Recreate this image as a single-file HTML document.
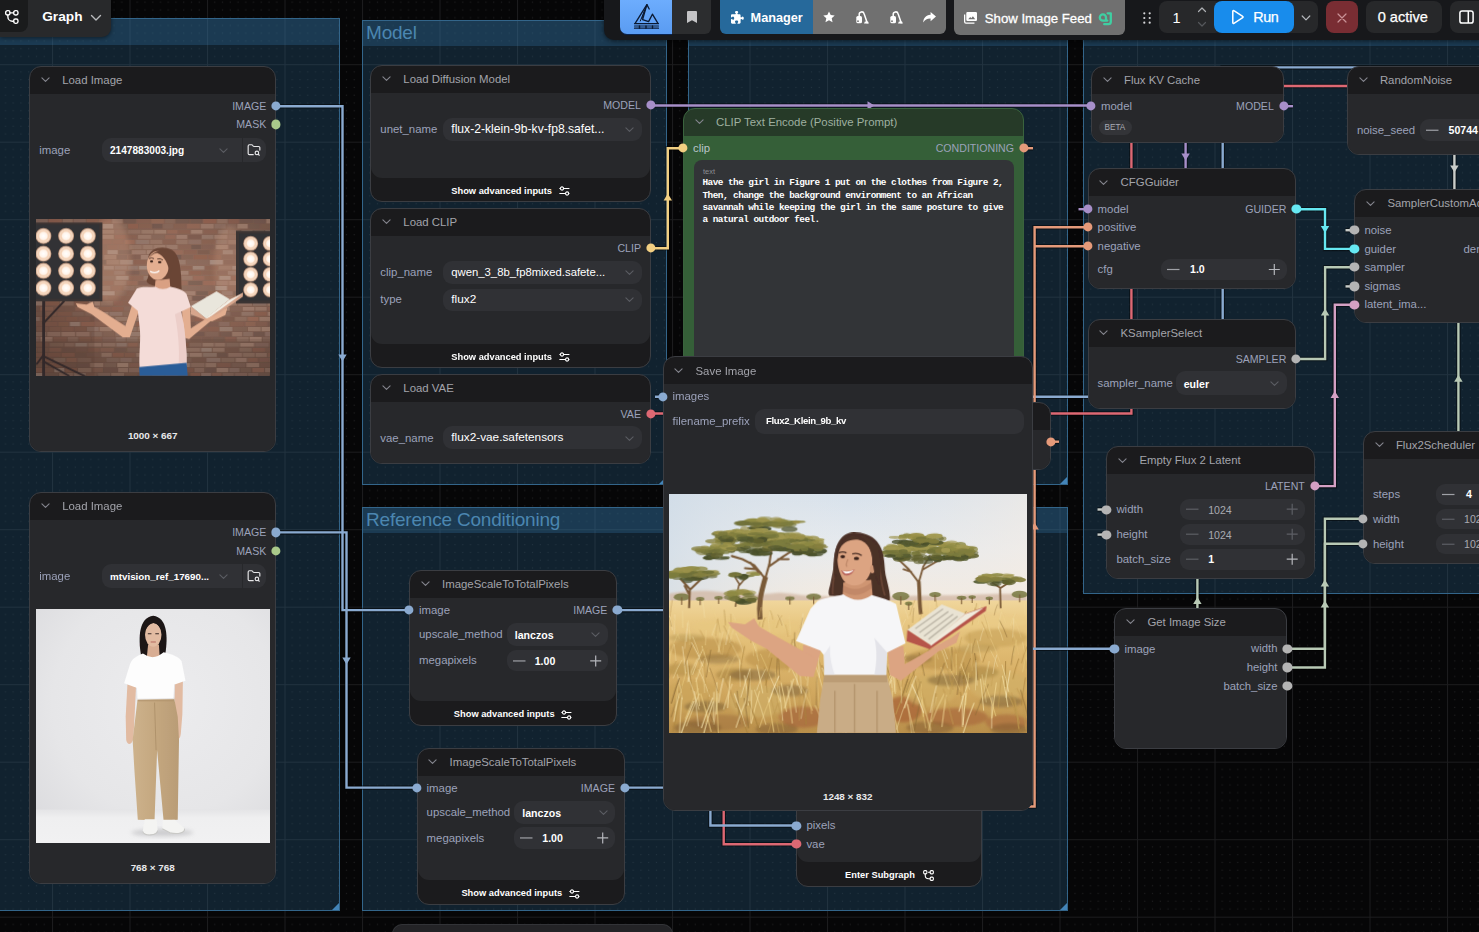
<!DOCTYPE html><html><head><meta charset="utf-8"><title>ComfyUI</title><style>
*{box-sizing:border-box;margin:0;padding:0}
html,body{width:1479px;height:932px;overflow:hidden;background:#060607}
body{font-family:"Liberation Sans",sans-serif;position:relative;color:#fff}
.abs,.node,.hd,.bd,.w,.t,.dot,.grp,.gt{position:absolute}
.grp{background:rgba(46,108,152,.28);border:1px solid #33658a}
.gt{left:0;top:0;right:0;background:rgba(56,126,178,.27)}
.gtx{position:absolute;left:3px;font-size:19px;color:#4b86b0;white-space:nowrap;line-height:1;letter-spacing:-.2px}
.node{background:#1b1b1d;border-radius:12px;border:1px solid #3b3d42}
.bd{left:1px;right:1px;background:#27282b;border-radius:0 0 11px 11px}
.t{white-space:nowrap;line-height:1;transform:translateY(-50%)}
.ttl{font-size:11.4px;color:#a3a4ab;margin-top:.8px}
.lbl{font-size:11.4px;color:#9ca2ba;margin-top:.8px}
.slo{font-size:10.6px;color:#9ca2ba}
.val{font-size:11.8px;color:#fff}
.valb{font-size:10.1px;color:#fff;font-weight:700;margin-top:.9px}
.dim{color:#a8aab0}
.w{background:#303135;border-radius:9px}
.dot{width:9.2px;height:9.2px;border-radius:50%;transform:translate(-50%,-50%)}
.foot{font-size:9.3px;font-weight:700;color:#fff}
.cap{margin-top:.9px;font-size:9.9px;font-weight:700;color:#e8e8ea}
svg{position:absolute;left:0;top:0;overflow:visible}
</style></head><body><svg width="1479" height="932"><defs><pattern id="grid" x="52" y="64.2" width="77.5" height="77.5" patternUnits="userSpaceOnUse">
<rect width="77.5" height="77.5" fill="#060607"/><g fill="#262628"><rect x="7.25" y="7.25" width="1" height="1"/><rect x="7.25" y="15.00" width="1" height="1"/><rect x="7.25" y="22.75" width="1" height="1"/><rect x="7.25" y="30.50" width="1" height="1"/><rect x="7.25" y="38.25" width="1" height="1"/><rect x="7.25" y="46.00" width="1" height="1"/><rect x="7.25" y="53.75" width="1" height="1"/><rect x="7.25" y="61.50" width="1" height="1"/><rect x="7.25" y="69.25" width="1" height="1"/><rect x="15.00" y="7.25" width="1" height="1"/><rect x="15.00" y="15.00" width="1" height="1"/><rect x="15.00" y="22.75" width="1" height="1"/><rect x="15.00" y="30.50" width="1" height="1"/><rect x="15.00" y="38.25" width="1" height="1"/><rect x="15.00" y="46.00" width="1" height="1"/><rect x="15.00" y="53.75" width="1" height="1"/><rect x="15.00" y="61.50" width="1" height="1"/><rect x="15.00" y="69.25" width="1" height="1"/><rect x="22.75" y="7.25" width="1" height="1"/><rect x="22.75" y="15.00" width="1" height="1"/><rect x="22.75" y="22.75" width="1" height="1"/><rect x="22.75" y="30.50" width="1" height="1"/><rect x="22.75" y="38.25" width="1" height="1"/><rect x="22.75" y="46.00" width="1" height="1"/><rect x="22.75" y="53.75" width="1" height="1"/><rect x="22.75" y="61.50" width="1" height="1"/><rect x="22.75" y="69.25" width="1" height="1"/><rect x="30.50" y="7.25" width="1" height="1"/><rect x="30.50" y="15.00" width="1" height="1"/><rect x="30.50" y="22.75" width="1" height="1"/><rect x="30.50" y="30.50" width="1" height="1"/><rect x="30.50" y="38.25" width="1" height="1"/><rect x="30.50" y="46.00" width="1" height="1"/><rect x="30.50" y="53.75" width="1" height="1"/><rect x="30.50" y="61.50" width="1" height="1"/><rect x="30.50" y="69.25" width="1" height="1"/><rect x="38.25" y="7.25" width="1" height="1"/><rect x="38.25" y="15.00" width="1" height="1"/><rect x="38.25" y="22.75" width="1" height="1"/><rect x="38.25" y="30.50" width="1" height="1"/><rect x="38.25" y="38.25" width="1" height="1"/><rect x="38.25" y="46.00" width="1" height="1"/><rect x="38.25" y="53.75" width="1" height="1"/><rect x="38.25" y="61.50" width="1" height="1"/><rect x="38.25" y="69.25" width="1" height="1"/><rect x="46.00" y="7.25" width="1" height="1"/><rect x="46.00" y="15.00" width="1" height="1"/><rect x="46.00" y="22.75" width="1" height="1"/><rect x="46.00" y="30.50" width="1" height="1"/><rect x="46.00" y="38.25" width="1" height="1"/><rect x="46.00" y="46.00" width="1" height="1"/><rect x="46.00" y="53.75" width="1" height="1"/><rect x="46.00" y="61.50" width="1" height="1"/><rect x="46.00" y="69.25" width="1" height="1"/><rect x="53.75" y="7.25" width="1" height="1"/><rect x="53.75" y="15.00" width="1" height="1"/><rect x="53.75" y="22.75" width="1" height="1"/><rect x="53.75" y="30.50" width="1" height="1"/><rect x="53.75" y="38.25" width="1" height="1"/><rect x="53.75" y="46.00" width="1" height="1"/><rect x="53.75" y="53.75" width="1" height="1"/><rect x="53.75" y="61.50" width="1" height="1"/><rect x="53.75" y="69.25" width="1" height="1"/><rect x="61.50" y="7.25" width="1" height="1"/><rect x="61.50" y="15.00" width="1" height="1"/><rect x="61.50" y="22.75" width="1" height="1"/><rect x="61.50" y="30.50" width="1" height="1"/><rect x="61.50" y="38.25" width="1" height="1"/><rect x="61.50" y="46.00" width="1" height="1"/><rect x="61.50" y="53.75" width="1" height="1"/><rect x="61.50" y="61.50" width="1" height="1"/><rect x="61.50" y="69.25" width="1" height="1"/><rect x="69.25" y="7.25" width="1" height="1"/><rect x="69.25" y="15.00" width="1" height="1"/><rect x="69.25" y="22.75" width="1" height="1"/><rect x="69.25" y="30.50" width="1" height="1"/><rect x="69.25" y="38.25" width="1" height="1"/><rect x="69.25" y="46.00" width="1" height="1"/><rect x="69.25" y="53.75" width="1" height="1"/><rect x="69.25" y="61.50" width="1" height="1"/><rect x="69.25" y="69.25" width="1" height="1"/></g>
<path d="M0 .5H77.5M.5 0V77.5" stroke="#1c1c1e" stroke-width="1" fill="none"/></pattern></defs>
<rect width="1479" height="932" fill="url(#grid)"/></svg><div class="grp" style="left:-10px;top:18px;width:350px;height:892.5px"><div class="gt" style="height:26px"></div><div class="abs" style="right:0;bottom:0;width:0;height:0;border-left:7px solid transparent;border-bottom:7px solid #4384b8"></div></div><div class="grp" style="left:362px;top:19.5px;width:305px;height:465.5px"><div class="gt" style="height:25.0px"><span class="gtx" style="top:2.2px">Model</span></div><div class="abs" style="right:0;bottom:0;width:0;height:0;border-left:7px solid transparent;border-bottom:7px solid #4384b8"></div></div><div class="grp" style="left:687.5px;top:19.5px;width:380.0px;height:465.5px"><div class="gt" style="height:25.0px"></div><div class="abs" style="right:0;bottom:0;width:0;height:0;border-left:7px solid transparent;border-bottom:7px solid #4384b8"></div></div><div class="grp" style="left:362px;top:507px;width:705.5px;height:403.5px"><div class="gt" style="height:25px"><span class="gtx" style="top:2.2px">Reference Conditioning</span></div><div class="abs" style="right:0;bottom:0;width:0;height:0;border-left:7px solid transparent;border-bottom:7px solid #4384b8"></div></div><div class="grp" style="left:1083px;top:19.5px;width:417px;height:574.5px"><div class="gt" style="height:25.0px"></div></div><svg width="1479" height="932" fill="none" stroke-linejoin="miter"><path d="M276 106.2L342.5 106.2L342.5 610.1L409 610.1" stroke="rgba(0,0,0,.45)" stroke-width="4.6"/><path d="M276 532.4L346.5 532.4L346.5 787.6L416.6 787.6" stroke="rgba(0,0,0,.45)" stroke-width="4.6"/><path d="M651 105.5L1091 105.5" stroke="rgba(0,0,0,.45)" stroke-width="4.6"/><path d="M651 248.2L667.8 248.2L667.8 148.2L683.5 148.2" stroke="rgba(0,0,0,.45)" stroke-width="4.6"/><path d="M651 413.5L723.7 413.5L723.7 844.3L796.4 844.3" stroke="rgba(0,0,0,.45)" stroke-width="4.6"/><path d="M723.7 413.5L1131.4 413.5L1131.4 86L1500 86" stroke="rgba(0,0,0,.45)" stroke-width="4.6"/><path d="M655 396.7L1222.7 396.7L1222.7 67.4L1500 67.4" stroke="rgba(0,0,0,.45)" stroke-width="4.6"/><path d="M1024 148.2L1033 148.2" stroke="rgba(0,0,0,.45)" stroke-width="4.6"/><path d="M1087.6 227.2L1034.6 227.2L1034.6 806.5L1020 806.5" stroke="rgba(0,0,0,.45)" stroke-width="4.6"/><path d="M1087.6 246.2L1034.6 246.2" stroke="rgba(0,0,0,.45)" stroke-width="4.6"/><path d="M1051 441.7L1059 441.7" stroke="rgba(0,0,0,.45)" stroke-width="4.6"/><path d="M1283.8 106.2L1293 106.2" stroke="rgba(0,0,0,.45)" stroke-width="4.6"/><path d="M1185.6 143L1185.6 168" stroke="rgba(0,0,0,.45)" stroke-width="4.6"/><path d="M1078.5 209.2L1087.6 209.2" stroke="rgba(0,0,0,.45)" stroke-width="4.6"/><path d="M1296.4 209.2L1325 209.2L1325 248.9L1354.4 248.9" stroke="rgba(0,0,0,.45)" stroke-width="4.6"/><path d="M1296.3 359L1325.1 359L1325.1 267.2L1354.4 267.2" stroke="rgba(0,0,0,.45)" stroke-width="4.6"/><path d="M1314.8 486.1L1334.8 486.1L1334.8 304.7L1354.4 304.7" stroke="rgba(0,0,0,.45)" stroke-width="4.6"/><path d="M1454.4 155L1454.4 189" stroke="rgba(0,0,0,.45)" stroke-width="4.6"/><path d="M1345.5 230.2L1354.4 230.2" stroke="rgba(0,0,0,.45)" stroke-width="4.6"/><path d="M1345.5 286.4L1354.4 286.4" stroke="rgba(0,0,0,.45)" stroke-width="4.6"/><path d="M1458.4 323L1458.4 431" stroke="rgba(0,0,0,.45)" stroke-width="4.6"/><path d="M1287.5 648.8L1324.9 648.8L1324.9 518.8L1362.9 518.8" stroke="rgba(0,0,0,.45)" stroke-width="4.6"/><path d="M1287.5 667.5L1324.9 667.5L1324.9 543.8L1362.9 543.8" stroke="rgba(0,0,0,.45)" stroke-width="4.6"/><path d="M1097.5 509.5L1106.4 509.5" stroke="rgba(0,0,0,.45)" stroke-width="4.6"/><path d="M1097.5 534.6L1106.4 534.6" stroke="rgba(0,0,0,.45)" stroke-width="4.6"/><path d="M1197.4 578L1197.4 608" stroke="rgba(0,0,0,.45)" stroke-width="4.6"/><path d="M1033 648.8L1114.4 648.8" stroke="rgba(0,0,0,.45)" stroke-width="4.6"/><path d="M617.4 610.1L663 610.1" stroke="rgba(0,0,0,.45)" stroke-width="4.6"/><path d="M624 787.6L663 787.6" stroke="rgba(0,0,0,.45)" stroke-width="4.6"/><path d="M710.4 800L710.4 825.5L796.4 825.5" stroke="rgba(0,0,0,.45)" stroke-width="4.6"/><path d="M276 106.2L342.5 106.2L342.5 610.1L409 610.1" stroke="#8aaad0" stroke-width="2.4"/><polygon points="338.3,354.5 346.7,354.5 342.5,361.5" fill="#8aaad0" stroke="none"/><path d="M276 532.4L346.5 532.4L346.5 787.6L416.6 787.6" stroke="#8aaad0" stroke-width="2.4"/><polygon points="342.3,657.5 350.7,657.5 346.5,664.5" fill="#8aaad0" stroke="none"/><path d="M651 105.5L1091 105.5" stroke="#a78fc9" stroke-width="2.4"/><polygon points="867.5,101.3 867.5,109.7 874.5,105.5" fill="#a78fc9" stroke="none"/><path d="M651 248.2L667.8 248.2L667.8 148.2L683.5 148.2" stroke="#f2cf82" stroke-width="2.4"/><polygon points="663.5999999999999,200.5 672.0,200.5 667.8,193.5" fill="#f2cf82" stroke="none"/><path d="M651 413.5L723.7 413.5L723.7 844.3L796.4 844.3" stroke="#dd6873" stroke-width="2.4"/><path d="M723.7 413.5L1131.4 413.5L1131.4 86L1500 86" stroke="#dd6873" stroke-width="2.4"/><path d="M655 396.7L1222.7 396.7L1222.7 67.4L1500 67.4" stroke="#8aaad0" stroke-width="2.4"/><path d="M1024 148.2L1033 148.2" stroke="#e59a7a" stroke-width="2.4"/><path d="M1087.6 227.2L1034.6 227.2L1034.6 806.5L1020 806.5" stroke="#e59a7a" stroke-width="2.4"/><polygon points="1030.3999999999999,529.5 1038.8,529.5 1034.6,522.5" fill="#e59a7a" stroke="none"/><path d="M1087.6 246.2L1034.6 246.2" stroke="#e59a7a" stroke-width="2.4"/><path d="M1051 441.7L1059 441.7" stroke="#e59a7a" stroke-width="2.4"/><path d="M1283.8 106.2L1293 106.2" stroke="#a78fc9" stroke-width="2.4"/><path d="M1185.6 143L1185.6 168" stroke="#a78fc9" stroke-width="2.4"/><polygon points="1181.3999999999999,153.5 1189.8,153.5 1185.6,160.5" fill="#a78fc9" stroke="none"/><path d="M1078.5 209.2L1087.6 209.2" stroke="#a78fc9" stroke-width="2.4"/><path d="M1296.4 209.2L1325 209.2L1325 248.9L1354.4 248.9" stroke="#66e8f2" stroke-width="2.4"/><polygon points="1320.8,226.0 1329.2,226.0 1325,233.0" fill="#66e8f2" stroke="none"/><path d="M1296.3 359L1325.1 359L1325.1 267.2L1354.4 267.2" stroke="#b8c9b5" stroke-width="2.4"/><polygon points="1320.8999999999999,315.5 1329.3,315.5 1325.1,308.5" fill="#b8c9b5" stroke="none"/><path d="M1314.8 486.1L1334.8 486.1L1334.8 304.7L1354.4 304.7" stroke="#d4a0c4" stroke-width="2.4"/><polygon points="1330.6,398.0 1339.0,398.0 1334.8,391.0" fill="#d4a0c4" stroke="none"/><path d="M1454.4 155L1454.4 189" stroke="#c9cdc9" stroke-width="2.4"/><polygon points="1450.2,165.5 1458.6000000000001,165.5 1454.4,172.5" fill="#c9cdc9" stroke="none"/><path d="M1345.5 230.2L1354.4 230.2" stroke="#c9cdc9" stroke-width="2.4"/><path d="M1345.5 286.4L1354.4 286.4" stroke="#c9cdc9" stroke-width="2.4"/><path d="M1458.4 323L1458.4 431" stroke="#b8c9b5" stroke-width="2.4"/><polygon points="1454.2,381.8 1462.6000000000001,381.8 1458.4,374.8" fill="#b8c9b5" stroke="none"/><path d="M1287.5 648.8L1324.9 648.8L1324.9 518.8L1362.9 518.8" stroke="#b8c9b5" stroke-width="2.4"/><polygon points="1320.7,586.5 1329.1000000000001,586.5 1324.9,579.5" fill="#b8c9b5" stroke="none"/><path d="M1287.5 667.5L1324.9 667.5L1324.9 543.8L1362.9 543.8" stroke="#b8c9b5" stroke-width="2.4"/><polygon points="1320.7,607.5 1329.1000000000001,607.5 1324.9,600.5" fill="#b8c9b5" stroke="none"/><path d="M1097.5 509.5L1106.4 509.5" stroke="#c9cdc9" stroke-width="2.4"/><path d="M1097.5 534.6L1106.4 534.6" stroke="#c9cdc9" stroke-width="2.4"/><path d="M1197.4 578L1197.4 608" stroke="#b8c9b5" stroke-width="2.4"/><polygon points="1193.2,604.0 1201.6000000000001,604.0 1197.4,597.0" fill="#b8c9b5" stroke="none"/><path d="M1033 648.8L1114.4 648.8" stroke="#8aaad0" stroke-width="2.4"/><path d="M617.4 610.1L663 610.1" stroke="#8aaad0" stroke-width="2.4"/><path d="M624 787.6L663 787.6" stroke="#8aaad0" stroke-width="2.4"/><path d="M710.4 800L710.4 825.5L796.4 825.5" stroke="#8aaad0" stroke-width="2.4"/></svg><div class="node" style="left:29.2px;top:65.5px;width:247.10000000000002px;height:386.5px;background:#1b1b1d"><div class="abs" style="left:-1px;top:-1px;width:247.10000000000002px;height:386.5px"><div class="bd" style="top:28px;height:357.5px;background:#27282b"></div><svg width="9" height="5.4" viewBox="0 0 10 6" style="left:11.7px;top:11.600000000000001px"><path d="M1 1l4 4 4-4" fill="none" stroke="#85868f" stroke-width="1.2" stroke-linecap="round" stroke-linejoin="round"/></svg><span class="t ttl" style="left:33px;top:14.5px;color:#a3a4ab">Load Image</span><div class="dot" style="left:247.10000000000002px;top:40.5px;background:#8aaad0"></div><span class="t slo" style="right:10px;top:40.5px;">IMAGE</span><div class="dot" style="left:247.10000000000002px;top:58.900000000000006px;background:#a9c98a"></div><span class="t slo" style="right:10px;top:58.900000000000006px;">MASK</span><span class="t lbl" style="left:10px;top:84.25px;">image</span><div class="w" style="left:73.3px;top:72.0px;width:164.0px;height:24.5px;"></div><span class="t valb" style="left:80.8px;top:84.25px;">2147883003.jpg</span><svg width="9" height="5.4" viewBox="0 0 10 6" style="left:190.3px;top:82.05px"><path d="M1 1l4 4 4-4" fill="none" stroke="#5b5d63" stroke-width="1.2" stroke-linecap="round" stroke-linejoin="round"/></svg><div class="abs" style="left:212.8px;top:72.0px;width:1px;height:24.5px;background:#27282b"></div><svg width="14" height="14" viewBox="0 0 24 24" style="left:218.3px;top:77.25px"><g fill="none" stroke="#e6e6e8" stroke-width="2" stroke-linecap="round" stroke-linejoin="round"><path d="M10.7 20H4a2 2 0 0 1-2-2V5a2 2 0 0 1 2-2h3.9a2 2 0 0 1 1.69.9l.81 1.2a2 2 0 0 0 1.67.9H20a2 2 0 0 1 2 2v4.1"/><circle cx="17" cy="17" r="3"/><path d="m21 21-1.9-1.9"/></g></svg><div class="abs" style="left:7.099999999999998px;top:153.7px;width:234px;height:156.5px;overflow:hidden"><svg width="234.5" height="156.8" viewBox="15 22 1325 886" preserveAspectRatio="none" style="position:absolute;left:0;top:0"><defs>
<radialGradient id="p1bg" cx="57%" cy="38%" r="75%"><stop offset="0" stop-color="#987362"/><stop offset=".55" stop-color="#7f5e50"/><stop offset="1" stop-color="#5e463d"/></radialGradient>
<radialGradient id="p1b"><stop offset="0" stop-color="#ffffff"/><stop offset=".45" stop-color="#fff4ea"/><stop offset=".62" stop-color="#f6d2b6"/><stop offset=".8" stop-color="#f3d9c4"/><stop offset="1" stop-color="#b98a6e"/></radialGradient>
<filter id="p1f" x="-5%" y="-5%" width="110%" height="110%"><feGaussianBlur stdDeviation="3.2"/></filter>
<filter id="p1g" x="-50%" y="-50%" width="200%" height="200%"><feGaussianBlur stdDeviation="14"/></filter>
</defs><rect x="15" y="22" width="1325" height="886" fill="url(#p1bg)"/><g filter="url(#p1f)"><rect x="8" y="24" width="73" height="23" fill="#9a8278" opacity="0.30"/><rect x="86" y="24" width="74" height="23" fill="#965f4c" opacity="0.47"/><rect x="165" y="24" width="57" height="23" fill="#bb9a88" opacity="0.25"/><rect x="227" y="24" width="70" height="23" fill="#8a6e62" opacity="0.44"/><rect x="302" y="24" width="61" height="23" fill="#965f4c" opacity="0.44"/><rect x="368" y="24" width="72" height="23" fill="#965f4c" opacity="0.39"/><rect x="445" y="24" width="59" height="23" fill="#a58676" opacity="0.47"/><rect x="509" y="24" width="71" height="23" fill="#69524a" opacity="0.51"/><rect x="585" y="24" width="76" height="23" fill="#8e5f4e" opacity="0.31"/><rect x="666" y="24" width="73" height="23" fill="#a56e5a" opacity="0.36"/><rect x="744" y="24" width="55" height="23" fill="#8a6e62" opacity="0.42"/><rect x="804" y="24" width="78" height="23" fill="#69524a" opacity="0.50"/><rect x="887" y="24" width="68" height="23" fill="#69524a" opacity="0.50"/><rect x="960" y="24" width="73" height="23" fill="#965f4c" opacity="0.59"/><rect x="1038" y="24" width="59" height="23" fill="#b39282" opacity="0.28"/><rect x="1102" y="24" width="59" height="23" fill="#965f4c" opacity="0.33"/><rect x="1166" y="24" width="76" height="23" fill="#69524a" opacity="0.52"/><rect x="1247" y="24" width="64" height="23" fill="#69524a" opacity="0.43"/><rect x="1316" y="24" width="67" height="23" fill="#bb9a88" opacity="0.37"/><rect x="-41" y="53" width="68" height="23" fill="#bb9a88" opacity="0.33"/><rect x="32" y="53" width="65" height="23" fill="#b8a69c" opacity="0.57"/><rect x="102" y="53" width="55" height="23" fill="#8a6e62" opacity="0.60"/><rect x="162" y="53" width="76" height="23" fill="#77564a" opacity="0.49"/><rect x="243" y="53" width="65" height="23" fill="#9a8278" opacity="0.57"/><rect x="313" y="53" width="73" height="23" fill="#8e5f4e" opacity="0.50"/><rect x="391" y="53" width="61" height="23" fill="#b8a69c" opacity="0.54"/><rect x="457" y="53" width="73" height="23" fill="#8a6e62" opacity="0.35"/><rect x="535" y="53" width="57" height="23" fill="#965f4c" opacity="0.55"/><rect x="597" y="53" width="70" height="23" fill="#8e5f4e" opacity="0.37"/><rect x="672" y="53" width="57" height="23" fill="#69524a" opacity="0.56"/><rect x="734" y="53" width="55" height="23" fill="#8a6e62" opacity="0.40"/><rect x="794" y="53" width="68" height="23" fill="#8e5f4e" opacity="0.27"/><rect x="867" y="53" width="74" height="23" fill="#a56e5a" opacity="0.38"/><rect x="946" y="53" width="73" height="23" fill="#b39282" opacity="0.44"/><rect x="1024" y="53" width="63" height="23" fill="#9a8278" opacity="0.33"/><rect x="1092" y="53" width="56" height="23" fill="#8a6e62" opacity="0.25"/><rect x="1153" y="53" width="58" height="23" fill="#bb9a88" opacity="0.44"/><rect x="1216" y="53" width="61" height="23" fill="#69524a" opacity="0.35"/><rect x="1282" y="53" width="63" height="23" fill="#77564a" opacity="0.49"/><rect x="5" y="82" width="65" height="23" fill="#b39282" opacity="0.59"/><rect x="75" y="82" width="67" height="23" fill="#69524a" opacity="0.41"/><rect x="147" y="82" width="71" height="23" fill="#69524a" opacity="0.48"/><rect x="223" y="82" width="74" height="23" fill="#b8a69c" opacity="0.45"/><rect x="302" y="82" width="74" height="23" fill="#9a8278" opacity="0.34"/><rect x="381" y="82" width="75" height="23" fill="#a58676" opacity="0.58"/><rect x="461" y="82" width="68" height="23" fill="#8a6e62" opacity="0.43"/><rect x="534" y="82" width="72" height="23" fill="#b39282" opacity="0.25"/><rect x="611" y="82" width="68" height="23" fill="#bb9a88" opacity="0.36"/><rect x="684" y="82" width="67" height="23" fill="#bb9a88" opacity="0.46"/><rect x="756" y="82" width="59" height="23" fill="#a56e5a" opacity="0.47"/><rect x="820" y="82" width="65" height="23" fill="#965f4c" opacity="0.37"/><rect x="890" y="82" width="66" height="23" fill="#bb9a88" opacity="0.50"/><rect x="961" y="82" width="78" height="23" fill="#965f4c" opacity="0.26"/><rect x="1044" y="82" width="56" height="23" fill="#b8a69c" opacity="0.26"/><rect x="1105" y="82" width="66" height="23" fill="#8a6e62" opacity="0.47"/><rect x="1176" y="82" width="64" height="23" fill="#bb9a88" opacity="0.46"/><rect x="1245" y="82" width="60" height="23" fill="#b39282" opacity="0.31"/><rect x="1310" y="82" width="79" height="23" fill="#b39282" opacity="0.55"/><rect x="-31" y="111" width="64" height="23" fill="#69524a" opacity="0.29"/><rect x="38" y="111" width="55" height="23" fill="#bb9a88" opacity="0.49"/><rect x="98" y="111" width="59" height="23" fill="#8a6e62" opacity="0.43"/><rect x="162" y="111" width="75" height="23" fill="#8a6e62" opacity="0.33"/><rect x="242" y="111" width="60" height="23" fill="#b8a69c" opacity="0.40"/><rect x="307" y="111" width="77" height="23" fill="#8e5f4e" opacity="0.29"/><rect x="389" y="111" width="65" height="23" fill="#b39282" opacity="0.49"/><rect x="459" y="111" width="62" height="23" fill="#965f4c" opacity="0.53"/><rect x="526" y="111" width="60" height="23" fill="#8e5f4e" opacity="0.37"/><rect x="591" y="111" width="75" height="23" fill="#a58676" opacity="0.56"/><rect x="671" y="111" width="69" height="23" fill="#8a6e62" opacity="0.33"/><rect x="745" y="111" width="58" height="23" fill="#a56e5a" opacity="0.44"/><rect x="808" y="111" width="61" height="23" fill="#b39282" opacity="0.53"/><rect x="874" y="111" width="73" height="23" fill="#77564a" opacity="0.55"/><rect x="952" y="111" width="65" height="23" fill="#b8a69c" opacity="0.28"/><rect x="1022" y="111" width="74" height="23" fill="#b39282" opacity="0.46"/><rect x="1101" y="111" width="68" height="23" fill="#8a6e62" opacity="0.43"/><rect x="1174" y="111" width="63" height="23" fill="#965f4c" opacity="0.37"/><rect x="1242" y="111" width="68" height="23" fill="#8a6e62" opacity="0.40"/><rect x="1315" y="111" width="68" height="23" fill="#a56e5a" opacity="0.57"/><rect x="11" y="140" width="61" height="23" fill="#a56e5a" opacity="0.42"/><rect x="77" y="140" width="74" height="23" fill="#9a8278" opacity="0.40"/><rect x="156" y="140" width="77" height="23" fill="#a58676" opacity="0.26"/><rect x="238" y="140" width="69" height="23" fill="#b8a69c" opacity="0.51"/><rect x="312" y="140" width="64" height="23" fill="#9a8278" opacity="0.37"/><rect x="381" y="140" width="62" height="23" fill="#8e5f4e" opacity="0.55"/><rect x="448" y="140" width="64" height="23" fill="#8e5f4e" opacity="0.53"/><rect x="517" y="140" width="56" height="23" fill="#a56e5a" opacity="0.57"/><rect x="578" y="140" width="77" height="23" fill="#9a8278" opacity="0.57"/><rect x="660" y="140" width="68" height="23" fill="#bb9a88" opacity="0.27"/><rect x="733" y="140" width="70" height="23" fill="#8e5f4e" opacity="0.31"/><rect x="808" y="140" width="64" height="23" fill="#a58676" opacity="0.48"/><rect x="877" y="140" width="71" height="23" fill="#9a8278" opacity="0.39"/><rect x="953" y="140" width="74" height="23" fill="#8e5f4e" opacity="0.37"/><rect x="1032" y="140" width="63" height="23" fill="#9a8278" opacity="0.42"/><rect x="1100" y="140" width="56" height="23" fill="#b39282" opacity="0.33"/><rect x="1161" y="140" width="58" height="23" fill="#9a8278" opacity="0.56"/><rect x="1224" y="140" width="58" height="23" fill="#77564a" opacity="0.33"/><rect x="1287" y="140" width="63" height="23" fill="#77564a" opacity="0.54"/><rect x="-23" y="169" width="70" height="23" fill="#b8a69c" opacity="0.45"/><rect x="52" y="169" width="67" height="23" fill="#a56e5a" opacity="0.51"/><rect x="124" y="169" width="62" height="23" fill="#8a6e62" opacity="0.47"/><rect x="191" y="169" width="71" height="23" fill="#69524a" opacity="0.27"/><rect x="267" y="169" width="65" height="23" fill="#a56e5a" opacity="0.55"/><rect x="337" y="169" width="79" height="23" fill="#77564a" opacity="0.27"/><rect x="421" y="169" width="56" height="23" fill="#8e5f4e" opacity="0.42"/><rect x="482" y="169" width="56" height="23" fill="#8e5f4e" opacity="0.43"/><rect x="543" y="169" width="70" height="23" fill="#b39282" opacity="0.30"/><rect x="618" y="169" width="57" height="23" fill="#b39282" opacity="0.39"/><rect x="680" y="169" width="67" height="23" fill="#bb9a88" opacity="0.36"/><rect x="752" y="169" width="63" height="23" fill="#a58676" opacity="0.60"/><rect x="820" y="169" width="68" height="23" fill="#8e5f4e" opacity="0.29"/><rect x="893" y="169" width="55" height="23" fill="#69524a" opacity="0.53"/><rect x="953" y="169" width="73" height="23" fill="#77564a" opacity="0.27"/><rect x="1031" y="169" width="69" height="23" fill="#bb9a88" opacity="0.48"/><rect x="1105" y="169" width="72" height="23" fill="#69524a" opacity="0.47"/><rect x="1182" y="169" width="56" height="23" fill="#bb9a88" opacity="0.56"/><rect x="1243" y="169" width="56" height="23" fill="#b39282" opacity="0.47"/><rect x="1304" y="169" width="79" height="23" fill="#b39282" opacity="0.40"/><rect x="2" y="198" width="69" height="23" fill="#a56e5a" opacity="0.34"/><rect x="76" y="198" width="72" height="23" fill="#8a6e62" opacity="0.49"/><rect x="153" y="198" width="57" height="23" fill="#69524a" opacity="0.33"/><rect x="215" y="198" width="59" height="23" fill="#a56e5a" opacity="0.58"/><rect x="279" y="198" width="66" height="23" fill="#9a8278" opacity="0.53"/><rect x="350" y="198" width="63" height="23" fill="#8e5f4e" opacity="0.41"/><rect x="418" y="198" width="58" height="23" fill="#b8a69c" opacity="0.55"/><rect x="481" y="198" width="71" height="23" fill="#69524a" opacity="0.48"/><rect x="557" y="198" width="78" height="23" fill="#b39282" opacity="0.45"/><rect x="640" y="198" width="58" height="23" fill="#bb9a88" opacity="0.50"/><rect x="703" y="198" width="70" height="23" fill="#77564a" opacity="0.33"/><rect x="778" y="198" width="67" height="23" fill="#a56e5a" opacity="0.43"/><rect x="850" y="198" width="73" height="23" fill="#8e5f4e" opacity="0.48"/><rect x="928" y="198" width="67" height="23" fill="#77564a" opacity="0.54"/><rect x="1000" y="198" width="65" height="23" fill="#8e5f4e" opacity="0.26"/><rect x="1070" y="198" width="58" height="23" fill="#b8a69c" opacity="0.42"/><rect x="1133" y="198" width="77" height="23" fill="#8a6e62" opacity="0.45"/><rect x="1215" y="198" width="57" height="23" fill="#a56e5a" opacity="0.60"/><rect x="1277" y="198" width="73" height="23" fill="#9a8278" opacity="0.44"/><rect x="-30" y="227" width="58" height="23" fill="#9a8278" opacity="0.51"/><rect x="33" y="227" width="72" height="23" fill="#a56e5a" opacity="0.44"/><rect x="110" y="227" width="73" height="23" fill="#77564a" opacity="0.54"/><rect x="188" y="227" width="62" height="23" fill="#77564a" opacity="0.48"/><rect x="255" y="227" width="69" height="23" fill="#bb9a88" opacity="0.50"/><rect x="329" y="227" width="67" height="23" fill="#8a6e62" opacity="0.38"/><rect x="401" y="227" width="67" height="23" fill="#b39282" opacity="0.44"/><rect x="473" y="227" width="57" height="23" fill="#69524a" opacity="0.43"/><rect x="535" y="227" width="68" height="23" fill="#77564a" opacity="0.40"/><rect x="608" y="227" width="73" height="23" fill="#bb9a88" opacity="0.49"/><rect x="686" y="227" width="71" height="23" fill="#b8a69c" opacity="0.42"/><rect x="762" y="227" width="75" height="23" fill="#69524a" opacity="0.56"/><rect x="842" y="227" width="59" height="23" fill="#77564a" opacity="0.28"/><rect x="906" y="227" width="78" height="23" fill="#965f4c" opacity="0.57"/><rect x="989" y="227" width="71" height="23" fill="#965f4c" opacity="0.46"/><rect x="1065" y="227" width="60" height="23" fill="#77564a" opacity="0.34"/><rect x="1130" y="227" width="61" height="23" fill="#77564a" opacity="0.45"/><rect x="1196" y="227" width="65" height="23" fill="#a58676" opacity="0.55"/><rect x="1266" y="227" width="72" height="23" fill="#8a6e62" opacity="0.48"/><rect x="2" y="256" width="74" height="23" fill="#bb9a88" opacity="0.45"/><rect x="81" y="256" width="63" height="23" fill="#a58676" opacity="0.36"/><rect x="149" y="256" width="63" height="23" fill="#965f4c" opacity="0.53"/><rect x="217" y="256" width="61" height="23" fill="#77564a" opacity="0.45"/><rect x="283" y="256" width="62" height="23" fill="#b39282" opacity="0.42"/><rect x="350" y="256" width="59" height="23" fill="#69524a" opacity="0.60"/><rect x="414" y="256" width="70" height="23" fill="#bb9a88" opacity="0.32"/><rect x="489" y="256" width="73" height="23" fill="#b8a69c" opacity="0.44"/><rect x="567" y="256" width="70" height="23" fill="#8e5f4e" opacity="0.55"/><rect x="642" y="256" width="67" height="23" fill="#a56e5a" opacity="0.41"/><rect x="714" y="256" width="62" height="23" fill="#a58676" opacity="0.48"/><rect x="781" y="256" width="79" height="23" fill="#b8a69c" opacity="0.27"/><rect x="865" y="256" width="61" height="23" fill="#8a6e62" opacity="0.33"/><rect x="931" y="256" width="61" height="23" fill="#8a6e62" opacity="0.30"/><rect x="997" y="256" width="74" height="23" fill="#b8a69c" opacity="0.55"/><rect x="1076" y="256" width="63" height="23" fill="#77564a" opacity="0.55"/><rect x="1144" y="256" width="65" height="23" fill="#77564a" opacity="0.40"/><rect x="1214" y="256" width="78" height="23" fill="#8e5f4e" opacity="0.29"/><rect x="1297" y="256" width="63" height="23" fill="#8a6e62" opacity="0.26"/><rect x="-37" y="285" width="73" height="23" fill="#b8a69c" opacity="0.37"/><rect x="41" y="285" width="55" height="23" fill="#b39282" opacity="0.37"/><rect x="101" y="285" width="67" height="23" fill="#965f4c" opacity="0.28"/><rect x="173" y="285" width="75" height="23" fill="#bb9a88" opacity="0.51"/><rect x="253" y="285" width="70" height="23" fill="#69524a" opacity="0.29"/><rect x="328" y="285" width="65" height="23" fill="#8e5f4e" opacity="0.56"/><rect x="398" y="285" width="57" height="23" fill="#b8a69c" opacity="0.40"/><rect x="460" y="285" width="69" height="23" fill="#9a8278" opacity="0.57"/><rect x="534" y="285" width="58" height="23" fill="#9a8278" opacity="0.58"/><rect x="597" y="285" width="66" height="23" fill="#b8a69c" opacity="0.52"/><rect x="668" y="285" width="79" height="23" fill="#965f4c" opacity="0.35"/><rect x="752" y="285" width="76" height="23" fill="#b8a69c" opacity="0.48"/><rect x="833" y="285" width="63" height="23" fill="#8e5f4e" opacity="0.51"/><rect x="901" y="285" width="65" height="23" fill="#b8a69c" opacity="0.45"/><rect x="971" y="285" width="71" height="23" fill="#8e5f4e" opacity="0.48"/><rect x="1047" y="285" width="71" height="23" fill="#b39282" opacity="0.27"/><rect x="1123" y="285" width="64" height="23" fill="#b8a69c" opacity="0.50"/><rect x="1192" y="285" width="78" height="23" fill="#77564a" opacity="0.48"/><rect x="1275" y="285" width="78" height="23" fill="#b8a69c" opacity="0.30"/><rect x="4" y="314" width="75" height="23" fill="#965f4c" opacity="0.29"/><rect x="84" y="314" width="72" height="23" fill="#77564a" opacity="0.57"/><rect x="161" y="314" width="75" height="23" fill="#b8a69c" opacity="0.46"/><rect x="241" y="314" width="72" height="23" fill="#8a6e62" opacity="0.48"/><rect x="318" y="314" width="69" height="23" fill="#965f4c" opacity="0.36"/><rect x="392" y="314" width="60" height="23" fill="#8e5f4e" opacity="0.29"/><rect x="457" y="314" width="60" height="23" fill="#9a8278" opacity="0.44"/><rect x="522" y="314" width="78" height="23" fill="#69524a" opacity="0.38"/><rect x="605" y="314" width="63" height="23" fill="#8a6e62" opacity="0.38"/><rect x="673" y="314" width="59" height="23" fill="#a56e5a" opacity="0.42"/><rect x="737" y="314" width="63" height="23" fill="#a58676" opacity="0.49"/><rect x="805" y="314" width="71" height="23" fill="#b39282" opacity="0.56"/><rect x="881" y="314" width="67" height="23" fill="#965f4c" opacity="0.44"/><rect x="953" y="314" width="79" height="23" fill="#8e5f4e" opacity="0.37"/><rect x="1037" y="314" width="58" height="23" fill="#77564a" opacity="0.34"/><rect x="1100" y="314" width="58" height="23" fill="#b8a69c" opacity="0.29"/><rect x="1163" y="314" width="79" height="23" fill="#8e5f4e" opacity="0.31"/><rect x="1247" y="314" width="61" height="23" fill="#bb9a88" opacity="0.40"/><rect x="1313" y="314" width="78" height="23" fill="#69524a" opacity="0.54"/><rect x="-27" y="343" width="73" height="23" fill="#bb9a88" opacity="0.30"/><rect x="51" y="343" width="67" height="23" fill="#a58676" opacity="0.44"/><rect x="123" y="343" width="60" height="23" fill="#bb9a88" opacity="0.31"/><rect x="188" y="343" width="63" height="23" fill="#b39282" opacity="0.52"/><rect x="256" y="343" width="55" height="23" fill="#965f4c" opacity="0.56"/><rect x="316" y="343" width="67" height="23" fill="#b39282" opacity="0.44"/><rect x="388" y="343" width="73" height="23" fill="#8a6e62" opacity="0.47"/><rect x="466" y="343" width="71" height="23" fill="#b8a69c" opacity="0.50"/><rect x="542" y="343" width="76" height="23" fill="#965f4c" opacity="0.26"/><rect x="623" y="343" width="61" height="23" fill="#b8a69c" opacity="0.25"/><rect x="689" y="343" width="79" height="23" fill="#b8a69c" opacity="0.33"/><rect x="773" y="343" width="60" height="23" fill="#9a8278" opacity="0.47"/><rect x="838" y="343" width="61" height="23" fill="#a58676" opacity="0.52"/><rect x="904" y="343" width="61" height="23" fill="#a56e5a" opacity="0.53"/><rect x="970" y="343" width="75" height="23" fill="#965f4c" opacity="0.29"/><rect x="1050" y="343" width="64" height="23" fill="#b8a69c" opacity="0.56"/><rect x="1119" y="343" width="59" height="23" fill="#965f4c" opacity="0.53"/><rect x="1183" y="343" width="74" height="23" fill="#a56e5a" opacity="0.26"/><rect x="1262" y="343" width="74" height="23" fill="#a58676" opacity="0.43"/><rect x="0" y="372" width="72" height="23" fill="#a56e5a" opacity="0.58"/><rect x="77" y="372" width="65" height="23" fill="#b39282" opacity="0.55"/><rect x="147" y="372" width="77" height="23" fill="#77564a" opacity="0.28"/><rect x="229" y="372" width="74" height="23" fill="#a56e5a" opacity="0.50"/><rect x="308" y="372" width="78" height="23" fill="#b39282" opacity="0.60"/><rect x="391" y="372" width="61" height="23" fill="#8e5f4e" opacity="0.55"/><rect x="457" y="372" width="68" height="23" fill="#a58676" opacity="0.42"/><rect x="530" y="372" width="58" height="23" fill="#a56e5a" opacity="0.39"/><rect x="593" y="372" width="61" height="23" fill="#77564a" opacity="0.39"/><rect x="659" y="372" width="70" height="23" fill="#8e5f4e" opacity="0.44"/><rect x="734" y="372" width="68" height="23" fill="#a58676" opacity="0.48"/><rect x="807" y="372" width="64" height="23" fill="#a56e5a" opacity="0.41"/><rect x="876" y="372" width="79" height="23" fill="#69524a" opacity="0.40"/><rect x="960" y="372" width="69" height="23" fill="#a56e5a" opacity="0.50"/><rect x="1034" y="372" width="66" height="23" fill="#b39282" opacity="0.41"/><rect x="1105" y="372" width="66" height="23" fill="#bb9a88" opacity="0.39"/><rect x="1176" y="372" width="55" height="23" fill="#a58676" opacity="0.34"/><rect x="1236" y="372" width="66" height="23" fill="#77564a" opacity="0.55"/><rect x="1307" y="372" width="72" height="23" fill="#a58676" opacity="0.31"/><rect x="-23" y="401" width="60" height="23" fill="#bb9a88" opacity="0.39"/><rect x="42" y="401" width="60" height="23" fill="#b8a69c" opacity="0.26"/><rect x="107" y="401" width="58" height="23" fill="#bb9a88" opacity="0.31"/><rect x="170" y="401" width="70" height="23" fill="#77564a" opacity="0.27"/><rect x="245" y="401" width="55" height="23" fill="#69524a" opacity="0.41"/><rect x="305" y="401" width="68" height="23" fill="#a56e5a" opacity="0.50"/><rect x="378" y="401" width="56" height="23" fill="#a58676" opacity="0.39"/><rect x="439" y="401" width="67" height="23" fill="#965f4c" opacity="0.26"/><rect x="511" y="401" width="62" height="23" fill="#a58676" opacity="0.28"/><rect x="578" y="401" width="70" height="23" fill="#a58676" opacity="0.31"/><rect x="653" y="401" width="74" height="23" fill="#8e5f4e" opacity="0.37"/><rect x="732" y="401" width="58" height="23" fill="#bb9a88" opacity="0.27"/><rect x="795" y="401" width="78" height="23" fill="#8a6e62" opacity="0.35"/><rect x="878" y="401" width="69" height="23" fill="#8a6e62" opacity="0.42"/><rect x="952" y="401" width="72" height="23" fill="#8a6e62" opacity="0.26"/><rect x="1029" y="401" width="65" height="23" fill="#b8a69c" opacity="0.60"/><rect x="1099" y="401" width="65" height="23" fill="#8e5f4e" opacity="0.27"/><rect x="1169" y="401" width="68" height="23" fill="#8e5f4e" opacity="0.46"/><rect x="1242" y="401" width="55" height="23" fill="#8e5f4e" opacity="0.26"/><rect x="1302" y="401" width="57" height="23" fill="#a56e5a" opacity="0.31"/><rect x="14" y="430" width="70" height="23" fill="#a56e5a" opacity="0.32"/><rect x="89" y="430" width="71" height="23" fill="#b39282" opacity="0.32"/><rect x="165" y="430" width="79" height="23" fill="#965f4c" opacity="0.37"/><rect x="249" y="430" width="70" height="23" fill="#b39282" opacity="0.58"/><rect x="324" y="430" width="56" height="23" fill="#69524a" opacity="0.36"/><rect x="385" y="430" width="74" height="23" fill="#b8a69c" opacity="0.58"/><rect x="464" y="430" width="57" height="23" fill="#8a6e62" opacity="0.31"/><rect x="526" y="430" width="68" height="23" fill="#8e5f4e" opacity="0.43"/><rect x="599" y="430" width="72" height="23" fill="#b39282" opacity="0.44"/><rect x="676" y="430" width="79" height="23" fill="#69524a" opacity="0.31"/><rect x="760" y="430" width="78" height="23" fill="#69524a" opacity="0.54"/><rect x="843" y="430" width="72" height="23" fill="#b39282" opacity="0.57"/><rect x="920" y="430" width="66" height="23" fill="#69524a" opacity="0.40"/><rect x="991" y="430" width="69" height="23" fill="#965f4c" opacity="0.37"/><rect x="1065" y="430" width="60" height="23" fill="#9a8278" opacity="0.50"/><rect x="1130" y="430" width="74" height="23" fill="#69524a" opacity="0.58"/><rect x="1209" y="430" width="56" height="23" fill="#77564a" opacity="0.31"/><rect x="1270" y="430" width="79" height="23" fill="#a56e5a" opacity="0.54"/><rect x="-25" y="459" width="79" height="23" fill="#b8a69c" opacity="0.48"/><rect x="59" y="459" width="65" height="23" fill="#a58676" opacity="0.46"/><rect x="129" y="459" width="75" height="23" fill="#a56e5a" opacity="0.56"/><rect x="209" y="459" width="56" height="23" fill="#965f4c" opacity="0.41"/><rect x="270" y="459" width="78" height="23" fill="#b8a69c" opacity="0.37"/><rect x="353" y="459" width="66" height="23" fill="#a56e5a" opacity="0.28"/><rect x="424" y="459" width="67" height="23" fill="#8e5f4e" opacity="0.37"/><rect x="496" y="459" width="64" height="23" fill="#8e5f4e" opacity="0.41"/><rect x="565" y="459" width="75" height="23" fill="#a58676" opacity="0.33"/><rect x="645" y="459" width="56" height="23" fill="#77564a" opacity="0.58"/><rect x="706" y="459" width="59" height="23" fill="#bb9a88" opacity="0.59"/><rect x="770" y="459" width="58" height="23" fill="#a58676" opacity="0.35"/><rect x="833" y="459" width="61" height="23" fill="#a58676" opacity="0.55"/><rect x="899" y="459" width="71" height="23" fill="#69524a" opacity="0.43"/><rect x="975" y="459" width="74" height="23" fill="#b39282" opacity="0.53"/><rect x="1054" y="459" width="72" height="23" fill="#a58676" opacity="0.41"/><rect x="1131" y="459" width="74" height="23" fill="#8e5f4e" opacity="0.26"/><rect x="1210" y="459" width="58" height="23" fill="#bb9a88" opacity="0.26"/><rect x="1273" y="459" width="58" height="23" fill="#a58676" opacity="0.58"/><rect x="1336" y="459" width="63" height="23" fill="#8e5f4e" opacity="0.29"/><rect x="3" y="488" width="62" height="23" fill="#b8a69c" opacity="0.47"/><rect x="70" y="488" width="75" height="23" fill="#965f4c" opacity="0.52"/><rect x="150" y="488" width="77" height="23" fill="#b39282" opacity="0.39"/><rect x="232" y="488" width="76" height="23" fill="#965f4c" opacity="0.52"/><rect x="313" y="488" width="64" height="23" fill="#bb9a88" opacity="0.41"/><rect x="382" y="488" width="67" height="23" fill="#a58676" opacity="0.29"/><rect x="454" y="488" width="55" height="23" fill="#965f4c" opacity="0.35"/><rect x="514" y="488" width="75" height="23" fill="#8e5f4e" opacity="0.37"/><rect x="594" y="488" width="61" height="23" fill="#965f4c" opacity="0.51"/><rect x="660" y="488" width="72" height="23" fill="#b8a69c" opacity="0.51"/><rect x="737" y="488" width="68" height="23" fill="#b8a69c" opacity="0.27"/><rect x="810" y="488" width="71" height="23" fill="#a58676" opacity="0.34"/><rect x="886" y="488" width="56" height="23" fill="#b39282" opacity="0.33"/><rect x="947" y="488" width="69" height="23" fill="#8e5f4e" opacity="0.34"/><rect x="1021" y="488" width="65" height="23" fill="#77564a" opacity="0.51"/><rect x="1091" y="488" width="61" height="23" fill="#a58676" opacity="0.56"/><rect x="1157" y="488" width="78" height="23" fill="#bb9a88" opacity="0.41"/><rect x="1240" y="488" width="77" height="23" fill="#9a8278" opacity="0.55"/><rect x="1322" y="488" width="66" height="23" fill="#a58676" opacity="0.57"/><rect x="-36" y="517" width="70" height="23" fill="#69524a" opacity="0.41"/><rect x="39" y="517" width="73" height="23" fill="#a56e5a" opacity="0.35"/><rect x="117" y="517" width="55" height="23" fill="#77564a" opacity="0.56"/><rect x="177" y="517" width="55" height="23" fill="#77564a" opacity="0.35"/><rect x="237" y="517" width="71" height="23" fill="#a56e5a" opacity="0.47"/><rect x="313" y="517" width="56" height="23" fill="#a58676" opacity="0.51"/><rect x="374" y="517" width="63" height="23" fill="#965f4c" opacity="0.40"/><rect x="442" y="517" width="66" height="23" fill="#965f4c" opacity="0.51"/><rect x="513" y="517" width="78" height="23" fill="#8a6e62" opacity="0.30"/><rect x="596" y="517" width="69" height="23" fill="#8a6e62" opacity="0.57"/><rect x="670" y="517" width="69" height="23" fill="#8e5f4e" opacity="0.32"/><rect x="744" y="517" width="70" height="23" fill="#8a6e62" opacity="0.59"/><rect x="819" y="517" width="75" height="23" fill="#b39282" opacity="0.58"/><rect x="899" y="517" width="68" height="23" fill="#8a6e62" opacity="0.58"/><rect x="972" y="517" width="70" height="23" fill="#9a8278" opacity="0.60"/><rect x="1047" y="517" width="62" height="23" fill="#b39282" opacity="0.58"/><rect x="1114" y="517" width="64" height="23" fill="#8a6e62" opacity="0.26"/><rect x="1183" y="517" width="66" height="23" fill="#b39282" opacity="0.53"/><rect x="1254" y="517" width="64" height="23" fill="#a58676" opacity="0.58"/><rect x="1323" y="517" width="71" height="23" fill="#a56e5a" opacity="0.26"/><rect x="-5" y="546" width="71" height="23" fill="#77564a" opacity="0.44"/><rect x="71" y="546" width="60" height="23" fill="#a56e5a" opacity="0.25"/><rect x="136" y="546" width="79" height="23" fill="#965f4c" opacity="0.37"/><rect x="220" y="546" width="66" height="23" fill="#9a8278" opacity="0.26"/><rect x="291" y="546" width="60" height="23" fill="#a58676" opacity="0.25"/><rect x="356" y="546" width="68" height="23" fill="#b39282" opacity="0.54"/><rect x="429" y="546" width="74" height="23" fill="#9a8278" opacity="0.53"/><rect x="508" y="546" width="69" height="23" fill="#8a6e62" opacity="0.34"/><rect x="582" y="546" width="76" height="23" fill="#965f4c" opacity="0.40"/><rect x="663" y="546" width="63" height="23" fill="#b39282" opacity="0.27"/><rect x="731" y="546" width="68" height="23" fill="#a56e5a" opacity="0.47"/><rect x="804" y="546" width="76" height="23" fill="#77564a" opacity="0.57"/><rect x="885" y="546" width="73" height="23" fill="#a58676" opacity="0.58"/><rect x="963" y="546" width="78" height="23" fill="#69524a" opacity="0.43"/><rect x="1046" y="546" width="65" height="23" fill="#9a8278" opacity="0.30"/><rect x="1116" y="546" width="55" height="23" fill="#77564a" opacity="0.27"/><rect x="1176" y="546" width="70" height="23" fill="#b8a69c" opacity="0.27"/><rect x="1251" y="546" width="69" height="23" fill="#965f4c" opacity="0.43"/><rect x="1325" y="546" width="79" height="23" fill="#bb9a88" opacity="0.43"/><rect x="-34" y="575" width="71" height="23" fill="#b8a69c" opacity="0.31"/><rect x="42" y="575" width="60" height="23" fill="#8e5f4e" opacity="0.49"/><rect x="107" y="575" width="72" height="23" fill="#8e5f4e" opacity="0.39"/><rect x="184" y="575" width="66" height="23" fill="#965f4c" opacity="0.41"/><rect x="255" y="575" width="63" height="23" fill="#965f4c" opacity="0.35"/><rect x="323" y="575" width="71" height="23" fill="#77564a" opacity="0.45"/><rect x="399" y="575" width="59" height="23" fill="#9a8278" opacity="0.26"/><rect x="463" y="575" width="70" height="23" fill="#a58676" opacity="0.54"/><rect x="538" y="575" width="73" height="23" fill="#bb9a88" opacity="0.35"/><rect x="616" y="575" width="65" height="23" fill="#bb9a88" opacity="0.46"/><rect x="686" y="575" width="58" height="23" fill="#965f4c" opacity="0.29"/><rect x="749" y="575" width="77" height="23" fill="#8a6e62" opacity="0.29"/><rect x="831" y="575" width="76" height="23" fill="#8e5f4e" opacity="0.38"/><rect x="912" y="575" width="71" height="23" fill="#965f4c" opacity="0.56"/><rect x="988" y="575" width="75" height="23" fill="#965f4c" opacity="0.32"/><rect x="1068" y="575" width="66" height="23" fill="#77564a" opacity="0.48"/><rect x="1139" y="575" width="67" height="23" fill="#b39282" opacity="0.27"/><rect x="1211" y="575" width="61" height="23" fill="#a56e5a" opacity="0.58"/><rect x="1277" y="575" width="65" height="23" fill="#bb9a88" opacity="0.39"/><rect x="6" y="604" width="56" height="23" fill="#77564a" opacity="0.40"/><rect x="67" y="604" width="68" height="23" fill="#8e5f4e" opacity="0.42"/><rect x="140" y="604" width="61" height="23" fill="#8e5f4e" opacity="0.49"/><rect x="206" y="604" width="58" height="23" fill="#b8a69c" opacity="0.54"/><rect x="269" y="604" width="75" height="23" fill="#a56e5a" opacity="0.58"/><rect x="349" y="604" width="77" height="23" fill="#8e5f4e" opacity="0.40"/><rect x="431" y="604" width="70" height="23" fill="#965f4c" opacity="0.34"/><rect x="506" y="604" width="72" height="23" fill="#9a8278" opacity="0.27"/><rect x="583" y="604" width="62" height="23" fill="#965f4c" opacity="0.59"/><rect x="650" y="604" width="59" height="23" fill="#77564a" opacity="0.57"/><rect x="714" y="604" width="60" height="23" fill="#965f4c" opacity="0.49"/><rect x="779" y="604" width="75" height="23" fill="#a56e5a" opacity="0.30"/><rect x="859" y="604" width="56" height="23" fill="#77564a" opacity="0.52"/><rect x="920" y="604" width="60" height="23" fill="#8a6e62" opacity="0.32"/><rect x="985" y="604" width="59" height="23" fill="#77564a" opacity="0.27"/><rect x="1049" y="604" width="59" height="23" fill="#9a8278" opacity="0.32"/><rect x="1113" y="604" width="79" height="23" fill="#8e5f4e" opacity="0.40"/><rect x="1197" y="604" width="60" height="23" fill="#a56e5a" opacity="0.35"/><rect x="1262" y="604" width="59" height="23" fill="#8e5f4e" opacity="0.30"/><rect x="1326" y="604" width="59" height="23" fill="#69524a" opacity="0.37"/><rect x="-42" y="633" width="57" height="23" fill="#a58676" opacity="0.25"/><rect x="20" y="633" width="66" height="23" fill="#77564a" opacity="0.59"/><rect x="91" y="633" width="62" height="23" fill="#8e5f4e" opacity="0.37"/><rect x="158" y="633" width="70" height="23" fill="#8e5f4e" opacity="0.50"/><rect x="233" y="633" width="65" height="23" fill="#965f4c" opacity="0.26"/><rect x="303" y="633" width="66" height="23" fill="#9a8278" opacity="0.51"/><rect x="374" y="633" width="69" height="23" fill="#bb9a88" opacity="0.39"/><rect x="448" y="633" width="72" height="23" fill="#9a8278" opacity="0.36"/><rect x="525" y="633" width="59" height="23" fill="#9a8278" opacity="0.41"/><rect x="589" y="633" width="67" height="23" fill="#a58676" opacity="0.51"/><rect x="661" y="633" width="64" height="23" fill="#77564a" opacity="0.36"/><rect x="730" y="633" width="60" height="23" fill="#b39282" opacity="0.34"/><rect x="795" y="633" width="61" height="23" fill="#77564a" opacity="0.27"/><rect x="861" y="633" width="56" height="23" fill="#69524a" opacity="0.47"/><rect x="922" y="633" width="60" height="23" fill="#8e5f4e" opacity="0.45"/><rect x="987" y="633" width="60" height="23" fill="#8e5f4e" opacity="0.53"/><rect x="1052" y="633" width="73" height="23" fill="#b8a69c" opacity="0.38"/><rect x="1130" y="633" width="77" height="23" fill="#8a6e62" opacity="0.28"/><rect x="1212" y="633" width="72" height="23" fill="#bb9a88" opacity="0.40"/><rect x="1289" y="633" width="59" height="23" fill="#bb9a88" opacity="0.46"/><rect x="5" y="662" width="69" height="23" fill="#9a8278" opacity="0.45"/><rect x="79" y="662" width="75" height="23" fill="#b39282" opacity="0.46"/><rect x="159" y="662" width="77" height="23" fill="#bb9a88" opacity="0.52"/><rect x="241" y="662" width="78" height="23" fill="#b39282" opacity="0.55"/><rect x="324" y="662" width="65" height="23" fill="#8a6e62" opacity="0.59"/><rect x="394" y="662" width="64" height="23" fill="#8a6e62" opacity="0.31"/><rect x="463" y="662" width="74" height="23" fill="#9a8278" opacity="0.33"/><rect x="542" y="662" width="65" height="23" fill="#b8a69c" opacity="0.34"/><rect x="612" y="662" width="68" height="23" fill="#8a6e62" opacity="0.41"/><rect x="685" y="662" width="70" height="23" fill="#b39282" opacity="0.44"/><rect x="760" y="662" width="60" height="23" fill="#bb9a88" opacity="0.43"/><rect x="825" y="662" width="69" height="23" fill="#bb9a88" opacity="0.27"/><rect x="899" y="662" width="68" height="23" fill="#69524a" opacity="0.44"/><rect x="972" y="662" width="74" height="23" fill="#8a6e62" opacity="0.27"/><rect x="1051" y="662" width="67" height="23" fill="#69524a" opacity="0.32"/><rect x="1123" y="662" width="57" height="23" fill="#b39282" opacity="0.43"/><rect x="1185" y="662" width="56" height="23" fill="#9a8278" opacity="0.42"/><rect x="1246" y="662" width="58" height="23" fill="#69524a" opacity="0.51"/><rect x="1309" y="662" width="67" height="23" fill="#9a8278" opacity="0.38"/><rect x="-32" y="691" width="66" height="23" fill="#9a8278" opacity="0.38"/><rect x="39" y="691" width="69" height="23" fill="#b39282" opacity="0.57"/><rect x="113" y="691" width="76" height="23" fill="#8e5f4e" opacity="0.45"/><rect x="194" y="691" width="59" height="23" fill="#b39282" opacity="0.33"/><rect x="258" y="691" width="66" height="23" fill="#8e5f4e" opacity="0.47"/><rect x="329" y="691" width="59" height="23" fill="#8e5f4e" opacity="0.32"/><rect x="393" y="691" width="68" height="23" fill="#8a6e62" opacity="0.32"/><rect x="466" y="691" width="55" height="23" fill="#9a8278" opacity="0.51"/><rect x="526" y="691" width="65" height="23" fill="#9a8278" opacity="0.41"/><rect x="596" y="691" width="66" height="23" fill="#a58676" opacity="0.40"/><rect x="667" y="691" width="76" height="23" fill="#bb9a88" opacity="0.29"/><rect x="748" y="691" width="67" height="23" fill="#a58676" opacity="0.42"/><rect x="820" y="691" width="64" height="23" fill="#8a6e62" opacity="0.44"/><rect x="889" y="691" width="58" height="23" fill="#77564a" opacity="0.46"/><rect x="952" y="691" width="57" height="23" fill="#69524a" opacity="0.26"/><rect x="1014" y="691" width="66" height="23" fill="#69524a" opacity="0.25"/><rect x="1085" y="691" width="60" height="23" fill="#965f4c" opacity="0.35"/><rect x="1150" y="691" width="67" height="23" fill="#a58676" opacity="0.43"/><rect x="1222" y="691" width="68" height="23" fill="#bb9a88" opacity="0.47"/><rect x="1295" y="691" width="76" height="23" fill="#8a6e62" opacity="0.40"/><rect x="12" y="720" width="75" height="23" fill="#8e5f4e" opacity="0.27"/><rect x="92" y="720" width="79" height="23" fill="#b39282" opacity="0.27"/><rect x="176" y="720" width="55" height="23" fill="#b39282" opacity="0.42"/><rect x="236" y="720" width="68" height="23" fill="#b8a69c" opacity="0.56"/><rect x="309" y="720" width="76" height="23" fill="#b39282" opacity="0.48"/><rect x="390" y="720" width="73" height="23" fill="#a58676" opacity="0.56"/><rect x="468" y="720" width="61" height="23" fill="#b8a69c" opacity="0.39"/><rect x="534" y="720" width="57" height="23" fill="#a56e5a" opacity="0.47"/><rect x="596" y="720" width="55" height="23" fill="#9a8278" opacity="0.43"/><rect x="656" y="720" width="73" height="23" fill="#8e5f4e" opacity="0.31"/><rect x="734" y="720" width="70" height="23" fill="#9a8278" opacity="0.39"/><rect x="809" y="720" width="66" height="23" fill="#965f4c" opacity="0.48"/><rect x="880" y="720" width="71" height="23" fill="#a58676" opacity="0.32"/><rect x="956" y="720" width="64" height="23" fill="#b39282" opacity="0.56"/><rect x="1025" y="720" width="59" height="23" fill="#bb9a88" opacity="0.44"/><rect x="1089" y="720" width="74" height="23" fill="#9a8278" opacity="0.37"/><rect x="1168" y="720" width="79" height="23" fill="#bb9a88" opacity="0.55"/><rect x="1252" y="720" width="78" height="23" fill="#9a8278" opacity="0.32"/><rect x="1335" y="720" width="56" height="23" fill="#69524a" opacity="0.55"/><rect x="-43" y="749" width="61" height="23" fill="#965f4c" opacity="0.55"/><rect x="23" y="749" width="61" height="23" fill="#77564a" opacity="0.54"/><rect x="89" y="749" width="69" height="23" fill="#8e5f4e" opacity="0.57"/><rect x="163" y="749" width="71" height="23" fill="#69524a" opacity="0.54"/><rect x="239" y="749" width="65" height="23" fill="#77564a" opacity="0.51"/><rect x="309" y="749" width="65" height="23" fill="#965f4c" opacity="0.34"/><rect x="379" y="749" width="76" height="23" fill="#a56e5a" opacity="0.33"/><rect x="460" y="749" width="66" height="23" fill="#69524a" opacity="0.33"/><rect x="531" y="749" width="64" height="23" fill="#8a6e62" opacity="0.37"/><rect x="600" y="749" width="56" height="23" fill="#b39282" opacity="0.51"/><rect x="661" y="749" width="61" height="23" fill="#a58676" opacity="0.36"/><rect x="727" y="749" width="60" height="23" fill="#bb9a88" opacity="0.31"/><rect x="792" y="749" width="70" height="23" fill="#a58676" opacity="0.33"/><rect x="867" y="749" width="76" height="23" fill="#b39282" opacity="0.46"/><rect x="948" y="749" width="60" height="23" fill="#b8a69c" opacity="0.51"/><rect x="1013" y="749" width="67" height="23" fill="#bb9a88" opacity="0.44"/><rect x="1085" y="749" width="74" height="23" fill="#77564a" opacity="0.47"/><rect x="1164" y="749" width="69" height="23" fill="#b39282" opacity="0.27"/><rect x="1238" y="749" width="72" height="23" fill="#965f4c" opacity="0.42"/><rect x="1315" y="749" width="73" height="23" fill="#77564a" opacity="0.34"/><rect x="2" y="778" width="76" height="23" fill="#965f4c" opacity="0.33"/><rect x="83" y="778" width="71" height="23" fill="#965f4c" opacity="0.37"/><rect x="159" y="778" width="74" height="23" fill="#965f4c" opacity="0.52"/><rect x="238" y="778" width="58" height="23" fill="#69524a" opacity="0.37"/><rect x="301" y="778" width="78" height="23" fill="#77564a" opacity="0.45"/><rect x="384" y="778" width="58" height="23" fill="#b39282" opacity="0.43"/><rect x="447" y="778" width="64" height="23" fill="#965f4c" opacity="0.47"/><rect x="516" y="778" width="59" height="23" fill="#965f4c" opacity="0.38"/><rect x="580" y="778" width="56" height="23" fill="#bb9a88" opacity="0.37"/><rect x="641" y="778" width="75" height="23" fill="#a58676" opacity="0.47"/><rect x="721" y="778" width="77" height="23" fill="#9a8278" opacity="0.46"/><rect x="803" y="778" width="73" height="23" fill="#b8a69c" opacity="0.56"/><rect x="881" y="778" width="72" height="23" fill="#b39282" opacity="0.60"/><rect x="958" y="778" width="78" height="23" fill="#b8a69c" opacity="0.35"/><rect x="1041" y="778" width="55" height="23" fill="#69524a" opacity="0.49"/><rect x="1101" y="778" width="78" height="23" fill="#b39282" opacity="0.40"/><rect x="1184" y="778" width="66" height="23" fill="#bb9a88" opacity="0.31"/><rect x="1255" y="778" width="64" height="23" fill="#a58676" opacity="0.45"/><rect x="1324" y="778" width="67" height="23" fill="#8e5f4e" opacity="0.36"/><rect x="-28" y="807" width="65" height="23" fill="#965f4c" opacity="0.31"/><rect x="42" y="807" width="67" height="23" fill="#965f4c" opacity="0.32"/><rect x="114" y="807" width="68" height="23" fill="#9a8278" opacity="0.45"/><rect x="187" y="807" width="58" height="23" fill="#a56e5a" opacity="0.46"/><rect x="250" y="807" width="77" height="23" fill="#a58676" opacity="0.31"/><rect x="332" y="807" width="76" height="23" fill="#77564a" opacity="0.29"/><rect x="413" y="807" width="72" height="23" fill="#9a8278" opacity="0.29"/><rect x="490" y="807" width="67" height="23" fill="#9a8278" opacity="0.43"/><rect x="562" y="807" width="67" height="23" fill="#8a6e62" opacity="0.27"/><rect x="634" y="807" width="63" height="23" fill="#b8a69c" opacity="0.36"/><rect x="702" y="807" width="63" height="23" fill="#8e5f4e" opacity="0.32"/><rect x="770" y="807" width="58" height="23" fill="#965f4c" opacity="0.38"/><rect x="833" y="807" width="59" height="23" fill="#8a6e62" opacity="0.38"/><rect x="897" y="807" width="76" height="23" fill="#77564a" opacity="0.34"/><rect x="978" y="807" width="79" height="23" fill="#9a8278" opacity="0.58"/><rect x="1062" y="807" width="76" height="23" fill="#a58676" opacity="0.34"/><rect x="1143" y="807" width="63" height="23" fill="#b39282" opacity="0.51"/><rect x="1211" y="807" width="58" height="23" fill="#8e5f4e" opacity="0.55"/><rect x="1274" y="807" width="59" height="23" fill="#8e5f4e" opacity="0.33"/><rect x="1338" y="807" width="69" height="23" fill="#b39282" opacity="0.59"/><rect x="5" y="836" width="79" height="23" fill="#77564a" opacity="0.31"/><rect x="89" y="836" width="76" height="23" fill="#965f4c" opacity="0.34"/><rect x="170" y="836" width="71" height="23" fill="#77564a" opacity="0.38"/><rect x="246" y="836" width="69" height="23" fill="#69524a" opacity="0.43"/><rect x="320" y="836" width="76" height="23" fill="#bb9a88" opacity="0.40"/><rect x="401" y="836" width="68" height="23" fill="#8a6e62" opacity="0.35"/><rect x="474" y="836" width="63" height="23" fill="#bb9a88" opacity="0.57"/><rect x="542" y="836" width="59" height="23" fill="#a56e5a" opacity="0.26"/><rect x="606" y="836" width="68" height="23" fill="#b8a69c" opacity="0.25"/><rect x="679" y="836" width="79" height="23" fill="#77564a" opacity="0.43"/><rect x="763" y="836" width="61" height="23" fill="#b8a69c" opacity="0.38"/><rect x="829" y="836" width="56" height="23" fill="#b8a69c" opacity="0.44"/><rect x="890" y="836" width="78" height="23" fill="#b39282" opacity="0.32"/><rect x="973" y="836" width="60" height="23" fill="#a58676" opacity="0.59"/><rect x="1038" y="836" width="78" height="23" fill="#8e5f4e" opacity="0.42"/><rect x="1121" y="836" width="78" height="23" fill="#8a6e62" opacity="0.30"/><rect x="1204" y="836" width="72" height="23" fill="#b39282" opacity="0.48"/><rect x="1281" y="836" width="74" height="23" fill="#77564a" opacity="0.34"/><rect x="-25" y="865" width="74" height="23" fill="#8e5f4e" opacity="0.56"/><rect x="54" y="865" width="59" height="23" fill="#8e5f4e" opacity="0.25"/><rect x="118" y="865" width="57" height="23" fill="#b8a69c" opacity="0.52"/><rect x="180" y="865" width="67" height="23" fill="#965f4c" opacity="0.44"/><rect x="252" y="865" width="76" height="23" fill="#bb9a88" opacity="0.40"/><rect x="333" y="865" width="60" height="23" fill="#a56e5a" opacity="0.27"/><rect x="398" y="865" width="76" height="23" fill="#69524a" opacity="0.31"/><rect x="479" y="865" width="56" height="23" fill="#b39282" opacity="0.43"/><rect x="540" y="865" width="65" height="23" fill="#b39282" opacity="0.29"/><rect x="610" y="865" width="61" height="23" fill="#69524a" opacity="0.25"/><rect x="676" y="865" width="72" height="23" fill="#965f4c" opacity="0.58"/><rect x="753" y="865" width="78" height="23" fill="#b39282" opacity="0.47"/><rect x="836" y="865" width="69" height="23" fill="#965f4c" opacity="0.33"/><rect x="910" y="865" width="55" height="23" fill="#b39282" opacity="0.33"/><rect x="970" y="865" width="60" height="23" fill="#69524a" opacity="0.39"/><rect x="1035" y="865" width="67" height="23" fill="#b39282" opacity="0.59"/><rect x="1107" y="865" width="58" height="23" fill="#9a8278" opacity="0.48"/><rect x="1170" y="865" width="62" height="23" fill="#8a6e62" opacity="0.28"/><rect x="1237" y="865" width="67" height="23" fill="#a56e5a" opacity="0.46"/><rect x="1309" y="865" width="62" height="23" fill="#a58676" opacity="0.41"/><rect x="-1" y="894" width="63" height="23" fill="#b8a69c" opacity="0.52"/><rect x="67" y="894" width="74" height="23" fill="#69524a" opacity="0.48"/><rect x="146" y="894" width="78" height="23" fill="#a58676" opacity="0.43"/><rect x="229" y="894" width="68" height="23" fill="#b8a69c" opacity="0.36"/><rect x="302" y="894" width="57" height="23" fill="#77564a" opacity="0.53"/><rect x="364" y="894" width="71" height="23" fill="#9a8278" opacity="0.28"/><rect x="440" y="894" width="73" height="23" fill="#bb9a88" opacity="0.30"/><rect x="518" y="894" width="71" height="23" fill="#77564a" opacity="0.36"/><rect x="594" y="894" width="71" height="23" fill="#77564a" opacity="0.33"/><rect x="670" y="894" width="71" height="23" fill="#8a6e62" opacity="0.29"/><rect x="746" y="894" width="70" height="23" fill="#8e5f4e" opacity="0.42"/><rect x="821" y="894" width="62" height="23" fill="#69524a" opacity="0.26"/><rect x="888" y="894" width="55" height="23" fill="#965f4c" opacity="0.47"/><rect x="948" y="894" width="56" height="23" fill="#9a8278" opacity="0.55"/><rect x="1009" y="894" width="55" height="23" fill="#a56e5a" opacity="0.37"/><rect x="1069" y="894" width="64" height="23" fill="#8a6e62" opacity="0.54"/><rect x="1138" y="894" width="70" height="23" fill="#8a6e62" opacity="0.52"/><rect x="1213" y="894" width="59" height="23" fill="#8a6e62" opacity="0.47"/><rect x="1277" y="894" width="57" height="23" fill="#69524a" opacity="0.59"/><rect x="1339" y="894" width="56" height="23" fill="#8e5f4e" opacity="0.59"/></g><rect x="15" y="480" width="330" height="428" fill="#5a3d33" opacity=".28"/><rect x="15" y="700" width="1325" height="208" fill="#5a4038" opacity=".18"/><ellipse cx="430" cy="250" rx="120" ry="240" fill="#c99a80" opacity=".35" filter="url(#p1g)"/><ellipse cx="1110" cy="280" rx="90" ry="220" fill="#c99a80" opacity=".3" filter="url(#p1g)"/><g stroke="#33292a" stroke-linecap="round" fill="none"><path d="M58 480V908" stroke-width="16"/><path d="M58 610L175 485M58 790L20 840M62 800L290 910M62 830L200 908" stroke-width="11"/></g><rect x="5" y="42" width="385" height="445" fill="#3b3433"/><rect x="5" y="55" width="368" height="418" fill="#323235"/><circle cx="57" cy="118" r="45" fill="url(#p1b)"/><circle cx="185" cy="118" r="45" fill="url(#p1b)"/><circle cx="308" cy="118" r="45" fill="url(#p1b)"/><circle cx="57" cy="218" r="45" fill="url(#p1b)"/><circle cx="185" cy="218" r="45" fill="url(#p1b)"/><circle cx="308" cy="218" r="45" fill="url(#p1b)"/><circle cx="57" cy="315" r="45" fill="url(#p1b)"/><circle cx="185" cy="315" r="45" fill="url(#p1b)"/><circle cx="308" cy="315" r="45" fill="url(#p1b)"/><circle cx="57" cy="412" r="45" fill="url(#p1b)"/><circle cx="185" cy="412" r="45" fill="url(#p1b)"/><circle cx="308" cy="412" r="45" fill="url(#p1b)"/><rect x="1145" y="88" width="215" height="412" fill="#3b3433"/><rect x="1162" y="105" width="200" height="378" fill="#323235"/><circle cx="1228" cy="160" r="42" fill="url(#p1b)"/><circle cx="1338" cy="160" r="42" fill="url(#p1b)"/><circle cx="1228" cy="248" r="42" fill="url(#p1b)"/><circle cx="1338" cy="248" r="42" fill="url(#p1b)"/><circle cx="1228" cy="335" r="42" fill="url(#p1b)"/><circle cx="1338" cy="335" r="42" fill="url(#p1b)"/><circle cx="1228" cy="422" r="42" fill="url(#p1b)"/><circle cx="1338" cy="422" r="42" fill="url(#p1b)"/><g filter="url(#p1f)"><g><path d="M650 235C660 185 730 170 780 195C835 225 835 330 838 420C800 425 770 400 760 395L690 400C650 395 640 380 640 370C665 330 640 280 650 235Z" fill="#6a4536"/><path d="M690 370L770 360L775 425L685 425Z" fill="#d9a083"/><ellipse cx="703" cy="285" rx="62" ry="82" fill="#e3ae90"/><path d="M650 250C670 200 740 185 790 215C800 260 790 300 770 330C765 280 740 230 700 215C680 215 660 235 650 250Z" fill="#6a4536"/><path d="M660 318Q690 335 712 315" stroke="#fff" stroke-width="7" fill="none"/><ellipse cx="668" cy="262" rx="9" ry="6" fill="#3a241c"/><ellipse cx="714" cy="266" rx="10" ry="6" fill="#3a241c"/><path d="M654 246Q668 238 682 246M700 248Q716 242 732 254" stroke="#4a3026" stroke-width="5" fill="none"/><path d="M560 500L600 530L545 690L505 675Z" fill="#e3ae90"/><path d="M545 690L505 690L330 560L250 520L240 498L300 505L335 490L345 520L385 540L540 640Z" fill="#e3ae90"/><path d="M840 520L885 520L890 640L1040 545L1095 525L1080 560L1000 600L880 700L845 690Z" fill="#e3ae90"/><path d="M585 415C620 400 650 410 690 405Q730 430 775 405C810 410 850 425 865 445L890 520L835 545L850 620C860 700 870 790 865 850L600 862C595 780 610 700 600 630L590 540L535 495Z" fill="#f4dcd8"/><path d="M835 545L850 620C860 700 870 790 865 850L820 853C830 760 815 640 800 560Z" fill="#e6c4c0" opacity=".6"/><path d="M598 858L866 835L872 908L600 908Z" fill="#2c5d98"/><path d="M890 515L1035 430L1110 475L975 585Z" fill="#e9e6dc"/><path d="M975 585L1110 475L1185 438L1183 462L985 598L890 560L890 515Z" fill="#d7a58c"/><path d="M975 582L1108 478L1180 445L982 588Z" fill="#f3efe6"/><path d="M965 590L1060 550L1095 528L1085 565L1010 600Z" fill="#e3ae90"/></g></g></svg></div><span class="t cap" style="left:50%;top:369.9px;transform:translate(-50%,-50%)">1000 × 667</span></div></div><div class="node" style="left:29.2px;top:491.5px;width:247.10000000000002px;height:392.5px;background:#1b1b1d"><div class="abs" style="left:-1px;top:-1px;width:247.10000000000002px;height:392.5px"><div class="bd" style="top:28px;height:363.5px;background:#27282b"></div><svg width="9" height="5.4" viewBox="0 0 10 6" style="left:11.7px;top:11.600000000000001px"><path d="M1 1l4 4 4-4" fill="none" stroke="#85868f" stroke-width="1.2" stroke-linecap="round" stroke-linejoin="round"/></svg><span class="t ttl" style="left:33px;top:14.5px;color:#a3a4ab">Load Image</span><div class="dot" style="left:247.10000000000002px;top:40.89999999999998px;background:#8aaad0"></div><span class="t slo" style="right:10px;top:40.89999999999998px;">IMAGE</span><div class="dot" style="left:247.10000000000002px;top:59.299999999999955px;background:#a9c98a"></div><span class="t slo" style="right:10px;top:59.299999999999955px;">MASK</span><span class="t lbl" style="left:10px;top:84.5px;">image</span><div class="w" style="left:73.3px;top:72.5px;width:164.0px;height:24px;"></div><span class="t valb" style="left:80.8px;top:84.5px;font-size:9.8px">mtvision_ref_17690...</span><svg width="9" height="5.4" viewBox="0 0 10 6" style="left:190.3px;top:82.3px"><path d="M1 1l4 4 4-4" fill="none" stroke="#5b5d63" stroke-width="1.2" stroke-linecap="round" stroke-linejoin="round"/></svg><div class="abs" style="left:212.8px;top:72.5px;width:1px;height:24px;background:#27282b"></div><svg width="14" height="14" viewBox="0 0 24 24" style="left:218.3px;top:77.5px"><g fill="none" stroke="#e6e6e8" stroke-width="2" stroke-linecap="round" stroke-linejoin="round"><path d="M10.7 20H4a2 2 0 0 1-2-2V5a2 2 0 0 1 2-2h3.9a2 2 0 0 1 1.69.9l.81 1.2a2 2 0 0 0 1.67.9H20a2 2 0 0 1 2 2v4.1"/><circle cx="17" cy="17" r="3"/><path d="m21 21-1.9-1.9"/></g></svg><div class="abs" style="left:7.099999999999998px;top:117.70000000000005px;width:234px;height:234px;overflow:hidden"><svg width="234.5" height="234" viewBox="10 12 910 908" preserveAspectRatio="none" style="position:absolute;left:0;top:0"><defs>
<radialGradient id="p2bg" cx="55%" cy="40%" r="80%"><stop offset="0" stop-color="#ececee"/><stop offset=".6" stop-color="#e6e6e8"/><stop offset="1" stop-color="#d9d9dc"/></radialGradient>
<linearGradient id="p2fl" x1="0" y1="0" x2="0" y2="1"><stop offset="0" stop-color="#e4e4e6"/><stop offset=".25" stop-color="#efeff0"/><stop offset="1" stop-color="#f1f1f2"/></linearGradient>
<linearGradient id="p2pt" x1="0" y1="0" x2="1" y2="0"><stop offset="0" stop-color="#cdb28c"/><stop offset=".5" stop-color="#c4a77f"/><stop offset="1" stop-color="#b99c76"/></linearGradient>
<filter id="p2f" x="-5%" y="-5%" width="110%" height="110%"><feGaussianBlur stdDeviation="2"/></filter>
<filter id="p2s" x="-30%" y="-30%" width="160%" height="160%"><feGaussianBlur stdDeviation="9"/></filter>
</defs><rect x="10" y="12" width="910" height="908" fill="url(#p2bg)"/><rect x="10" y="790" width="910" height="130" fill="url(#p2fl)"/><ellipse cx="500" cy="880" rx="120" ry="14" fill="#bdbdc0" opacity=".7" filter="url(#p2s)"/><g filter="url(#p2f)"><path d="M418 195C405 120 410 45 465 38C520 45 522 120 512 185L500 190L430 195Z" fill="#1b1516"/><path d="M445 150H487L490 200L440 200Z" fill="#d8ad93"/><ellipse cx="465" cy="112" rx="32" ry="46" fill="#e2bba2"/><path d="M428 110C430 60 450 50 466 50C485 50 502 62 503 110C495 85 485 70 466 66C448 70 436 85 428 110Z" fill="#1b1516"/><path d="M444 108h14M473 108h14" stroke="#3a2a26" stroke-width="4"/><path d="M455 140h20" stroke="#b56a60" stroke-width="4"/><path d="M365 300L398 315L392 440L388 510C385 540 365 545 360 520L358 430Z" fill="#e2bba2"/><path d="M545 295L580 290L578 420L572 495C570 525 548 525 548 500L550 420Z" fill="#e2bba2"/><path d="M405 355L545 352L560 430L565 520L560 830L505 832L480 560L470 832L405 830L392 640L385 520Z" fill="url(#p2pt)"/><path d="M470 375L476 560" stroke="#a98c66" stroke-width="3" fill="none"/><path d="M405 368H545" stroke="#b2956e" stroke-width="4"/><path d="M425 185Q465 215 505 180C540 188 565 198 575 215L590 290L548 305L545 360L402 362L400 318L352 300L372 235C380 205 400 195 425 185Z" fill="#fdfdfd"/><path d="M400 318L402 362L545 360L548 305" fill="none" stroke="#e3e3e6" stroke-width="3"/><path d="M432 828H478L482 870C480 892 430 895 424 875Z" fill="#f4f4f2"/><path d="M424 875C430 895 480 892 482 872" stroke="#c9c9c6" stroke-width="4" fill="none"/><path d="M503 830H548L585 862C590 880 560 888 530 880L500 865Z" fill="#f4f4f2"/><path d="M500 865L530 880C560 888 590 880 586 864" stroke="#c9c9c6" stroke-width="4" fill="none"/></g></svg></div><span class="t cap" style="left:50%;top:376.0px;transform:translate(-50%,-50%)">768 × 768</span></div></div><div class="node" style="left:370.3px;top:64.8px;width:280.7px;height:137.7px;background:#1b1b1d"><div class="abs" style="left:-1px;top:-1px;width:280.7px;height:137.7px"><div class="bd" style="top:28px;height:85.00000000000001px;background:#27282b"></div><svg width="9" height="5.4" viewBox="0 0 10 6" style="left:11.7px;top:11.600000000000001px"><path d="M1 1l4 4 4-4" fill="none" stroke="#85868f" stroke-width="1.2" stroke-linecap="round" stroke-linejoin="round"/></svg><span class="t ttl" style="left:33px;top:14.5px;color:#a3a4ab">Load Diffusion Model</span><span class="t foot" style="left:50%;top:125.35px;transform:translate(-50%,-50%);margin-left:-9px;margin-top:1.8px">Show advanced inputs</span><svg width="11" height="10" viewBox="0 0 11 10" style="left:188.35px;top:126.55px;margin-top:-5px"><g fill="none" stroke="#fff" stroke-width="1.1" stroke-linecap="round"><path d="M4.6 2.5H10M.8 2.5h.5M.8 7.5h5.6M9.8 7.5H10"/><circle cx="3" cy="2.5" r="1.6"/><circle cx="8.1" cy="7.5" r="1.6"/></g></svg><div class="dot" style="left:280.7px;top:40.2px;background:#a78fc9"></div><span class="t slo" style="right:10px;top:40.2px;">MODEL</span><span class="t lbl" style="left:10px;top:64.50000000000001px;">unet_name</span><div class="w" style="left:73.0px;top:53.0px;width:198.40000000000003px;height:23.000000000000014px;"></div><span class="t val" style="left:81.0px;top:64.50000000000001px;font-size:12.15px">flux-2-klein-9b-kv-fp8.safet...</span><svg width="9" height="5.4" viewBox="0 0 10 6" style="left:254.90000000000003px;top:62.30000000000001px"><path d="M1 1l4 4 4-4" fill="none" stroke="#5b5d63" stroke-width="1.2" stroke-linecap="round" stroke-linejoin="round"/></svg></div></div><div class="node" style="left:370.3px;top:207.8px;width:280.7px;height:160.2px;background:#1b1b1d"><div class="abs" style="left:-1px;top:-1px;width:280.7px;height:160.2px"><div class="bd" style="top:28px;height:107.89999999999998px;background:#27282b"></div><svg width="9" height="5.4" viewBox="0 0 10 6" style="left:11.7px;top:11.600000000000001px"><path d="M1 1l4 4 4-4" fill="none" stroke="#85868f" stroke-width="1.2" stroke-linecap="round" stroke-linejoin="round"/></svg><span class="t ttl" style="left:33px;top:14.5px;color:#a3a4ab">Load CLIP</span><span class="t foot" style="left:50%;top:148.04999999999998px;transform:translate(-50%,-50%);margin-left:-9px;margin-top:1.8px">Show advanced inputs</span><svg width="11" height="10" viewBox="0 0 11 10" style="left:188.35px;top:149.24999999999997px;margin-top:-5px"><g fill="none" stroke="#fff" stroke-width="1.1" stroke-linecap="round"><path d="M4.6 2.5H10M.8 2.5h.5M.8 7.5h5.6M9.8 7.5H10"/><circle cx="3" cy="2.5" r="1.6"/><circle cx="8.1" cy="7.5" r="1.6"/></g></svg><div class="dot" style="left:280.7px;top:40.39999999999998px;background:#f2cf82"></div><span class="t slo" style="right:10px;top:40.39999999999998px;">CLIP</span><span class="t lbl" style="left:10px;top:64.80000000000001px;">clip_name</span><div class="w" style="left:73.0px;top:53.5px;width:198.40000000000003px;height:22.69999999999999px;"></div><span class="t val" style="left:81.0px;top:64.84999999999997px;font-size:11.3px">qwen_3_8b_fp8mixed.safete...</span><svg width="9" height="5.4" viewBox="0 0 10 6" style="left:254.90000000000003px;top:62.64999999999996px"><path d="M1 1l4 4 4-4" fill="none" stroke="#5b5d63" stroke-width="1.2" stroke-linecap="round" stroke-linejoin="round"/></svg><span class="t lbl" style="left:10px;top:91.80000000000001px;">type</span><div class="w" style="left:73.0px;top:80.80000000000001px;width:198.40000000000003px;height:22.0px;"></div><span class="t val" style="left:81.0px;top:91.80000000000001px;">flux2</span><svg width="9" height="5.4" viewBox="0 0 10 6" style="left:254.90000000000003px;top:89.60000000000001px"><path d="M1 1l4 4 4-4" fill="none" stroke="#5b5d63" stroke-width="1.2" stroke-linecap="round" stroke-linejoin="round"/></svg></div></div><div class="node" style="left:370.3px;top:373.6px;width:280.7px;height:90.79999999999995px;background:#1b1b1d"><div class="abs" style="left:-1px;top:-1px;width:280.7px;height:90.79999999999995px"><div class="bd" style="top:28px;height:61.799999999999955px;background:#27282b"></div><svg width="9" height="5.4" viewBox="0 0 10 6" style="left:11.7px;top:11.600000000000001px"><path d="M1 1l4 4 4-4" fill="none" stroke="#85868f" stroke-width="1.2" stroke-linecap="round" stroke-linejoin="round"/></svg><span class="t ttl" style="left:33px;top:14.5px;color:#a3a4ab">Load VAE</span><div class="dot" style="left:280.7px;top:40.099999999999966px;background:#dd6873"></div><span class="t slo" style="right:10px;top:40.099999999999966px;">VAE</span><span class="t lbl" style="left:10px;top:64.39999999999998px;">vae_name</span><div class="w" style="left:73.0px;top:52.89999999999998px;width:198.40000000000003px;height:23.0px;"></div><span class="t val" style="left:81.0px;top:64.39999999999998px;">flux2-vae.safetensors</span><svg width="9" height="5.4" viewBox="0 0 10 6" style="left:254.90000000000003px;top:62.199999999999974px"><path d="M1 1l4 4 4-4" fill="none" stroke="#5b5d63" stroke-width="1.2" stroke-linecap="round" stroke-linejoin="round"/></svg></div></div><div class="node" style="left:409px;top:569.7px;width:208.39999999999998px;height:156.29999999999995px;background:#1b1b1d"><div class="abs" style="left:-1px;top:-1px;width:208.39999999999998px;height:156.29999999999995px"><div class="bd" style="top:28px;height:103.39999999999998px;background:#27282b"></div><svg width="9" height="5.4" viewBox="0 0 10 6" style="left:11.7px;top:11.600000000000001px"><path d="M1 1l4 4 4-4" fill="none" stroke="#85868f" stroke-width="1.2" stroke-linecap="round" stroke-linejoin="round"/></svg><span class="t ttl" style="left:33px;top:14.5px;color:#a3a4ab">ImageScaleToTotalPixels</span><span class="t foot" style="left:50%;top:143.84999999999997px;transform:translate(-50%,-50%);margin-left:-9px;margin-top:1.8px">Show advanced inputs</span><svg width="11" height="10" viewBox="0 0 11 10" style="left:152.2px;top:145.04999999999995px;margin-top:-5px"><g fill="none" stroke="#fff" stroke-width="1.1" stroke-linecap="round"><path d="M4.6 2.5H10M.8 2.5h.5M.8 7.5h5.6M9.8 7.5H10"/><circle cx="3" cy="2.5" r="1.6"/><circle cx="8.1" cy="7.5" r="1.6"/></g></svg><div class="dot" style="left:0;top:40.39999999999998px;background:#8aaad0"></div><span class="t lbl" style="left:10px;top:40.39999999999998px;">image</span><div class="dot" style="left:208.39999999999998px;top:40.39999999999998px;background:#8aaad0"></div><span class="t slo" style="right:10px;top:40.39999999999998px;">IMAGE</span><span class="t lbl" style="left:10px;top:64.89999999999998px;">upscale_method</span><div class="w" style="left:97.69999999999999px;top:53.299999999999955px;width:101.19999999999999px;height:23.200000000000045px;"></div><span class="t valb" style="left:105.69999999999999px;top:64.89999999999998px;font-size:10.6px">lanczos</span><svg width="9" height="5.4" viewBox="0 0 10 6" style="left:182.39999999999998px;top:62.699999999999974px"><path d="M1 1l4 4 4-4" fill="none" stroke="#5b5d63" stroke-width="1.2" stroke-linecap="round" stroke-linejoin="round"/></svg><span class="t lbl" style="left:10px;top:90.89999999999998px;">megapixels</span><div class="w" style="left:97.69999999999999px;top:79.89999999999998px;width:101.19999999999999px;height:21.899999999999977px;"></div><svg width="101.19999999999999" height="21.899999999999977" style="left:97.69999999999999px;top:79.89999999999998px"><path d="M6 10.949999999999989h12.5" stroke="#9fa1a7" stroke-width="1.2"/><path d="M83.19999999999999 10.949999999999989h11M88.69999999999999 5.449999999999989v11" stroke="#b4b6bb" stroke-width="1.2"/></svg><span class="t valb" style="left:125.69999999999999px;top:90.84999999999991px;font-size:10.6px;margin-top:0">1.00</span></div></div><div class="node" style="left:416.6px;top:747.6px;width:208.39999999999998px;height:157.30000000000007px;background:#1b1b1d"><div class="abs" style="left:-1px;top:-1px;width:208.39999999999998px;height:157.30000000000007px"><div class="bd" style="top:28px;height:104.40000000000009px;background:#27282b"></div><svg width="9" height="5.4" viewBox="0 0 10 6" style="left:11.7px;top:11.600000000000001px"><path d="M1 1l4 4 4-4" fill="none" stroke="#85868f" stroke-width="1.2" stroke-linecap="round" stroke-linejoin="round"/></svg><span class="t ttl" style="left:33px;top:14.5px;color:#a3a4ab">ImageScaleToTotalPixels</span><span class="t foot" style="left:50%;top:144.85000000000008px;transform:translate(-50%,-50%);margin-left:-9px;margin-top:1.8px">Show advanced inputs</span><svg width="11" height="10" viewBox="0 0 11 10" style="left:152.2px;top:146.05000000000007px;margin-top:-5px"><g fill="none" stroke="#fff" stroke-width="1.1" stroke-linecap="round"><path d="M4.6 2.5H10M.8 2.5h.5M.8 7.5h5.6M9.8 7.5H10"/><circle cx="3" cy="2.5" r="1.6"/><circle cx="8.1" cy="7.5" r="1.6"/></g></svg><div class="dot" style="left:0;top:40.39999999999998px;background:#8aaad0"></div><span class="t lbl" style="left:10px;top:40.39999999999998px;">image</span><div class="dot" style="left:208.39999999999998px;top:40.39999999999998px;background:#8aaad0"></div><span class="t slo" style="right:10px;top:40.39999999999998px;">IMAGE</span><span class="t lbl" style="left:10px;top:64.89999999999998px;">upscale_method</span><div class="w" style="left:97.70000000000005px;top:53.299999999999955px;width:101.19999999999993px;height:23.200000000000045px;"></div><span class="t valb" style="left:105.70000000000005px;top:64.89999999999998px;font-size:10.6px">lanczos</span><svg width="9" height="5.4" viewBox="0 0 10 6" style="left:182.39999999999998px;top:62.699999999999974px"><path d="M1 1l4 4 4-4" fill="none" stroke="#5b5d63" stroke-width="1.2" stroke-linecap="round" stroke-linejoin="round"/></svg><span class="t lbl" style="left:10px;top:90.89999999999998px;">megapixels</span><div class="w" style="left:97.70000000000005px;top:79.89999999999998px;width:101.19999999999993px;height:21.899999999999977px;"></div><svg width="101.19999999999993" height="21.899999999999977" style="left:97.70000000000005px;top:79.89999999999998px"><path d="M6 10.949999999999989h12.5" stroke="#9fa1a7" stroke-width="1.2"/><path d="M83.19999999999993 10.949999999999989h11M88.69999999999993 5.449999999999989v11" stroke="#b4b6bb" stroke-width="1.2"/></svg><span class="t valb" style="left:125.70000000000005px;top:90.85000000000002px;font-size:10.6px;margin-top:0">1.00</span></div></div><div class="node" style="left:900px;top:402px;width:151px;height:67.69999999999999px;background:#1b1b1d"><div class="abs" style="left:-1px;top:-1px;width:151px;height:67.69999999999999px"><div class="bd" style="top:28px;height:38.69999999999999px;background:#27282b"></div><svg width="9" height="5.4" viewBox="0 0 10 6" style="left:11.7px;top:11.600000000000001px"><path d="M1 1l4 4 4-4" fill="none" stroke="#85868f" stroke-width="1.2" stroke-linecap="round" stroke-linejoin="round"/></svg><span class="t ttl" style="left:33px;top:14.5px;color:#a3a4ab"></span><div class="dot" style="left:151px;top:39.69999999999999px;background:#e59a7a"></div></div></div><div class="node" style="left:796.4px;top:700px;width:185.20000000000005px;height:187.39999999999998px;background:#1b1b1d"><div class="abs" style="left:-1px;top:-1px;width:185.20000000000005px;height:187.39999999999998px"><div class="bd" style="top:28px;height:133.89999999999998px;background:#27282b"></div><svg width="9" height="5.4" viewBox="0 0 10 6" style="left:11.7px;top:11.600000000000001px"><path d="M1 1l4 4 4-4" fill="none" stroke="#85868f" stroke-width="1.2" stroke-linecap="round" stroke-linejoin="round"/></svg><span class="t ttl" style="left:33px;top:14.5px;color:#a3a4ab"></span><span class="t foot" style="left:50%;top:174.64999999999998px;transform:translate(-50%,-50%);margin-left:-9px;margin-top:1.8px">Enter Subgraph</span><svg width="13" height="13" viewBox="0 0 24 24" style="left:125.60000000000002px;top:175.84999999999997px;margin-top:-6.5px"><g fill="none" stroke="#fff" stroke-width="2" stroke-linecap="round" stroke-linejoin="round"><rect x="3" y="3" width="6" height="6" rx="2"/><rect x="15" y="3" width="6" height="6" rx="2"/><rect x="15" y="15" width="6" height="6" rx="2"/><path d="M6 9v3a6 6 0 0 0 6 6h3M12 6h3"/></g></svg><div class="dot" style="left:0;top:125.5px;background:#8aaad0"></div><span class="t lbl" style="left:10px;top:125.5px;">pixels</span><div class="dot" style="left:0;top:144.29999999999995px;background:#dd6873"></div><span class="t lbl" style="left:10px;top:144.29999999999995px;">vae</span></div></div><div class="node" style="left:683px;top:107.6px;width:341px;height:312.4px;background:#263a28;border-color:#3a633d"><div class="abs" style="left:-1px;top:-1px;width:341px;height:312.4px"><div class="bd" style="top:28px;height:283.4px;background:#355f38"></div><svg width="9" height="5.4" viewBox="0 0 10 6" style="left:11.7px;top:11.600000000000001px"><path d="M1 1l4 4 4-4" fill="none" stroke="#85868f" stroke-width="1.2" stroke-linecap="round" stroke-linejoin="round"/></svg><span class="t ttl" style="left:33px;top:14.5px;color:#9fb0a0">CLIP Text Encode (Positive Prompt)</span><div class="dot" style="left:0;top:40.599999999999994px;background:#f2cf82"></div><span class="t lbl" style="left:10px;top:40.599999999999994px;color:#b9c4c9">clip</span><div class="dot" style="left:341px;top:40.599999999999994px;background:#e59a7a"></div><span class="t slo" style="right:10px;top:40.599999999999994px;">CONDITIONING</span><div class="w" style="left:10.5px;top:52.900000000000006px;width:320.5px;height:259.5px;background:#323437;border-radius:8px 8px 0 0"></div><span class="t abs" style="left:20px;top:64.70000000000002px;font-size:7.5px;color:#8a8c92">text</span><span class="t" style="left:19.5px;top:75.80000000000001px;font-family:'Liberation Mono',monospace;font-weight:700;font-size:9.4px;letter-spacing:-.53px;color:#fff">Have the girl in Figure 1 put on the clothes from Figure 2,</span><span class="t" style="left:19.5px;top:88.03px;font-family:'Liberation Mono',monospace;font-weight:700;font-size:9.4px;letter-spacing:-.53px;color:#fff">Then, change the background environment to an African</span><span class="t" style="left:19.5px;top:100.26000000000002px;font-family:'Liberation Mono',monospace;font-weight:700;font-size:9.4px;letter-spacing:-.53px;color:#fff">savannah while keeping the girl in the same posture to give</span><span class="t" style="left:19.5px;top:112.49000000000001px;font-family:'Liberation Mono',monospace;font-weight:700;font-size:9.4px;letter-spacing:-.53px;color:#fff">a natural outdoor feel.</span></div></div><div class="node" style="left:662.5px;top:356.4px;width:370.5px;height:454.9px;background:#1b1b1d"><div class="abs" style="left:-1px;top:-1px;width:370.5px;height:454.9px"><div class="bd" style="top:28px;height:425.9px;background:#27282b"></div><svg width="9" height="5.4" viewBox="0 0 10 6" style="left:11.7px;top:11.600000000000001px"><path d="M1 1l4 4 4-4" fill="none" stroke="#85868f" stroke-width="1.2" stroke-linecap="round" stroke-linejoin="round"/></svg><span class="t ttl" style="left:33px;top:14.5px;color:#a3a4ab">Save Image</span><div class="dot" style="left:0;top:40.30000000000001px;background:#8aaad0"></div><span class="t lbl" style="left:10px;top:40.30000000000001px;">images</span><span class="t lbl" style="left:10px;top:64.80000000000001px;">filename_prefix</span><div class="w" style="left:92.20000000000005px;top:52.30000000000001px;width:269.29999999999995px;height:24.900000000000034px;"></div><span class="t valb" style="left:103.5px;top:64.80000000000001px;font-size:9.6px;letter-spacing:-.38px;margin-top:0">Flux2_Klein_9b_kv</span><div class="abs" style="left:6.5px;top:137.3px;width:358px;height:239px;overflow:hidden"><svg width="358" height="239" viewBox="12 15 1356 905" preserveAspectRatio="none" style="position:absolute;left:0;top:0"><defs>
<linearGradient id="p3sky" x1="0" y1="0" x2="0" y2="1"><stop offset="0" stop-color="#d8e2ec"/><stop offset=".5" stop-color="#e8ebee"/><stop offset="1" stop-color="#f6ebde"/></linearGradient>
<linearGradient id="p3sk2" x1="0" y1="0" x2="1" y2="0"><stop offset="0" stop-color="#cfdbe6" stop-opacity=".7"/><stop offset=".5" stop-color="#e8e8e8" stop-opacity="0"/><stop offset="1" stop-color="#f4ece4" stop-opacity=".6"/></linearGradient>
<linearGradient id="p3gr" x1="0" y1="0" x2="0" y2="1"><stop offset="0" stop-color="#f0d69c"/><stop offset=".15" stop-color="#e9c985"/><stop offset=".4" stop-color="#dfb970"/><stop offset=".7" stop-color="#d0a75e"/><stop offset="1" stop-color="#b98f4a"/></linearGradient>
<filter id="p3f" x="-5%" y="-5%" width="110%" height="110%"><feGaussianBlur stdDeviation="2.4"/></filter>
<filter id="p3b" x="-20%" y="-20%" width="140%" height="140%"><feGaussianBlur stdDeviation="7"/></filter>
<filter id="p3c" x="-20%" y="-20%" width="140%" height="140%"><feGaussianBlur stdDeviation="4"/></filter>
</defs><rect x="12" y="15" width="1356" height="420" fill="url(#p3sky)"/><rect x="12" y="15" width="1356" height="420" fill="url(#p3sk2)"/><path d="M12 392C60 385 120 378 180 383C260 392 330 400 400 392C430 385 460 392 520 398C650 405 800 405 900 402C1000 398 1100 400 1180 396C1250 392 1320 392 1368 396V440H12Z" fill="#d3b9a6" opacity=".8" filter="url(#p3c)"/><rect x="12" y="418" width="1356" height="502" fill="url(#p3gr)"/><g filter="url(#p3b)"><ellipse cx="520" cy="860" rx="90" ry="40" fill="#a96a3e" opacity="0.8"/><ellipse cx="900" cy="830" rx="70" ry="50" fill="#a9673a" opacity="0.8"/><ellipse cx="1100" cy="860" rx="120" ry="35" fill="#a8683c" opacity="0.7"/><ellipse cx="200" cy="880" rx="120" ry="30" fill="#9e6e3e" opacity="0.5"/><ellipse cx="1290" cy="880" rx="80" ry="30" fill="#a8683c" opacity="0.6"/><ellipse cx="150" cy="600" rx="140" ry="40" fill="#b98f48" opacity="0.6"/><ellipse cx="420" cy="640" rx="120" ry="40" fill="#b48a44" opacity="0.5"/><ellipse cx="1050" cy="640" rx="140" ry="40" fill="#b48a44" opacity="0.5"/><ellipse cx="1250" cy="560" rx="120" ry="35" fill="#c09a50" opacity="0.5"/><ellipse cx="300" cy="520" rx="200" ry="30" fill="#e8c880" opacity="0.6"/><ellipse cx="1150" cy="500" rx="220" ry="25" fill="#ebcd88" opacity="0.6"/><ellipse cx="100" cy="780" rx="110" ry="60" fill="#caa45a" opacity="0.7"/><ellipse cx="350" cy="800" rx="110" ry="60" fill="#cfae66" opacity="0.7"/><ellipse cx="1000" cy="760" rx="100" ry="60" fill="#d0ae64" opacity="0.7"/><ellipse cx="1260" cy="740" rx="110" ry="60" fill="#d2b068" opacity="0.7"/><ellipse cx="680" cy="880" rx="60" ry="40" fill="#9a6a40" opacity="0.5"/><ellipse cx="120" cy="900" rx="90" ry="25" fill="#7a5a30" opacity="0.5"/><ellipse cx="420" cy="905" rx="80" ry="22" fill="#7d5a30" opacity="0.5"/><ellipse cx="1000" cy="900" rx="90" ry="24" fill="#80592f" opacity="0.5"/><ellipse cx="1300" cy="905" rx="70" ry="22" fill="#7d5a30" opacity="0.5"/><ellipse cx="260" cy="700" rx="70" ry="25" fill="#9a7838" opacity="0.45"/><ellipse cx="1180" cy="690" rx="80" ry="25" fill="#9a7838" opacity="0.45"/><ellipse cx="60" cy="680" rx="60" ry="25" fill="#a07c3a" opacity="0.4"/><ellipse cx="330" cy="700" rx="90" ry="22" fill="#6e5630" opacity="0.45"/><ellipse cx="200" cy="640" rx="80" ry="18" fill="#7a6034" opacity="0.4"/><ellipse cx="470" cy="760" rx="70" ry="22" fill="#6b5230" opacity="0.45"/><ellipse cx="1080" cy="720" rx="90" ry="22" fill="#6e5630" opacity="0.45"/><ellipse cx="1270" cy="800" rx="80" ry="22" fill="#6b5230" opacity="0.45"/><ellipse cx="950" cy="640" rx="60" ry="16" fill="#7a6034" opacity="0.4"/><ellipse cx="150" cy="820" rx="80" ry="22" fill="#65502e" opacity="0.45"/><ellipse cx="80" cy="560" rx="70" ry="14" fill="#a88a48" opacity="0.4"/><ellipse cx="1180" cy="600" rx="80" ry="14" fill="#a88a48" opacity="0.4"/></g><g filter="url(#p3f)"><ellipse cx="890" cy="402" rx="32" ry="16" fill="#77773f" opacity=".85"/><path d="M890 402v32" stroke="#7a5a38" stroke-width="4"/><ellipse cx="1340" cy="395" rx="30" ry="14" fill="#77773f" opacity=".85"/><path d="M1340 395v30" stroke="#7a5a38" stroke-width="4"/><ellipse cx="560" cy="404" rx="28" ry="12" fill="#77773f" opacity=".85"/><path d="M560 404v28" stroke="#7a5a38" stroke-width="4"/><ellipse cx="1020" cy="396" rx="22" ry="10" fill="#77773f" opacity=".85"/><path d="M1020 396v26" stroke="#7a5a38" stroke-width="4"/><ellipse cx="60" cy="405" rx="30" ry="14" fill="#77773f" opacity=".85"/><path d="M60 405v30" stroke="#7a5a38" stroke-width="4"/><ellipse cx="1120" cy="408" rx="18" ry="8" fill="#77773f" opacity=".85"/><path d="M1120 408v24" stroke="#7a5a38" stroke-width="4"/><ellipse cx="1160" cy="405" rx="14" ry="7" fill="#77773f" opacity=".85"/><path d="M1160 405v23" stroke="#7a5a38" stroke-width="4"/><ellipse cx="470" cy="410" rx="18" ry="8" fill="#77773f" opacity=".85"/><path d="M470 410v24" stroke="#7a5a38" stroke-width="4"/><ellipse cx="130" cy="412" rx="16" ry="8" fill="#77773f" opacity=".85"/><path d="M130 412v24" stroke="#7a5a38" stroke-width="4"/><ellipse cx="1225" cy="410" rx="14" ry="7" fill="#77773f" opacity=".85"/><path d="M1225 410v23" stroke="#7a5a38" stroke-width="4"/><ellipse cx="920" cy="430" rx="14" ry="8" fill="#77773f" opacity=".85"/><path d="M920 430v24" stroke="#7a5a38" stroke-width="4"/><ellipse cx="200" cy="408" rx="16" ry="7" fill="#77773f" opacity=".85"/><path d="M200 408v23" stroke="#7a5a38" stroke-width="4"/><path d="M88 447L91 375L55 335M91 378L135 335M91 400L70 360" stroke="#7a5a38" stroke-width="8" fill="none"/><ellipse cx="186" cy="310" rx="16" ry="7" fill="#9a9048" opacity="0.66"/><ellipse cx="133" cy="298" rx="26" ry="9" fill="#8e8a44" opacity="0.80"/><ellipse cx="133" cy="330" rx="30" ry="10" fill="#4a502c" opacity="0.78"/><ellipse cx="45" cy="335" rx="19" ry="5" fill="#62622f" opacity="0.61"/><ellipse cx="61" cy="319" rx="22" ry="10" fill="#6f7038" opacity="0.66"/><ellipse cx="120" cy="326" rx="21" ry="6" fill="#7c7c3e" opacity="0.78"/><ellipse cx="173" cy="316" rx="34" ry="8" fill="#7c7c3e" opacity="0.75"/><ellipse cx="22" cy="313" rx="30" ry="7" fill="#6f7038" opacity="0.94"/><ellipse cx="133" cy="314" rx="28" ry="8" fill="#6f7038" opacity="0.79"/><ellipse cx="20" cy="318" rx="24" ry="10" fill="#86803f" opacity="0.83"/><ellipse cx="25" cy="323" rx="25" ry="11" fill="#6f7038" opacity="0.85"/><ellipse cx="68" cy="317" rx="30" ry="10" fill="#6f7038" opacity="0.91"/><ellipse cx="48" cy="304" rx="20" ry="11" fill="#8e8a44" opacity="0.85"/><ellipse cx="45" cy="316" rx="26" ry="7" fill="#86803f" opacity="0.86"/><ellipse cx="56" cy="317" rx="26" ry="5" fill="#86803f" opacity="0.89"/><ellipse cx="91" cy="296" rx="34" ry="6" fill="#9a9048" opacity="0.80"/><ellipse cx="165" cy="322" rx="32" ry="6" fill="#86803f" opacity="0.78"/><ellipse cx="127" cy="309" rx="33" ry="5" fill="#9a9048" opacity="0.91"/><ellipse cx="105" cy="312" rx="17" ry="9" fill="#6f7038" opacity="0.63"/><ellipse cx="113" cy="315" rx="32" ry="7" fill="#86803f" opacity="0.64"/><ellipse cx="171" cy="309" rx="28" ry="7" fill="#a39a52" opacity="0.62"/><ellipse cx="132" cy="316" rx="14" ry="11" fill="#7c7c3e" opacity="0.82"/><ellipse cx="103" cy="306" rx="15" ry="8" fill="#8e8a44" opacity="0.87"/><ellipse cx="99" cy="296" rx="31" ry="9" fill="#8e8a44" opacity="0.77"/><ellipse cx="115" cy="337" rx="31" ry="5" fill="#4a502c" opacity="0.88"/><ellipse cx="160" cy="311" rx="24" ry="7" fill="#6f7038" opacity="0.91"/><ellipse cx="83" cy="326" rx="27" ry="9" fill="#6f7038" opacity="0.94"/><ellipse cx="86" cy="308" rx="17" ry="6" fill="#9a9048" opacity="0.82"/><ellipse cx="17" cy="315" rx="34" ry="6" fill="#7c7c3e" opacity="0.76"/><ellipse cx="104" cy="336" rx="30" ry="9" fill="#62622f" opacity="0.73"/><ellipse cx="88" cy="307" rx="17" ry="7" fill="#9a9048" opacity="0.66"/><ellipse cx="84" cy="316" rx="16" ry="6" fill="#7c7c3e" opacity="0.68"/><ellipse cx="116" cy="334" rx="23" ry="8" fill="#4a502c" opacity="0.73"/><ellipse cx="74" cy="299" rx="29" ry="8" fill="#9a9048" opacity="0.78"/><ellipse cx="91" cy="314" rx="33" ry="8" fill="#6f7038" opacity="0.92"/><ellipse cx="75" cy="304" rx="24" ry="11" fill="#9a9048" opacity="0.81"/><ellipse cx="83" cy="342" rx="20" ry="10" fill="#4a502c" opacity="0.74"/><ellipse cx="130" cy="322" rx="31" ry="10" fill="#86803f" opacity="0.62"/><ellipse cx="68" cy="306" rx="26" ry="5" fill="#a39a52" opacity="0.61"/><ellipse cx="79" cy="337" rx="29" ry="6" fill="#545a30" opacity="0.80"/><ellipse cx="61" cy="327" rx="22" ry="6" fill="#6f7038" opacity="0.64"/><ellipse cx="174" cy="328" rx="22" ry="6" fill="#62622f" opacity="0.64"/><ellipse cx="63" cy="307" rx="28" ry="8" fill="#9a9048" opacity="0.73"/><ellipse cx="15" cy="323" rx="24" ry="10" fill="#6f7038" opacity="0.85"/><ellipse cx="38" cy="313" rx="31" ry="7" fill="#8e8a44" opacity="0.68"/><ellipse cx="27" cy="320" rx="28" ry="9" fill="#6f7038" opacity="0.63"/><ellipse cx="37" cy="312" rx="21" ry="11" fill="#9a9048" opacity="0.65"/><ellipse cx="35" cy="321" rx="32" ry="9" fill="#7c7c3e" opacity="0.88"/><ellipse cx="69" cy="323" rx="19" ry="9" fill="#6f7038" opacity="0.84"/><ellipse cx="21" cy="324" rx="17" ry="11" fill="#7c7c3e" opacity="0.94"/><path d="M264 442L270 390L278 355L262 330M275 365L300 335" stroke="#7a5a38" stroke-width="6" fill="none"/><ellipse cx="289" cy="419" rx="32" ry="8" fill="#4a502c" opacity="0.80"/><ellipse cx="249" cy="391" rx="19" ry="6" fill="#8e8a44" opacity="0.95"/><ellipse cx="242" cy="406" rx="22" ry="10" fill="#6f7038" opacity="0.68"/><ellipse cx="314" cy="421" rx="29" ry="9" fill="#4a502c" opacity="0.62"/><ellipse cx="288" cy="388" rx="30" ry="10" fill="#8e8a44" opacity="0.69"/><ellipse cx="247" cy="392" rx="28" ry="11" fill="#8e8a44" opacity="0.74"/><ellipse cx="296" cy="391" rx="32" ry="6" fill="#9a9048" opacity="0.65"/><ellipse cx="296" cy="425" rx="30" ry="10" fill="#4a502c" opacity="0.75"/><ellipse cx="304" cy="390" rx="26" ry="9" fill="#a39a52" opacity="0.92"/><ellipse cx="266" cy="385" rx="34" ry="9" fill="#8e8a44" opacity="0.66"/><ellipse cx="317" cy="388" rx="25" ry="9" fill="#a39a52" opacity="0.67"/><ellipse cx="304" cy="390" rx="16" ry="8" fill="#8e8a44" opacity="0.82"/><ellipse cx="260" cy="403" rx="22" ry="6" fill="#7c7c3e" opacity="0.70"/><ellipse cx="291" cy="384" rx="26" ry="10" fill="#9a9048" opacity="0.73"/><ellipse cx="256" cy="395" rx="24" ry="11" fill="#8e8a44" opacity="0.71"/><ellipse cx="319" cy="410" rx="33" ry="11" fill="#7c7c3e" opacity="0.70"/><ellipse cx="283" cy="421" rx="20" ry="11" fill="#4a502c" opacity="0.91"/><ellipse cx="263" cy="412" rx="22" ry="10" fill="#62622f" opacity="0.84"/><ellipse cx="325" cy="416" rx="19" ry="9" fill="#62622f" opacity="0.85"/><ellipse cx="314" cy="397" rx="24" ry="8" fill="#6f7038" opacity="0.60"/><ellipse cx="255" cy="411" rx="22" ry="9" fill="#7c7c3e" opacity="0.65"/><ellipse cx="298" cy="325" rx="24" ry="6" fill="#6f7038" opacity="0.61"/><ellipse cx="265" cy="320" rx="18" ry="8" fill="#7c7c3e" opacity="0.70"/><ellipse cx="304" cy="325" rx="33" ry="5" fill="#7c7c3e" opacity="0.82"/><ellipse cx="294" cy="328" rx="20" ry="9" fill="#545a30" opacity="0.86"/><ellipse cx="334" cy="314" rx="31" ry="7" fill="#9a9048" opacity="0.74"/><ellipse cx="296" cy="328" rx="16" ry="11" fill="#4a502c" opacity="0.90"/><ellipse cx="264" cy="321" rx="25" ry="10" fill="#6f7038" opacity="0.90"/><ellipse cx="256" cy="322" rx="20" ry="8" fill="#86803f" opacity="0.68"/><ellipse cx="292" cy="333" rx="15" ry="9" fill="#545a30" opacity="0.70"/><ellipse cx="254" cy="321" rx="17" ry="9" fill="#6f7038" opacity="0.62"/><ellipse cx="340" cy="318" rx="20" ry="7" fill="#8e8a44" opacity="0.86"/><ellipse cx="275" cy="330" rx="16" ry="5" fill="#4a502c" opacity="0.68"/><path d="M357 490C350 430 360 390 378 328" stroke="#7a5a38" stroke-width="19" fill="none"/><path d="M376 335L335 285L290 262L250 250M345 300L300 296M378 330L392 280L400 225M390 290L440 255L470 235L520 220M425 262L465 262M350 310L320 275" stroke="#7a5a38" stroke-width="8" fill="none" stroke-linecap="round"/><ellipse cx="331" cy="116" rx="33" ry="9" fill="#a39a52" opacity="0.92"/><ellipse cx="468" cy="131" rx="27" ry="10" fill="#7c7c3e" opacity="0.64"/><ellipse cx="351" cy="130" rx="16" ry="6" fill="#86803f" opacity="0.86"/><ellipse cx="364" cy="133" rx="17" ry="10" fill="#6f7038" opacity="0.65"/><ellipse cx="374" cy="124" rx="33" ry="5" fill="#7c7c3e" opacity="0.87"/><ellipse cx="435" cy="126" rx="20" ry="11" fill="#7c7c3e" opacity="0.79"/><ellipse cx="379" cy="121" rx="18" ry="11" fill="#a39a52" opacity="0.73"/><ellipse cx="463" cy="130" rx="19" ry="7" fill="#7c7c3e" opacity="0.89"/><ellipse cx="328" cy="120" rx="21" ry="7" fill="#a39a52" opacity="0.89"/><ellipse cx="342" cy="130" rx="23" ry="6" fill="#6f7038" opacity="0.69"/><ellipse cx="499" cy="120" rx="31" ry="5" fill="#8e8a44" opacity="0.88"/><ellipse cx="344" cy="142" rx="23" ry="9" fill="#545a30" opacity="0.82"/><ellipse cx="428" cy="126" rx="33" ry="11" fill="#7c7c3e" opacity="0.72"/><ellipse cx="351" cy="142" rx="16" ry="9" fill="#4a502c" opacity="0.88"/><ellipse cx="408" cy="126" rx="18" ry="8" fill="#7c7c3e" opacity="0.73"/><ellipse cx="429" cy="138" rx="25" ry="7" fill="#86803f" opacity="0.71"/><ellipse cx="409" cy="133" rx="28" ry="7" fill="#7c7c3e" opacity="0.77"/><ellipse cx="393" cy="123" rx="25" ry="7" fill="#86803f" opacity="0.68"/><ellipse cx="315" cy="118" rx="27" ry="6" fill="#8e8a44" opacity="0.94"/><ellipse cx="335" cy="114" rx="31" ry="6" fill="#8e8a44" opacity="0.86"/><ellipse cx="479" cy="123" rx="16" ry="8" fill="#6f7038" opacity="0.65"/><ellipse cx="428" cy="120" rx="32" ry="9" fill="#8e8a44" opacity="0.66"/><ellipse cx="290" cy="125" rx="29" ry="8" fill="#86803f" opacity="0.70"/><ellipse cx="369" cy="133" rx="30" ry="8" fill="#6f7038" opacity="0.66"/><ellipse cx="493" cy="121" rx="16" ry="7" fill="#9a9048" opacity="0.87"/><ellipse cx="439" cy="120" rx="28" ry="9" fill="#8e8a44" opacity="0.87"/><ellipse cx="339" cy="144" rx="31" ry="7" fill="#4a502c" opacity="0.94"/><ellipse cx="375" cy="108" rx="27" ry="8" fill="#8e8a44" opacity="0.60"/><ellipse cx="351" cy="125" rx="19" ry="7" fill="#86803f" opacity="0.78"/><ellipse cx="370" cy="118" rx="27" ry="9" fill="#8e8a44" opacity="0.89"/><ellipse cx="339" cy="147" rx="23" ry="7" fill="#62622f" opacity="0.72"/><ellipse cx="468" cy="148" rx="31" ry="11" fill="#545a30" opacity="0.77"/><ellipse cx="365" cy="112" rx="22" ry="9" fill="#a39a52" opacity="0.93"/><ellipse cx="291" cy="126" rx="26" ry="10" fill="#6f7038" opacity="0.82"/><ellipse cx="396" cy="126" rx="26" ry="9" fill="#7c7c3e" opacity="0.66"/><ellipse cx="400" cy="121" rx="15" ry="8" fill="#a39a52" opacity="0.68"/><ellipse cx="430" cy="131" rx="33" ry="8" fill="#6f7038" opacity="0.79"/><ellipse cx="346" cy="135" rx="26" ry="9" fill="#86803f" opacity="0.68"/><ellipse cx="399" cy="128" rx="33" ry="10" fill="#6f7038" opacity="0.90"/><ellipse cx="369" cy="115" rx="25" ry="7" fill="#9a9048" opacity="0.70"/><ellipse cx="290" cy="126" rx="33" ry="10" fill="#6f7038" opacity="0.75"/><ellipse cx="431" cy="113" rx="23" ry="6" fill="#8e8a44" opacity="0.73"/><ellipse cx="356" cy="129" rx="26" ry="7" fill="#7c7c3e" opacity="0.91"/><ellipse cx="427" cy="128" rx="32" ry="8" fill="#86803f" opacity="0.71"/><ellipse cx="455" cy="118" rx="23" ry="6" fill="#8e8a44" opacity="0.70"/><ellipse cx="460" cy="126" rx="26" ry="7" fill="#7c7c3e" opacity="0.94"/><ellipse cx="332" cy="128" rx="33" ry="7" fill="#6f7038" opacity="0.93"/><ellipse cx="405" cy="130" rx="26" ry="8" fill="#86803f" opacity="0.70"/><ellipse cx="418" cy="110" rx="24" ry="8" fill="#9a9048" opacity="0.69"/><ellipse cx="383" cy="129" rx="19" ry="6" fill="#6f7038" opacity="0.95"/><ellipse cx="376" cy="147" rx="24" ry="10" fill="#4a502c" opacity="0.91"/><ellipse cx="405" cy="127" rx="20" ry="8" fill="#7c7c3e" opacity="0.72"/><ellipse cx="347" cy="228" rx="21" ry="9" fill="#4a502c" opacity="0.88"/><ellipse cx="394" cy="199" rx="23" ry="10" fill="#86803f" opacity="0.91"/><ellipse cx="374" cy="197" rx="26" ry="9" fill="#6f7038" opacity="0.93"/><ellipse cx="274" cy="171" rx="24" ry="9" fill="#8e8a44" opacity="0.85"/><ellipse cx="499" cy="184" rx="20" ry="5" fill="#9a9048" opacity="0.87"/><ellipse cx="246" cy="184" rx="32" ry="6" fill="#8e8a44" opacity="0.77"/><ellipse cx="255" cy="191" rx="25" ry="8" fill="#6f7038" opacity="0.79"/><ellipse cx="560" cy="209" rx="30" ry="10" fill="#6f7038" opacity="0.83"/><ellipse cx="565" cy="204" rx="34" ry="9" fill="#7c7c3e" opacity="0.62"/><ellipse cx="437" cy="186" rx="30" ry="6" fill="#a39a52" opacity="0.91"/><ellipse cx="564" cy="197" rx="17" ry="9" fill="#6f7038" opacity="0.74"/><ellipse cx="476" cy="227" rx="25" ry="9" fill="#545a30" opacity="0.86"/><ellipse cx="361" cy="230" rx="29" ry="10" fill="#545a30" opacity="0.65"/><ellipse cx="292" cy="208" rx="24" ry="7" fill="#86803f" opacity="0.83"/><ellipse cx="446" cy="192" rx="17" ry="9" fill="#6f7038" opacity="0.78"/><ellipse cx="518" cy="184" rx="18" ry="5" fill="#a39a52" opacity="0.68"/><ellipse cx="440" cy="183" rx="30" ry="10" fill="#9a9048" opacity="0.76"/><ellipse cx="341" cy="207" rx="27" ry="6" fill="#7c7c3e" opacity="0.83"/><ellipse cx="442" cy="205" rx="23" ry="7" fill="#86803f" opacity="0.76"/><ellipse cx="445" cy="196" rx="15" ry="9" fill="#86803f" opacity="0.62"/><ellipse cx="512" cy="234" rx="30" ry="9" fill="#62622f" opacity="0.63"/><ellipse cx="509" cy="185" rx="17" ry="9" fill="#9a9048" opacity="0.72"/><ellipse cx="400" cy="222" rx="28" ry="10" fill="#62622f" opacity="0.73"/><ellipse cx="370" cy="178" rx="30" ry="8" fill="#8e8a44" opacity="0.90"/><ellipse cx="234" cy="195" rx="18" ry="6" fill="#86803f" opacity="0.62"/><ellipse cx="466" cy="202" rx="15" ry="10" fill="#7c7c3e" opacity="0.77"/><ellipse cx="390" cy="198" rx="20" ry="11" fill="#6f7038" opacity="0.92"/><ellipse cx="330" cy="224" rx="17" ry="6" fill="#545a30" opacity="0.73"/><ellipse cx="240" cy="226" rx="25" ry="6" fill="#545a30" opacity="0.89"/><ellipse cx="390" cy="169" rx="24" ry="5" fill="#9a9048" opacity="0.92"/><ellipse cx="249" cy="230" rx="14" ry="8" fill="#62622f" opacity="0.90"/><ellipse cx="494" cy="231" rx="20" ry="9" fill="#4a502c" opacity="0.86"/><ellipse cx="433" cy="213" rx="25" ry="9" fill="#7c7c3e" opacity="0.82"/><ellipse cx="538" cy="182" rx="20" ry="8" fill="#a39a52" opacity="0.70"/><ellipse cx="370" cy="168" rx="30" ry="6" fill="#9a9048" opacity="0.67"/><ellipse cx="544" cy="207" rx="34" ry="5" fill="#86803f" opacity="0.62"/><ellipse cx="413" cy="177" rx="15" ry="10" fill="#9a9048" opacity="0.89"/><ellipse cx="200" cy="184" rx="15" ry="10" fill="#a39a52" opacity="0.77"/><ellipse cx="424" cy="195" rx="27" ry="8" fill="#7c7c3e" opacity="0.87"/><ellipse cx="574" cy="210" rx="20" ry="5" fill="#6f7038" opacity="0.61"/><ellipse cx="465" cy="196" rx="27" ry="6" fill="#86803f" opacity="0.68"/><ellipse cx="557" cy="184" rx="25" ry="11" fill="#9a9048" opacity="0.81"/><ellipse cx="443" cy="187" rx="23" ry="7" fill="#9a9048" opacity="0.75"/><ellipse cx="407" cy="173" rx="29" ry="10" fill="#9a9048" opacity="0.71"/><ellipse cx="208" cy="211" rx="25" ry="6" fill="#7c7c3e" opacity="0.77"/><ellipse cx="408" cy="182" rx="20" ry="6" fill="#8e8a44" opacity="0.63"/><ellipse cx="392" cy="208" rx="33" ry="9" fill="#6f7038" opacity="0.70"/><ellipse cx="297" cy="199" rx="18" ry="7" fill="#86803f" opacity="0.73"/><ellipse cx="494" cy="214" rx="22" ry="10" fill="#6f7038" opacity="0.60"/><ellipse cx="344" cy="241" rx="25" ry="8" fill="#545a30" opacity="0.89"/><ellipse cx="273" cy="168" rx="15" ry="8" fill="#a39a52" opacity="0.64"/><ellipse cx="442" cy="174" rx="15" ry="6" fill="#8e8a44" opacity="0.69"/><ellipse cx="344" cy="183" rx="25" ry="9" fill="#9a9048" opacity="0.61"/><ellipse cx="542" cy="229" rx="23" ry="7" fill="#4a502c" opacity="0.93"/><ellipse cx="536" cy="201" rx="21" ry="7" fill="#7c7c3e" opacity="0.60"/><ellipse cx="225" cy="181" rx="34" ry="7" fill="#a39a52" opacity="0.81"/><ellipse cx="344" cy="190" rx="30" ry="6" fill="#6f7038" opacity="0.71"/><ellipse cx="506" cy="186" rx="17" ry="5" fill="#8e8a44" opacity="0.83"/><ellipse cx="463" cy="223" rx="26" ry="6" fill="#4a502c" opacity="0.88"/><ellipse cx="358" cy="202" rx="15" ry="8" fill="#7c7c3e" opacity="0.77"/><ellipse cx="480" cy="184" rx="18" ry="10" fill="#9a9048" opacity="0.71"/><ellipse cx="208" cy="195" rx="21" ry="10" fill="#7c7c3e" opacity="0.88"/><ellipse cx="285" cy="168" rx="26" ry="7" fill="#9a9048" opacity="0.65"/><ellipse cx="459" cy="177" rx="16" ry="7" fill="#9a9048" opacity="0.86"/><ellipse cx="350" cy="241" rx="24" ry="8" fill="#4a502c" opacity="0.79"/><ellipse cx="459" cy="207" rx="14" ry="8" fill="#86803f" opacity="0.81"/><ellipse cx="439" cy="222" rx="28" ry="9" fill="#4a502c" opacity="0.78"/><ellipse cx="241" cy="198" rx="22" ry="11" fill="#86803f" opacity="0.89"/><ellipse cx="543" cy="184" rx="15" ry="6" fill="#a39a52" opacity="0.75"/><ellipse cx="410" cy="197" rx="18" ry="7" fill="#86803f" opacity="0.61"/><ellipse cx="414" cy="171" rx="22" ry="11" fill="#a39a52" opacity="0.61"/><ellipse cx="471" cy="191" rx="29" ry="9" fill="#7c7c3e" opacity="0.93"/><ellipse cx="527" cy="180" rx="26" ry="8" fill="#a39a52" opacity="0.77"/><ellipse cx="441" cy="205" rx="33" ry="8" fill="#6f7038" opacity="0.74"/><ellipse cx="512" cy="198" rx="29" ry="8" fill="#7c7c3e" opacity="0.67"/><ellipse cx="342" cy="181" rx="16" ry="9" fill="#8e8a44" opacity="0.79"/><ellipse cx="364" cy="178" rx="18" ry="7" fill="#9a9048" opacity="0.69"/><ellipse cx="245" cy="174" rx="16" ry="7" fill="#9a9048" opacity="0.66"/><ellipse cx="304" cy="176" rx="31" ry="10" fill="#a39a52" opacity="0.85"/><ellipse cx="278" cy="212" rx="26" ry="6" fill="#86803f" opacity="0.75"/><ellipse cx="563" cy="220" rx="18" ry="5" fill="#4a502c" opacity="0.64"/><ellipse cx="243" cy="188" rx="23" ry="7" fill="#9a9048" opacity="0.64"/><ellipse cx="415" cy="180" rx="15" ry="8" fill="#9a9048" opacity="0.89"/><ellipse cx="494" cy="193" rx="27" ry="11" fill="#6f7038" opacity="0.68"/><ellipse cx="326" cy="167" rx="31" ry="5" fill="#8e8a44" opacity="0.84"/><ellipse cx="475" cy="213" rx="26" ry="6" fill="#6f7038" opacity="0.87"/><ellipse cx="374" cy="166" rx="28" ry="11" fill="#9a9048" opacity="0.93"/><ellipse cx="241" cy="173" rx="21" ry="10" fill="#9a9048" opacity="0.67"/><ellipse cx="356" cy="212" rx="34" ry="10" fill="#86803f" opacity="0.69"/><ellipse cx="517" cy="190" rx="16" ry="9" fill="#7c7c3e" opacity="0.73"/><ellipse cx="333" cy="176" rx="33" ry="5" fill="#8e8a44" opacity="0.87"/><ellipse cx="371" cy="181" rx="30" ry="11" fill="#9a9048" opacity="0.86"/><ellipse cx="428" cy="221" rx="20" ry="8" fill="#545a30" opacity="0.84"/><ellipse cx="427" cy="172" rx="22" ry="11" fill="#8e8a44" opacity="0.62"/><ellipse cx="311" cy="206" rx="19" ry="9" fill="#7c7c3e" opacity="0.65"/><ellipse cx="538" cy="193" rx="34" ry="8" fill="#6f7038" opacity="0.74"/><ellipse cx="437" cy="194" rx="17" ry="6" fill="#6f7038" opacity="0.89"/><ellipse cx="510" cy="229" rx="19" ry="8" fill="#545a30" opacity="0.73"/><ellipse cx="353" cy="197" rx="18" ry="10" fill="#7c7c3e" opacity="0.60"/><ellipse cx="182" cy="194" rx="33" ry="9" fill="#86803f" opacity="0.78"/><ellipse cx="506" cy="207" rx="23" ry="9" fill="#86803f" opacity="0.92"/><ellipse cx="290" cy="176" rx="18" ry="8" fill="#9a9048" opacity="0.85"/><ellipse cx="463" cy="168" rx="32" ry="7" fill="#8e8a44" opacity="0.95"/><ellipse cx="398" cy="164" rx="20" ry="6" fill="#9a9048" opacity="0.89"/><ellipse cx="495" cy="210" rx="22" ry="7" fill="#6f7038" opacity="0.76"/><ellipse cx="352" cy="233" rx="29" ry="10" fill="#545a30" opacity="0.63"/><ellipse cx="379" cy="193" rx="32" ry="6" fill="#6f7038" opacity="0.61"/><ellipse cx="489" cy="166" rx="23" ry="8" fill="#a39a52" opacity="0.63"/><ellipse cx="284" cy="224" rx="18" ry="8" fill="#545a30" opacity="0.69"/><ellipse cx="393" cy="178" rx="17" ry="8" fill="#9a9048" opacity="0.94"/><ellipse cx="375" cy="190" rx="16" ry="7" fill="#7c7c3e" opacity="0.71"/><ellipse cx="515" cy="184" rx="33" ry="6" fill="#8e8a44" opacity="0.80"/><ellipse cx="378" cy="230" rx="22" ry="6" fill="#62622f" opacity="0.83"/><ellipse cx="406" cy="199" rx="22" ry="8" fill="#7c7c3e" opacity="0.81"/><ellipse cx="400" cy="192" rx="19" ry="9" fill="#86803f" opacity="0.91"/><ellipse cx="415" cy="172" rx="23" ry="9" fill="#8e8a44" opacity="0.92"/><ellipse cx="289" cy="221" rx="26" ry="9" fill="#62622f" opacity="0.74"/><ellipse cx="250" cy="227" rx="33" ry="5" fill="#62622f" opacity="0.76"/><ellipse cx="377" cy="173" rx="16" ry="8" fill="#8e8a44" opacity="0.89"/><ellipse cx="302" cy="217" rx="21" ry="8" fill="#4a502c" opacity="0.80"/><ellipse cx="425" cy="226" rx="29" ry="6" fill="#545a30" opacity="0.91"/><ellipse cx="311" cy="215" rx="24" ry="6" fill="#6f7038" opacity="0.64"/><ellipse cx="390" cy="203" rx="22" ry="9" fill="#6f7038" opacity="0.69"/><ellipse cx="373" cy="240" rx="32" ry="10" fill="#4a502c" opacity="0.81"/><ellipse cx="205" cy="184" rx="25" ry="5" fill="#8e8a44" opacity="0.62"/><ellipse cx="453" cy="176" rx="15" ry="9" fill="#a39a52" opacity="0.64"/><ellipse cx="361" cy="171" rx="26" ry="8" fill="#a39a52" opacity="0.84"/><ellipse cx="342" cy="169" rx="16" ry="5" fill="#a39a52" opacity="0.76"/><ellipse cx="271" cy="170" rx="31" ry="11" fill="#a39a52" opacity="0.84"/><ellipse cx="372" cy="224" rx="19" ry="7" fill="#4a502c" opacity="0.60"/><ellipse cx="397" cy="173" rx="23" ry="6" fill="#8e8a44" opacity="0.68"/><ellipse cx="373" cy="242" rx="23" ry="6" fill="#545a30" opacity="0.95"/><ellipse cx="306" cy="181" rx="27" ry="6" fill="#a39a52" opacity="0.65"/><ellipse cx="219" cy="200" rx="33" ry="7" fill="#6f7038" opacity="0.61"/><ellipse cx="251" cy="211" rx="25" ry="10" fill="#86803f" opacity="0.79"/><ellipse cx="323" cy="179" rx="31" ry="7" fill="#8e8a44" opacity="0.64"/><ellipse cx="383" cy="223" rx="19" ry="9" fill="#62622f" opacity="0.82"/><ellipse cx="447" cy="195" rx="21" ry="6" fill="#7c7c3e" opacity="0.82"/><ellipse cx="477" cy="176" rx="30" ry="8" fill="#9a9048" opacity="0.66"/><ellipse cx="297" cy="232" rx="22" ry="7" fill="#545a30" opacity="0.63"/><ellipse cx="552" cy="213" rx="34" ry="7" fill="#6f7038" opacity="0.62"/><ellipse cx="418" cy="201" rx="30" ry="10" fill="#7c7c3e" opacity="0.78"/><ellipse cx="491" cy="215" rx="22" ry="11" fill="#7c7c3e" opacity="0.79"/><ellipse cx="291" cy="174" rx="33" ry="11" fill="#8e8a44" opacity="0.76"/><ellipse cx="537" cy="222" rx="26" ry="6" fill="#545a30" opacity="0.83"/><ellipse cx="328" cy="180" rx="19" ry="8" fill="#9a9048" opacity="0.94"/><ellipse cx="314" cy="206" rx="34" ry="6" fill="#86803f" opacity="0.83"/><ellipse cx="424" cy="213" rx="25" ry="6" fill="#86803f" opacity="0.62"/><ellipse cx="516" cy="189" rx="25" ry="10" fill="#6f7038" opacity="0.82"/><ellipse cx="387" cy="214" rx="19" ry="8" fill="#86803f" opacity="0.87"/><ellipse cx="339" cy="191" rx="23" ry="11" fill="#7c7c3e" opacity="0.87"/><ellipse cx="305" cy="204" rx="17" ry="6" fill="#7c7c3e" opacity="0.76"/><ellipse cx="247" cy="175" rx="30" ry="8" fill="#9a9048" opacity="0.70"/><ellipse cx="512" cy="180" rx="15" ry="9" fill="#a39a52" opacity="0.64"/><ellipse cx="400" cy="179" rx="24" ry="10" fill="#a39a52" opacity="0.91"/><ellipse cx="233" cy="194" rx="21" ry="10" fill="#86803f" opacity="0.65"/><ellipse cx="279" cy="211" rx="20" ry="6" fill="#7c7c3e" opacity="0.93"/><ellipse cx="527" cy="204" rx="20" ry="10" fill="#7c7c3e" opacity="0.83"/><ellipse cx="220" cy="218" rx="23" ry="10" fill="#62622f" opacity="0.78"/><ellipse cx="309" cy="230" rx="17" ry="8" fill="#545a30" opacity="0.60"/><ellipse cx="437" cy="168" rx="15" ry="8" fill="#8e8a44" opacity="0.77"/><ellipse cx="450" cy="210" rx="31" ry="6" fill="#7c7c3e" opacity="0.89"/><ellipse cx="319" cy="181" rx="31" ry="9" fill="#a39a52" opacity="0.92"/><ellipse cx="415" cy="217" rx="29" ry="8" fill="#545a30" opacity="0.75"/><ellipse cx="328" cy="234" rx="25" ry="8" fill="#4a502c" opacity="0.88"/><ellipse cx="428" cy="168" rx="25" ry="5" fill="#8e8a44" opacity="0.75"/><ellipse cx="313" cy="202" rx="16" ry="8" fill="#7c7c3e" opacity="0.75"/><ellipse cx="435" cy="176" rx="15" ry="10" fill="#a39a52" opacity="0.84"/><ellipse cx="287" cy="183" rx="26" ry="9" fill="#a39a52" opacity="0.90"/><ellipse cx="375" cy="196" rx="34" ry="6" fill="#6f7038" opacity="0.62"/><ellipse cx="361" cy="208" rx="32" ry="6" fill="#6f7038" opacity="0.74"/><ellipse cx="428" cy="200" rx="29" ry="7" fill="#7c7c3e" opacity="0.66"/><ellipse cx="583" cy="188" rx="18" ry="6" fill="#a39a52" opacity="0.92"/><ellipse cx="516" cy="234" rx="23" ry="10" fill="#4a502c" opacity="0.84"/><ellipse cx="499" cy="175" rx="31" ry="11" fill="#9a9048" opacity="0.88"/><ellipse cx="245" cy="216" rx="25" ry="10" fill="#86803f" opacity="0.86"/><ellipse cx="381" cy="184" rx="19" ry="9" fill="#a39a52" opacity="0.87"/><ellipse cx="442" cy="227" rx="21" ry="6" fill="#545a30" opacity="0.81"/><ellipse cx="346" cy="209" rx="18" ry="8" fill="#6f7038" opacity="0.85"/><ellipse cx="244" cy="221" rx="25" ry="11" fill="#a39a52" opacity="0.89"/><ellipse cx="163" cy="257" rx="24" ry="7" fill="#545a30" opacity="0.95"/><ellipse cx="186" cy="213" rx="19" ry="8" fill="#8e8a44" opacity="0.91"/><ellipse cx="161" cy="257" rx="17" ry="8" fill="#4a502c" opacity="0.75"/><ellipse cx="204" cy="218" rx="16" ry="8" fill="#8e8a44" opacity="0.87"/><ellipse cx="177" cy="229" rx="26" ry="6" fill="#86803f" opacity="0.86"/><ellipse cx="164" cy="237" rx="20" ry="9" fill="#7c7c3e" opacity="0.64"/><ellipse cx="177" cy="227" rx="31" ry="9" fill="#86803f" opacity="0.63"/><ellipse cx="131" cy="231" rx="23" ry="6" fill="#7c7c3e" opacity="0.70"/><ellipse cx="179" cy="230" rx="24" ry="10" fill="#86803f" opacity="0.89"/><ellipse cx="180" cy="225" rx="20" ry="6" fill="#6f7038" opacity="0.72"/><ellipse cx="206" cy="226" rx="31" ry="7" fill="#6f7038" opacity="0.64"/><ellipse cx="165" cy="255" rx="21" ry="9" fill="#4a502c" opacity="0.76"/><ellipse cx="200" cy="224" rx="32" ry="7" fill="#7c7c3e" opacity="0.76"/><ellipse cx="226" cy="216" rx="24" ry="10" fill="#a39a52" opacity="0.80"/><ellipse cx="143" cy="236" rx="29" ry="11" fill="#86803f" opacity="0.64"/><ellipse cx="223" cy="235" rx="20" ry="7" fill="#7c7c3e" opacity="0.81"/><ellipse cx="172" cy="223" rx="17" ry="7" fill="#6f7038" opacity="0.80"/><ellipse cx="147" cy="216" rx="15" ry="5" fill="#9a9048" opacity="0.82"/><ellipse cx="181" cy="254" rx="23" ry="7" fill="#545a30" opacity="0.84"/><ellipse cx="127" cy="223" rx="31" ry="10" fill="#86803f" opacity="0.82"/><ellipse cx="205" cy="220" rx="34" ry="10" fill="#8e8a44" opacity="0.63"/><ellipse cx="164" cy="234" rx="33" ry="11" fill="#6f7038" opacity="0.74"/><ellipse cx="233" cy="207" rx="17" ry="10" fill="#9a9048" opacity="0.79"/><ellipse cx="177" cy="238" rx="14" ry="9" fill="#6f7038" opacity="0.71"/><ellipse cx="199" cy="238" rx="24" ry="6" fill="#86803f" opacity="0.73"/><ellipse cx="200" cy="240" rx="19" ry="8" fill="#6f7038" opacity="0.80"/><ellipse cx="130" cy="227" rx="20" ry="7" fill="#86803f" opacity="0.81"/><ellipse cx="225" cy="256" rx="18" ry="5" fill="#545a30" opacity="0.77"/><ellipse cx="210" cy="259" rx="30" ry="6" fill="#4a502c" opacity="0.76"/><ellipse cx="210" cy="230" rx="16" ry="9" fill="#7c7c3e" opacity="0.64"/><ellipse cx="232" cy="216" rx="26" ry="11" fill="#a39a52" opacity="0.72"/><ellipse cx="172" cy="245" rx="20" ry="7" fill="#4a502c" opacity="0.68"/><ellipse cx="250" cy="222" rx="23" ry="6" fill="#6f7038" opacity="0.62"/><ellipse cx="191" cy="205" rx="18" ry="9" fill="#a39a52" opacity="0.63"/><ellipse cx="140" cy="231" rx="23" ry="6" fill="#7c7c3e" opacity="0.63"/><ellipse cx="193" cy="247" rx="24" ry="10" fill="#62622f" opacity="0.86"/><ellipse cx="164" cy="220" rx="21" ry="7" fill="#8e8a44" opacity="0.68"/><ellipse cx="218" cy="211" rx="17" ry="5" fill="#8e8a44" opacity="0.80"/><ellipse cx="192" cy="229" rx="16" ry="6" fill="#6f7038" opacity="0.73"/><ellipse cx="524" cy="206" rx="17" ry="10" fill="#a39a52" opacity="0.66"/><ellipse cx="501" cy="202" rx="26" ry="6" fill="#a39a52" opacity="0.75"/><ellipse cx="530" cy="229" rx="18" ry="8" fill="#62622f" opacity="0.79"/><ellipse cx="586" cy="231" rx="25" ry="11" fill="#4a502c" opacity="0.95"/><ellipse cx="545" cy="215" rx="26" ry="9" fill="#7c7c3e" opacity="0.71"/><ellipse cx="532" cy="236" rx="26" ry="7" fill="#62622f" opacity="0.67"/><ellipse cx="492" cy="209" rx="16" ry="11" fill="#86803f" opacity="0.61"/><ellipse cx="508" cy="215" rx="18" ry="9" fill="#7c7c3e" opacity="0.70"/><ellipse cx="554" cy="204" rx="21" ry="9" fill="#a39a52" opacity="0.82"/><ellipse cx="567" cy="217" rx="30" ry="7" fill="#6f7038" opacity="0.88"/><ellipse cx="574" cy="223" rx="22" ry="10" fill="#7c7c3e" opacity="0.95"/><ellipse cx="552" cy="213" rx="26" ry="5" fill="#6f7038" opacity="0.78"/><ellipse cx="522" cy="203" rx="18" ry="8" fill="#a39a52" opacity="0.88"/><ellipse cx="530" cy="207" rx="28" ry="9" fill="#8e8a44" opacity="0.85"/><ellipse cx="546" cy="240" rx="27" ry="7" fill="#62622f" opacity="0.94"/><ellipse cx="503" cy="226" rx="18" ry="10" fill="#86803f" opacity="0.77"/><ellipse cx="490" cy="217" rx="34" ry="7" fill="#7c7c3e" opacity="0.85"/><ellipse cx="554" cy="213" rx="27" ry="8" fill="#6f7038" opacity="0.88"/><ellipse cx="553" cy="208" rx="28" ry="9" fill="#6f7038" opacity="0.65"/><ellipse cx="548" cy="219" rx="31" ry="8" fill="#7c7c3e" opacity="0.66"/><ellipse cx="545" cy="217" rx="25" ry="9" fill="#6f7038" opacity="0.82"/><ellipse cx="576" cy="198" rx="24" ry="8" fill="#9a9048" opacity="0.83"/><ellipse cx="530" cy="213" rx="20" ry="8" fill="#86803f" opacity="0.61"/><ellipse cx="563" cy="245" rx="33" ry="6" fill="#4a502c" opacity="0.83"/><ellipse cx="528" cy="217" rx="32" ry="8" fill="#6f7038" opacity="0.72"/><ellipse cx="538" cy="234" rx="20" ry="10" fill="#545a30" opacity="0.68"/><ellipse cx="534" cy="229" rx="29" ry="11" fill="#4a502c" opacity="0.64"/><ellipse cx="513" cy="211" rx="24" ry="7" fill="#86803f" opacity="0.65"/><ellipse cx="544" cy="208" rx="20" ry="6" fill="#8e8a44" opacity="0.93"/><ellipse cx="546" cy="232" rx="15" ry="10" fill="#545a30" opacity="0.75"/><ellipse cx="569" cy="215" rx="28" ry="9" fill="#86803f" opacity="0.88"/><ellipse cx="572" cy="216" rx="17" ry="9" fill="#6f7038" opacity="0.82"/><ellipse cx="498" cy="240" rx="20" ry="8" fill="#4a502c" opacity="0.94"/><ellipse cx="582" cy="216" rx="33" ry="8" fill="#86803f" opacity="0.71"/><ellipse cx="545" cy="203" rx="16" ry="8" fill="#8e8a44" opacity="0.82"/><ellipse cx="503" cy="214" rx="27" ry="9" fill="#7c7c3e" opacity="0.78"/><ellipse cx="526" cy="223" rx="14" ry="9" fill="#7c7c3e" opacity="0.74"/><ellipse cx="581" cy="211" rx="19" ry="7" fill="#86803f" opacity="0.77"/><ellipse cx="555" cy="245" rx="19" ry="7" fill="#4a502c" opacity="0.82"/><ellipse cx="585" cy="211" rx="23" ry="9" fill="#86803f" opacity="0.76"/><ellipse cx="336" cy="173" rx="23" ry="10" fill="#7c7c3e" opacity="0.81"/><ellipse cx="312" cy="182" rx="30" ry="8" fill="#545a30" opacity="0.68"/><ellipse cx="402" cy="162" rx="24" ry="10" fill="#a39a52" opacity="0.65"/><ellipse cx="395" cy="163" rx="16" ry="8" fill="#8e8a44" opacity="0.63"/><ellipse cx="216" cy="176" rx="31" ry="11" fill="#6f7038" opacity="0.85"/><ellipse cx="346" cy="176" rx="21" ry="7" fill="#86803f" opacity="0.78"/><ellipse cx="297" cy="157" rx="31" ry="7" fill="#9a9048" opacity="0.74"/><ellipse cx="248" cy="161" rx="26" ry="10" fill="#9a9048" opacity="0.93"/><ellipse cx="400" cy="175" rx="30" ry="10" fill="#7c7c3e" opacity="0.75"/><ellipse cx="199" cy="166" rx="28" ry="8" fill="#86803f" opacity="0.67"/><ellipse cx="306" cy="178" rx="22" ry="7" fill="#7c7c3e" opacity="0.68"/><ellipse cx="331" cy="183" rx="24" ry="6" fill="#4a502c" opacity="0.91"/><ellipse cx="316" cy="168" rx="21" ry="6" fill="#6f7038" opacity="0.77"/><ellipse cx="325" cy="169" rx="26" ry="8" fill="#7c7c3e" opacity="0.77"/><ellipse cx="270" cy="156" rx="23" ry="10" fill="#8e8a44" opacity="0.93"/><ellipse cx="242" cy="158" rx="26" ry="6" fill="#a39a52" opacity="0.86"/><ellipse cx="211" cy="168" rx="21" ry="7" fill="#86803f" opacity="0.61"/><ellipse cx="386" cy="173" rx="33" ry="9" fill="#6f7038" opacity="0.91"/><ellipse cx="356" cy="183" rx="34" ry="6" fill="#62622f" opacity="0.80"/><ellipse cx="268" cy="161" rx="26" ry="9" fill="#9a9048" opacity="0.65"/><ellipse cx="326" cy="160" rx="22" ry="8" fill="#a39a52" opacity="0.85"/><ellipse cx="294" cy="174" rx="27" ry="8" fill="#6f7038" opacity="0.80"/><ellipse cx="272" cy="161" rx="30" ry="6" fill="#9a9048" opacity="0.64"/><ellipse cx="229" cy="183" rx="31" ry="11" fill="#545a30" opacity="0.77"/><ellipse cx="238" cy="179" rx="20" ry="9" fill="#6f7038" opacity="0.69"/><ellipse cx="362" cy="150" rx="27" ry="6" fill="#a39a52" opacity="0.93"/><ellipse cx="282" cy="155" rx="15" ry="7" fill="#a39a52" opacity="0.82"/><ellipse cx="262" cy="164" rx="22" ry="6" fill="#7c7c3e" opacity="0.87"/><ellipse cx="319" cy="193" rx="16" ry="9" fill="#62622f" opacity="0.63"/><ellipse cx="257" cy="169" rx="34" ry="6" fill="#86803f" opacity="0.86"/><ellipse cx="227" cy="179" rx="16" ry="6" fill="#6f7038" opacity="0.77"/><ellipse cx="243" cy="187" rx="14" ry="6" fill="#4a502c" opacity="0.90"/><ellipse cx="278" cy="165" rx="22" ry="5" fill="#7c7c3e" opacity="0.66"/><ellipse cx="244" cy="189" rx="24" ry="8" fill="#62622f" opacity="0.68"/><ellipse cx="330" cy="156" rx="33" ry="6" fill="#a39a52" opacity="0.85"/><ellipse cx="386" cy="163" rx="32" ry="6" fill="#a39a52" opacity="0.88"/><ellipse cx="197" cy="165" rx="21" ry="10" fill="#6f7038" opacity="0.74"/><ellipse cx="344" cy="177" rx="16" ry="9" fill="#7c7c3e" opacity="0.62"/><ellipse cx="320" cy="164" rx="32" ry="11" fill="#9a9048" opacity="0.75"/><ellipse cx="332" cy="158" rx="21" ry="11" fill="#a39a52" opacity="0.67"/><ellipse cx="384" cy="157" rx="20" ry="5" fill="#a39a52" opacity="0.74"/><ellipse cx="322" cy="157" rx="20" ry="6" fill="#a39a52" opacity="0.81"/><ellipse cx="367" cy="171" rx="15" ry="5" fill="#7c7c3e" opacity="0.73"/><ellipse cx="297" cy="190" rx="23" ry="5" fill="#545a30" opacity="0.90"/><ellipse cx="345" cy="193" rx="30" ry="8" fill="#545a30" opacity="0.82"/><ellipse cx="210" cy="162" rx="30" ry="8" fill="#9a9048" opacity="0.91"/><ellipse cx="344" cy="157" rx="26" ry="10" fill="#9a9048" opacity="0.85"/><ellipse cx="279" cy="176" rx="28" ry="8" fill="#7c7c3e" opacity="0.69"/><ellipse cx="231" cy="192" rx="26" ry="6" fill="#4a502c" opacity="0.67"/><ellipse cx="393" cy="161" rx="29" ry="7" fill="#9a9048" opacity="0.77"/><ellipse cx="280" cy="160" rx="24" ry="5" fill="#a39a52" opacity="0.61"/><ellipse cx="299" cy="147" rx="17" ry="10" fill="#9a9048" opacity="0.69"/><ellipse cx="284" cy="177" rx="19" ry="6" fill="#6f7038" opacity="0.83"/><ellipse cx="217" cy="165" rx="18" ry="8" fill="#6f7038" opacity="0.66"/><ellipse cx="300" cy="186" rx="33" ry="11" fill="#545a30" opacity="0.79"/><ellipse cx="396" cy="169" rx="32" ry="11" fill="#7c7c3e" opacity="0.64"/><ellipse cx="365" cy="188" rx="19" ry="10" fill="#4a502c" opacity="0.93"/><ellipse cx="341" cy="166" rx="30" ry="6" fill="#6f7038" opacity="0.66"/><ellipse cx="352" cy="193" rx="21" ry="10" fill="#62622f" opacity="0.85"/><ellipse cx="288" cy="172" rx="21" ry="6" fill="#6f7038" opacity="0.64"/><path d="M966 470C960 430 962 400 958 345" stroke="#7a5a38" stroke-width="14" fill="none"/><path d="M958 350L920 300L880 262M958 350L975 290L1000 250M975 300L1040 262L1100 245M930 310L900 300" stroke="#7a5a38" stroke-width="7" fill="none" stroke-linecap="round"/><ellipse cx="1041" cy="201" rx="29" ry="5" fill="#8e8a44" opacity="0.65"/><ellipse cx="856" cy="213" rx="21" ry="10" fill="#a39a52" opacity="0.70"/><ellipse cx="1046" cy="204" rx="32" ry="8" fill="#8e8a44" opacity="0.63"/><ellipse cx="872" cy="219" rx="19" ry="10" fill="#a39a52" opacity="0.84"/><ellipse cx="1050" cy="216" rx="21" ry="7" fill="#9a9048" opacity="0.69"/><ellipse cx="955" cy="203" rx="27" ry="7" fill="#a39a52" opacity="0.93"/><ellipse cx="944" cy="223" rx="32" ry="8" fill="#86803f" opacity="0.89"/><ellipse cx="1043" cy="258" rx="32" ry="8" fill="#62622f" opacity="0.92"/><ellipse cx="951" cy="219" rx="20" ry="9" fill="#8e8a44" opacity="0.63"/><ellipse cx="1085" cy="214" rx="26" ry="7" fill="#9a9048" opacity="0.85"/><ellipse cx="949" cy="242" rx="18" ry="10" fill="#86803f" opacity="0.84"/><ellipse cx="1147" cy="233" rx="27" ry="8" fill="#7c7c3e" opacity="0.83"/><ellipse cx="930" cy="217" rx="22" ry="6" fill="#a39a52" opacity="0.95"/><ellipse cx="1097" cy="238" rx="34" ry="6" fill="#86803f" opacity="0.75"/><ellipse cx="1014" cy="223" rx="27" ry="10" fill="#86803f" opacity="0.76"/><ellipse cx="1073" cy="204" rx="23" ry="7" fill="#a39a52" opacity="0.89"/><ellipse cx="1060" cy="225" rx="19" ry="8" fill="#86803f" opacity="0.87"/><ellipse cx="1008" cy="234" rx="19" ry="10" fill="#7c7c3e" opacity="0.67"/><ellipse cx="912" cy="230" rx="19" ry="7" fill="#86803f" opacity="0.91"/><ellipse cx="941" cy="220" rx="27" ry="8" fill="#8e8a44" opacity="0.85"/><ellipse cx="869" cy="231" rx="20" ry="9" fill="#6f7038" opacity="0.94"/><ellipse cx="1085" cy="221" rx="19" ry="9" fill="#a39a52" opacity="0.94"/><ellipse cx="993" cy="219" rx="25" ry="9" fill="#8e8a44" opacity="0.94"/><ellipse cx="1053" cy="258" rx="16" ry="9" fill="#62622f" opacity="0.73"/><ellipse cx="1145" cy="218" rx="32" ry="6" fill="#9a9048" opacity="0.69"/><ellipse cx="1150" cy="233" rx="24" ry="8" fill="#86803f" opacity="0.64"/><ellipse cx="965" cy="240" rx="19" ry="7" fill="#86803f" opacity="0.61"/><ellipse cx="931" cy="206" rx="27" ry="8" fill="#9a9048" opacity="0.91"/><ellipse cx="904" cy="210" rx="26" ry="11" fill="#9a9048" opacity="0.66"/><ellipse cx="947" cy="219" rx="23" ry="9" fill="#a39a52" opacity="0.88"/><ellipse cx="1108" cy="261" rx="24" ry="8" fill="#4a502c" opacity="0.80"/><ellipse cx="877" cy="234" rx="34" ry="7" fill="#6f7038" opacity="0.93"/><ellipse cx="1136" cy="249" rx="19" ry="8" fill="#4a502c" opacity="0.76"/><ellipse cx="903" cy="255" rx="30" ry="9" fill="#545a30" opacity="0.79"/><ellipse cx="1059" cy="233" rx="15" ry="11" fill="#6f7038" opacity="0.86"/><ellipse cx="1001" cy="217" rx="21" ry="5" fill="#8e8a44" opacity="0.86"/><ellipse cx="1090" cy="249" rx="29" ry="9" fill="#4a502c" opacity="0.64"/><ellipse cx="900" cy="263" rx="25" ry="6" fill="#545a30" opacity="0.70"/><ellipse cx="1071" cy="254" rx="30" ry="11" fill="#4a502c" opacity="0.84"/><ellipse cx="989" cy="221" rx="17" ry="7" fill="#a39a52" opacity="0.68"/><ellipse cx="866" cy="217" rx="22" ry="10" fill="#a39a52" opacity="0.90"/><ellipse cx="990" cy="230" rx="25" ry="9" fill="#86803f" opacity="0.85"/><ellipse cx="908" cy="207" rx="19" ry="6" fill="#8e8a44" opacity="0.65"/><ellipse cx="981" cy="221" rx="15" ry="5" fill="#9a9048" opacity="0.87"/><ellipse cx="1105" cy="253" rx="27" ry="9" fill="#545a30" opacity="0.62"/><ellipse cx="1016" cy="254" rx="28" ry="11" fill="#62622f" opacity="0.63"/><ellipse cx="1109" cy="244" rx="17" ry="9" fill="#7c7c3e" opacity="0.64"/><ellipse cx="1130" cy="257" rx="28" ry="5" fill="#545a30" opacity="0.89"/><ellipse cx="1103" cy="229" rx="20" ry="8" fill="#86803f" opacity="0.67"/><ellipse cx="1094" cy="208" rx="18" ry="9" fill="#a39a52" opacity="0.69"/><ellipse cx="1036" cy="203" rx="31" ry="7" fill="#a39a52" opacity="0.78"/><ellipse cx="886" cy="217" rx="21" ry="6" fill="#8e8a44" opacity="0.93"/><ellipse cx="1161" cy="237" rx="23" ry="10" fill="#6f7038" opacity="0.62"/><ellipse cx="1007" cy="232" rx="24" ry="8" fill="#7c7c3e" opacity="0.69"/><ellipse cx="943" cy="207" rx="17" ry="8" fill="#9a9048" opacity="0.66"/><ellipse cx="1096" cy="227" rx="23" ry="8" fill="#86803f" opacity="0.89"/><ellipse cx="1068" cy="224" rx="32" ry="6" fill="#6f7038" opacity="0.76"/><ellipse cx="1044" cy="207" rx="24" ry="6" fill="#9a9048" opacity="0.81"/><ellipse cx="845" cy="236" rx="29" ry="8" fill="#86803f" opacity="0.88"/><ellipse cx="1029" cy="262" rx="17" ry="11" fill="#4a502c" opacity="0.90"/><ellipse cx="1055" cy="216" rx="20" ry="7" fill="#8e8a44" opacity="0.81"/><ellipse cx="970" cy="218" rx="18" ry="7" fill="#8e8a44" opacity="0.82"/><ellipse cx="1015" cy="262" rx="22" ry="6" fill="#545a30" opacity="0.92"/><ellipse cx="1060" cy="211" rx="24" ry="10" fill="#9a9048" opacity="0.77"/><ellipse cx="887" cy="262" rx="26" ry="10" fill="#62622f" opacity="0.83"/><ellipse cx="1010" cy="224" rx="15" ry="9" fill="#7c7c3e" opacity="0.81"/><ellipse cx="1152" cy="228" rx="16" ry="9" fill="#86803f" opacity="0.87"/><ellipse cx="1145" cy="251" rx="29" ry="6" fill="#62622f" opacity="0.72"/><ellipse cx="1150" cy="225" rx="18" ry="6" fill="#7c7c3e" opacity="0.82"/><ellipse cx="1091" cy="208" rx="26" ry="9" fill="#8e8a44" opacity="0.65"/><ellipse cx="1064" cy="228" rx="29" ry="11" fill="#6f7038" opacity="0.82"/><ellipse cx="1067" cy="222" rx="15" ry="9" fill="#7c7c3e" opacity="0.77"/><ellipse cx="941" cy="218" rx="19" ry="9" fill="#9a9048" opacity="0.73"/><ellipse cx="969" cy="224" rx="17" ry="10" fill="#6f7038" opacity="0.73"/><ellipse cx="1011" cy="202" rx="33" ry="10" fill="#9a9048" opacity="0.65"/><ellipse cx="1095" cy="228" rx="28" ry="8" fill="#7c7c3e" opacity="0.62"/><ellipse cx="1101" cy="253" rx="34" ry="10" fill="#62622f" opacity="0.75"/><ellipse cx="996" cy="259" rx="20" ry="9" fill="#4a502c" opacity="0.70"/><ellipse cx="850" cy="219" rx="24" ry="6" fill="#9a9048" opacity="0.94"/><ellipse cx="1115" cy="226" rx="25" ry="7" fill="#6f7038" opacity="0.90"/><ellipse cx="932" cy="265" rx="20" ry="6" fill="#62622f" opacity="0.62"/><ellipse cx="980" cy="203" rx="18" ry="9" fill="#8e8a44" opacity="0.81"/><ellipse cx="1134" cy="251" rx="26" ry="7" fill="#4a502c" opacity="0.77"/><ellipse cx="929" cy="213" rx="26" ry="6" fill="#a39a52" opacity="0.86"/><ellipse cx="1030" cy="229" rx="18" ry="8" fill="#86803f" opacity="0.68"/><ellipse cx="1030" cy="229" rx="27" ry="10" fill="#86803f" opacity="0.69"/><ellipse cx="983" cy="271" rx="30" ry="9" fill="#4a502c" opacity="0.63"/><ellipse cx="1010" cy="210" rx="17" ry="7" fill="#a39a52" opacity="0.83"/><ellipse cx="944" cy="260" rx="15" ry="9" fill="#62622f" opacity="0.62"/><ellipse cx="963" cy="234" rx="19" ry="5" fill="#86803f" opacity="0.69"/><ellipse cx="965" cy="252" rx="28" ry="10" fill="#62622f" opacity="0.63"/><ellipse cx="1113" cy="254" rx="29" ry="10" fill="#4a502c" opacity="0.68"/><ellipse cx="1029" cy="231" rx="25" ry="7" fill="#86803f" opacity="0.68"/><ellipse cx="963" cy="261" rx="32" ry="6" fill="#62622f" opacity="0.88"/><ellipse cx="1032" cy="239" rx="19" ry="6" fill="#6f7038" opacity="0.85"/><ellipse cx="1014" cy="199" rx="16" ry="5" fill="#9a9048" opacity="0.68"/><ellipse cx="952" cy="252" rx="24" ry="8" fill="#62622f" opacity="0.76"/><ellipse cx="1104" cy="225" rx="25" ry="6" fill="#7c7c3e" opacity="0.89"/><ellipse cx="903" cy="249" rx="25" ry="9" fill="#4a502c" opacity="0.81"/><ellipse cx="947" cy="223" rx="29" ry="7" fill="#7c7c3e" opacity="0.74"/><ellipse cx="957" cy="226" rx="15" ry="7" fill="#86803f" opacity="0.88"/><ellipse cx="895" cy="203" rx="22" ry="7" fill="#8e8a44" opacity="0.85"/><ellipse cx="887" cy="258" rx="27" ry="6" fill="#4a502c" opacity="0.70"/><ellipse cx="963" cy="218" rx="32" ry="6" fill="#8e8a44" opacity="0.80"/><ellipse cx="952" cy="211" rx="15" ry="8" fill="#8e8a44" opacity="0.77"/><ellipse cx="1029" cy="223" rx="24" ry="9" fill="#7c7c3e" opacity="0.82"/><ellipse cx="1082" cy="201" rx="25" ry="11" fill="#a39a52" opacity="0.66"/><ellipse cx="1050" cy="256" rx="26" ry="6" fill="#4a502c" opacity="0.72"/><ellipse cx="925" cy="210" rx="19" ry="11" fill="#a39a52" opacity="0.78"/><ellipse cx="1116" cy="207" rx="21" ry="11" fill="#8e8a44" opacity="0.82"/><ellipse cx="947" cy="237" rx="15" ry="8" fill="#6f7038" opacity="0.67"/><ellipse cx="1024" cy="200" rx="27" ry="8" fill="#8e8a44" opacity="0.77"/><ellipse cx="1100" cy="222" rx="21" ry="6" fill="#9a9048" opacity="0.67"/><ellipse cx="1145" cy="218" rx="22" ry="7" fill="#8e8a44" opacity="0.73"/><ellipse cx="900" cy="256" rx="28" ry="10" fill="#62622f" opacity="0.86"/><ellipse cx="1025" cy="227" rx="18" ry="11" fill="#7c7c3e" opacity="0.78"/><ellipse cx="1118" cy="217" rx="33" ry="11" fill="#a39a52" opacity="0.93"/><ellipse cx="909" cy="209" rx="28" ry="9" fill="#9a9048" opacity="0.67"/><ellipse cx="1043" cy="230" rx="25" ry="11" fill="#86803f" opacity="0.91"/><ellipse cx="1026" cy="245" rx="18" ry="6" fill="#7c7c3e" opacity="0.80"/><ellipse cx="1005" cy="232" rx="16" ry="8" fill="#6f7038" opacity="0.68"/><ellipse cx="1027" cy="254" rx="25" ry="10" fill="#62622f" opacity="0.92"/><ellipse cx="1134" cy="250" rx="31" ry="10" fill="#62622f" opacity="0.93"/><ellipse cx="969" cy="219" rx="31" ry="8" fill="#a39a52" opacity="0.84"/><ellipse cx="908" cy="202" rx="18" ry="6" fill="#9a9048" opacity="0.75"/><ellipse cx="1005" cy="204" rx="21" ry="7" fill="#8e8a44" opacity="0.75"/><ellipse cx="848" cy="224" rx="26" ry="9" fill="#7c7c3e" opacity="0.69"/><ellipse cx="1035" cy="255" rx="27" ry="5" fill="#545a30" opacity="0.62"/><ellipse cx="894" cy="225" rx="33" ry="8" fill="#7c7c3e" opacity="0.62"/><ellipse cx="1080" cy="212" rx="22" ry="7" fill="#8e8a44" opacity="0.65"/><ellipse cx="957" cy="270" rx="19" ry="10" fill="#62622f" opacity="0.65"/><ellipse cx="944" cy="183" rx="25" ry="7" fill="#86803f" opacity="0.64"/><ellipse cx="960" cy="186" rx="26" ry="6" fill="#6f7038" opacity="0.62"/><ellipse cx="971" cy="186" rx="30" ry="10" fill="#6f7038" opacity="0.92"/><ellipse cx="908" cy="181" rx="29" ry="5" fill="#a39a52" opacity="0.67"/><ellipse cx="868" cy="179" rx="24" ry="6" fill="#9a9048" opacity="0.66"/><ellipse cx="984" cy="198" rx="25" ry="6" fill="#4a502c" opacity="0.62"/><ellipse cx="897" cy="180" rx="16" ry="10" fill="#9a9048" opacity="0.61"/><ellipse cx="919" cy="196" rx="29" ry="7" fill="#62622f" opacity="0.81"/><ellipse cx="877" cy="196" rx="22" ry="8" fill="#4a502c" opacity="0.81"/><ellipse cx="962" cy="208" rx="31" ry="10" fill="#545a30" opacity="0.83"/><ellipse cx="902" cy="197" rx="21" ry="9" fill="#4a502c" opacity="0.84"/><ellipse cx="977" cy="189" rx="18" ry="9" fill="#7c7c3e" opacity="0.86"/><ellipse cx="961" cy="185" rx="18" ry="5" fill="#86803f" opacity="0.74"/><ellipse cx="947" cy="200" rx="34" ry="11" fill="#62622f" opacity="0.64"/><ellipse cx="956" cy="186" rx="27" ry="9" fill="#6f7038" opacity="0.95"/><ellipse cx="961" cy="194" rx="22" ry="8" fill="#6f7038" opacity="0.71"/><ellipse cx="948" cy="179" rx="33" ry="9" fill="#9a9048" opacity="0.76"/><ellipse cx="944" cy="179" rx="25" ry="7" fill="#a39a52" opacity="0.79"/><ellipse cx="995" cy="193" rx="29" ry="10" fill="#86803f" opacity="0.81"/><ellipse cx="989" cy="179" rx="27" ry="7" fill="#8e8a44" opacity="0.94"/><ellipse cx="982" cy="203" rx="16" ry="7" fill="#4a502c" opacity="0.89"/><ellipse cx="1048" cy="184" rx="15" ry="9" fill="#86803f" opacity="0.64"/><ellipse cx="1011" cy="172" rx="14" ry="5" fill="#8e8a44" opacity="0.67"/><ellipse cx="1006" cy="185" rx="18" ry="6" fill="#7c7c3e" opacity="0.68"/><ellipse cx="909" cy="174" rx="27" ry="7" fill="#8e8a44" opacity="0.92"/><ellipse cx="949" cy="173" rx="31" ry="11" fill="#9a9048" opacity="0.92"/><ellipse cx="1033" cy="183" rx="20" ry="8" fill="#6f7038" opacity="0.73"/><ellipse cx="937" cy="203" rx="27" ry="10" fill="#62622f" opacity="0.95"/><ellipse cx="946" cy="172" rx="27" ry="7" fill="#9a9048" opacity="0.65"/><ellipse cx="966" cy="192" rx="14" ry="10" fill="#86803f" opacity="0.73"/><ellipse cx="1022" cy="199" rx="30" ry="9" fill="#545a30" opacity="0.89"/><ellipse cx="963" cy="181" rx="30" ry="8" fill="#8e8a44" opacity="0.75"/><ellipse cx="914" cy="206" rx="14" ry="10" fill="#545a30" opacity="0.85"/><ellipse cx="966" cy="189" rx="30" ry="7" fill="#7c7c3e" opacity="0.75"/><ellipse cx="967" cy="183" rx="20" ry="7" fill="#6f7038" opacity="0.68"/><ellipse cx="925" cy="201" rx="34" ry="10" fill="#545a30" opacity="0.93"/><ellipse cx="1014" cy="194" rx="22" ry="8" fill="#86803f" opacity="0.94"/><ellipse cx="926" cy="200" rx="17" ry="6" fill="#545a30" opacity="0.68"/><ellipse cx="1027" cy="172" rx="21" ry="7" fill="#8e8a44" opacity="0.66"/><ellipse cx="966" cy="192" rx="30" ry="9" fill="#86803f" opacity="0.67"/><ellipse cx="1016" cy="194" rx="19" ry="9" fill="#86803f" opacity="0.60"/><ellipse cx="1017" cy="174" rx="31" ry="10" fill="#a39a52" opacity="0.90"/><ellipse cx="913" cy="170" rx="14" ry="7" fill="#8e8a44" opacity="0.79"/><ellipse cx="1062" cy="240" rx="22" ry="7" fill="#7c7c3e" opacity="0.76"/><ellipse cx="1134" cy="235" rx="15" ry="6" fill="#6f7038" opacity="0.63"/><ellipse cx="1127" cy="245" rx="18" ry="9" fill="#86803f" opacity="0.63"/><ellipse cx="1160" cy="249" rx="26" ry="10" fill="#62622f" opacity="0.89"/><ellipse cx="1079" cy="255" rx="23" ry="10" fill="#62622f" opacity="0.82"/><ellipse cx="1117" cy="245" rx="29" ry="9" fill="#7c7c3e" opacity="0.92"/><ellipse cx="1113" cy="260" rx="19" ry="9" fill="#62622f" opacity="0.90"/><ellipse cx="1129" cy="229" rx="21" ry="11" fill="#9a9048" opacity="0.90"/><ellipse cx="1139" cy="246" rx="32" ry="9" fill="#7c7c3e" opacity="0.62"/><ellipse cx="1086" cy="234" rx="27" ry="9" fill="#6f7038" opacity="0.66"/><ellipse cx="1117" cy="245" rx="17" ry="10" fill="#7c7c3e" opacity="0.82"/><ellipse cx="1074" cy="228" rx="16" ry="7" fill="#8e8a44" opacity="0.63"/><ellipse cx="1088" cy="233" rx="21" ry="8" fill="#86803f" opacity="0.93"/><ellipse cx="1088" cy="258" rx="32" ry="6" fill="#4a502c" opacity="0.73"/><ellipse cx="1165" cy="224" rx="17" ry="11" fill="#8e8a44" opacity="0.74"/><ellipse cx="1132" cy="250" rx="14" ry="10" fill="#4a502c" opacity="0.84"/><ellipse cx="1091" cy="223" rx="18" ry="5" fill="#9a9048" opacity="0.61"/><ellipse cx="1114" cy="228" rx="22" ry="7" fill="#9a9048" opacity="0.73"/><ellipse cx="1130" cy="260" rx="16" ry="8" fill="#545a30" opacity="0.82"/><ellipse cx="1091" cy="239" rx="27" ry="7" fill="#6f7038" opacity="0.70"/><ellipse cx="1075" cy="225" rx="17" ry="10" fill="#8e8a44" opacity="0.67"/><ellipse cx="1150" cy="240" rx="18" ry="9" fill="#86803f" opacity="0.89"/><ellipse cx="1123" cy="232" rx="30" ry="11" fill="#86803f" opacity="0.69"/><ellipse cx="1135" cy="231" rx="31" ry="8" fill="#7c7c3e" opacity="0.63"/><ellipse cx="1072" cy="223" rx="30" ry="7" fill="#8e8a44" opacity="0.86"/><ellipse cx="1066" cy="231" rx="16" ry="8" fill="#7c7c3e" opacity="0.76"/><ellipse cx="1077" cy="239" rx="15" ry="9" fill="#86803f" opacity="0.80"/><ellipse cx="1101" cy="244" rx="33" ry="6" fill="#7c7c3e" opacity="0.71"/><ellipse cx="1060" cy="228" rx="17" ry="9" fill="#a39a52" opacity="0.95"/><ellipse cx="880" cy="257" rx="23" ry="7" fill="#4a502c" opacity="0.73"/><ellipse cx="895" cy="244" rx="31" ry="6" fill="#6f7038" opacity="0.89"/><ellipse cx="854" cy="218" rx="21" ry="9" fill="#8e8a44" opacity="0.95"/><ellipse cx="878" cy="218" rx="20" ry="5" fill="#a39a52" opacity="0.68"/><ellipse cx="913" cy="237" rx="15" ry="8" fill="#86803f" opacity="0.93"/><ellipse cx="891" cy="224" rx="24" ry="10" fill="#a39a52" opacity="0.71"/><ellipse cx="836" cy="233" rx="25" ry="6" fill="#7c7c3e" opacity="0.68"/><ellipse cx="931" cy="239" rx="23" ry="6" fill="#7c7c3e" opacity="0.76"/><ellipse cx="871" cy="230" rx="27" ry="9" fill="#a39a52" opacity="0.77"/><ellipse cx="893" cy="244" rx="26" ry="11" fill="#7c7c3e" opacity="0.66"/><ellipse cx="910" cy="248" rx="22" ry="8" fill="#545a30" opacity="0.79"/><ellipse cx="866" cy="236" rx="33" ry="11" fill="#7c7c3e" opacity="0.88"/><ellipse cx="906" cy="226" rx="24" ry="6" fill="#9a9048" opacity="0.84"/><ellipse cx="927" cy="226" rx="29" ry="7" fill="#a39a52" opacity="0.64"/><ellipse cx="879" cy="227" rx="32" ry="9" fill="#9a9048" opacity="0.72"/><ellipse cx="884" cy="224" rx="22" ry="11" fill="#9a9048" opacity="0.75"/><ellipse cx="897" cy="223" rx="22" ry="5" fill="#a39a52" opacity="0.89"/><ellipse cx="869" cy="242" rx="24" ry="8" fill="#86803f" opacity="0.77"/><ellipse cx="837" cy="242" rx="26" ry="11" fill="#7c7c3e" opacity="0.76"/><ellipse cx="869" cy="246" rx="31" ry="8" fill="#6f7038" opacity="0.91"/><ellipse cx="899" cy="233" rx="17" ry="9" fill="#6f7038" opacity="0.85"/><ellipse cx="853" cy="221" rx="22" ry="9" fill="#a39a52" opacity="0.88"/><ellipse cx="859" cy="238" rx="23" ry="6" fill="#7c7c3e" opacity="0.73"/><ellipse cx="853" cy="218" rx="30" ry="10" fill="#a39a52" opacity="0.60"/><ellipse cx="850" cy="249" rx="21" ry="7" fill="#4a502c" opacity="0.85"/><ellipse cx="861" cy="232" rx="34" ry="6" fill="#6f7038" opacity="0.68"/><path d="M1268 448L1266 370L1235 350M1266 372L1300 350" stroke="#7a5a38" stroke-width="7" fill="none"/><ellipse cx="1253" cy="343" rx="15" ry="10" fill="#86803f" opacity="0.63"/><ellipse cx="1196" cy="329" rx="15" ry="8" fill="#9a9048" opacity="0.62"/><ellipse cx="1307" cy="344" rx="16" ry="6" fill="#86803f" opacity="0.82"/><ellipse cx="1322" cy="333" rx="15" ry="6" fill="#6f7038" opacity="0.79"/><ellipse cx="1298" cy="347" rx="16" ry="7" fill="#62622f" opacity="0.89"/><ellipse cx="1291" cy="351" rx="18" ry="6" fill="#62622f" opacity="0.85"/><ellipse cx="1207" cy="332" rx="28" ry="8" fill="#8e8a44" opacity="0.71"/><ellipse cx="1220" cy="331" rx="19" ry="6" fill="#8e8a44" opacity="0.87"/><ellipse cx="1301" cy="342" rx="32" ry="9" fill="#6f7038" opacity="0.70"/><ellipse cx="1288" cy="336" rx="17" ry="7" fill="#6f7038" opacity="0.93"/><ellipse cx="1193" cy="347" rx="29" ry="8" fill="#545a30" opacity="0.91"/><ellipse cx="1239" cy="353" rx="24" ry="10" fill="#62622f" opacity="0.62"/><ellipse cx="1297" cy="343" rx="27" ry="5" fill="#86803f" opacity="0.85"/><ellipse cx="1215" cy="323" rx="20" ry="7" fill="#8e8a44" opacity="0.83"/><ellipse cx="1317" cy="339" rx="26" ry="8" fill="#7c7c3e" opacity="0.68"/><ellipse cx="1249" cy="355" rx="22" ry="10" fill="#4a502c" opacity="0.63"/><ellipse cx="1209" cy="342" rx="30" ry="10" fill="#7c7c3e" opacity="0.70"/><ellipse cx="1226" cy="343" rx="33" ry="6" fill="#6f7038" opacity="0.66"/><ellipse cx="1269" cy="346" rx="31" ry="6" fill="#4a502c" opacity="0.70"/><ellipse cx="1300" cy="349" rx="25" ry="11" fill="#62622f" opacity="0.84"/><ellipse cx="1202" cy="336" rx="29" ry="8" fill="#86803f" opacity="0.90"/><ellipse cx="1329" cy="333" rx="22" ry="7" fill="#86803f" opacity="0.64"/><ellipse cx="1254" cy="335" rx="34" ry="8" fill="#7c7c3e" opacity="0.64"/><ellipse cx="1248" cy="334" rx="17" ry="6" fill="#86803f" opacity="0.73"/><ellipse cx="1342" cy="340" rx="22" ry="9" fill="#86803f" opacity="0.93"/><ellipse cx="1222" cy="330" rx="31" ry="11" fill="#9a9048" opacity="0.76"/><ellipse cx="1246" cy="338" rx="29" ry="9" fill="#7c7c3e" opacity="0.77"/><ellipse cx="1245" cy="326" rx="33" ry="8" fill="#9a9048" opacity="0.65"/><ellipse cx="1256" cy="336" rx="20" ry="9" fill="#86803f" opacity="0.63"/><ellipse cx="1297" cy="327" rx="21" ry="6" fill="#9a9048" opacity="0.79"/><ellipse cx="1201" cy="337" rx="30" ry="11" fill="#86803f" opacity="0.90"/><ellipse cx="1291" cy="322" rx="30" ry="6" fill="#a39a52" opacity="0.77"/><ellipse cx="1255" cy="320" rx="23" ry="6" fill="#8e8a44" opacity="0.81"/></g><g fill="none" stroke-linecap="round" filter="url(#p3f)"><path d="M208 621Q197 584 179 548" stroke="#efd592" stroke-width="2.8" opacity="0.61"/><path d="M700 497Q700 481 698 465" stroke="#efd592" stroke-width="2.1" opacity="0.56"/><path d="M82 726Q96 682 119 638" stroke="#f3e0a8" stroke-width="3.4" opacity="0.71"/><path d="M1347 654Q1354 624 1367 594" stroke="#a8823e" stroke-width="3.0" opacity="0.64"/><path d="M788 721Q794 675 803 628" stroke="#efd592" stroke-width="3.4" opacity="0.71"/><path d="M514 767Q498 719 474 671" stroke="#f3e0a8" stroke-width="3.7" opacity="0.73"/><path d="M734 701Q733 652 731 603" stroke="#f0dba0" stroke-width="3.3" opacity="0.61"/><path d="M248 586Q238 550 220 515" stroke="#a8823e" stroke-width="2.6" opacity="0.69"/><path d="M1007 877Q1027 824 1055 771" stroke="#efd592" stroke-width="4.3" opacity="0.68"/><path d="M472 547Q470 510 467 474" stroke="#efd592" stroke-width="2.4" opacity="0.79"/><path d="M1208 736Q1214 693 1224 649" stroke="#f0dba0" stroke-width="3.5" opacity="0.71"/><path d="M1159 682Q1158 632 1157 582" stroke="#efd592" stroke-width="3.2" opacity="0.48"/><path d="M893 796Q908 736 929 676" stroke="#a8823e" stroke-width="3.8" opacity="0.77"/><path d="M479 882Q471 813 461 743" stroke="#efd592" stroke-width="4.3" opacity="0.67"/><path d="M397 571Q394 536 390 501" stroke="#f0dba0" stroke-width="2.6" opacity="0.49"/><path d="M758 679Q769 632 786 585" stroke="#a8823e" stroke-width="3.2" opacity="0.77"/><path d="M942 929Q929 866 911 802" stroke="#efd592" stroke-width="4.5" opacity="0.53"/><path d="M322 578Q324 546 327 515" stroke="#a8823e" stroke-width="2.6" opacity="0.58"/><path d="M738 538Q735 508 728 479" stroke="#f6e6b8" stroke-width="2.4" opacity="0.76"/><path d="M852 710Q837 665 815 621" stroke="#8a6a36" stroke-width="3.3" opacity="0.63"/><path d="M665 653Q657 617 644 581" stroke="#c09a52" stroke-width="3.0" opacity="0.65"/><path d="M829 521Q830 502 831 482" stroke="#efd592" stroke-width="2.3" opacity="0.88"/><path d="M97 755Q93 711 87 667" stroke="#a8823e" stroke-width="3.6" opacity="0.88"/><path d="M654 750Q654 708 653 665" stroke="#f0dba0" stroke-width="3.6" opacity="0.67"/><path d="M199 615Q205 576 216 537" stroke="#f0dba0" stroke-width="2.8" opacity="0.82"/><path d="M32 545Q33 508 34 472" stroke="#f6e6b8" stroke-width="2.4" opacity="0.76"/><path d="M1046 895Q1053 835 1062 776" stroke="#efd592" stroke-width="4.4" opacity="0.76"/><path d="M506 591Q510 565 519 538" stroke="#e6c87e" stroke-width="2.7" opacity="0.74"/><path d="M1088 755Q1076 703 1059 651" stroke="#c09a52" stroke-width="3.6" opacity="0.82"/><path d="M313 814Q307 759 298 703" stroke="#f3e0a8" stroke-width="3.9" opacity="0.90"/><path d="M652 837Q656 785 662 733" stroke="#e6c87e" stroke-width="4.0" opacity="0.65"/><path d="M1363 906Q1356 833 1346 761" stroke="#c09a52" stroke-width="4.4" opacity="0.50"/><path d="M466 689Q480 650 502 611" stroke="#f3e0a8" stroke-width="3.2" opacity="0.67"/><path d="M1104 774Q1108 730 1116 686" stroke="#8a6a36" stroke-width="3.7" opacity="0.80"/><path d="M660 819Q670 770 686 721" stroke="#e6c87e" stroke-width="3.9" opacity="0.49"/><path d="M996 910Q1008 847 1024 784" stroke="#efd592" stroke-width="4.4" opacity="0.78"/><path d="M175 549Q180 528 192 506" stroke="#f6e6b8" stroke-width="2.4" opacity="0.73"/><path d="M655 747Q640 693 620 639" stroke="#f6e6b8" stroke-width="3.5" opacity="0.46"/><path d="M1002 842Q1012 792 1025 741" stroke="#f6e6b8" stroke-width="4.1" opacity="0.65"/><path d="M1140 875Q1130 820 1115 765" stroke="#a8823e" stroke-width="4.3" opacity="0.68"/><path d="M450 825Q464 770 484 715" stroke="#f3e0a8" stroke-width="4.0" opacity="0.86"/><path d="M632 635Q643 598 660 561" stroke="#8a6a36" stroke-width="2.9" opacity="0.82"/><path d="M180 878Q181 822 182 766" stroke="#f0dba0" stroke-width="4.3" opacity="0.80"/><path d="M1071 753Q1060 712 1043 671" stroke="#efd592" stroke-width="3.6" opacity="0.70"/><path d="M715 622Q722 585 734 549" stroke="#efd592" stroke-width="2.8" opacity="0.85"/><path d="M264 496Q262 482 253 467" stroke="#f0dba0" stroke-width="2.1" opacity="0.70"/><path d="M1259 823Q1264 768 1270 713" stroke="#c09a52" stroke-width="4.0" opacity="0.76"/><path d="M736 680Q748 642 768 603" stroke="#a8823e" stroke-width="3.2" opacity="0.87"/><path d="M280 885Q276 823 270 762" stroke="#8a6a36" stroke-width="4.3" opacity="0.65"/><path d="M332 504Q333 487 337 470" stroke="#efd592" stroke-width="2.2" opacity="0.85"/><path d="M988 542Q982 512 969 483" stroke="#f6e6b8" stroke-width="2.4" opacity="0.89"/><path d="M1314 572Q1314 542 1314 513" stroke="#c09a52" stroke-width="2.6" opacity="0.52"/><path d="M712 671Q704 634 691 597" stroke="#e6c87e" stroke-width="3.1" opacity="0.49"/><path d="M466 640Q471 603 480 566" stroke="#8a6a36" stroke-width="2.9" opacity="0.60"/><path d="M707 760Q721 721 743 683" stroke="#c09a52" stroke-width="3.6" opacity="0.89"/><path d="M366 519Q368 501 375 484" stroke="#a8823e" stroke-width="2.3" opacity="0.79"/><path d="M1172 851Q1193 794 1221 736" stroke="#8a6a36" stroke-width="4.1" opacity="0.52"/><path d="M787 897Q767 834 739 772" stroke="#f3e0a8" stroke-width="4.4" opacity="0.81"/><path d="M1235 555Q1229 532 1214 509" stroke="#efd592" stroke-width="2.5" opacity="0.81"/><path d="M1182 509Q1184 492 1193 476" stroke="#f0dba0" stroke-width="2.2" opacity="0.46"/><path d="M577 932Q584 858 593 784" stroke="#f3e0a8" stroke-width="4.6" opacity="0.69"/><path d="M151 581Q145 557 130 532" stroke="#c09a52" stroke-width="2.6" opacity="0.87"/><path d="M733 762Q731 717 728 672" stroke="#f6e6b8" stroke-width="3.6" opacity="0.57"/><path d="M1372 844Q1356 798 1330 752" stroke="#c09a52" stroke-width="4.1" opacity="0.68"/><path d="M617 584Q620 549 626 514" stroke="#f0dba0" stroke-width="2.6" opacity="0.70"/><path d="M1339 883Q1327 826 1309 769" stroke="#c09a52" stroke-width="4.3" opacity="0.60"/><path d="M975 857Q971 795 965 733" stroke="#e6c87e" stroke-width="4.2" opacity="0.89"/><path d="M20 859Q37 800 61 742" stroke="#8a6a36" stroke-width="4.2" opacity="0.52"/><path d="M1161 509Q1164 478 1171 447" stroke="#a8823e" stroke-width="2.2" opacity="0.72"/><path d="M62 792Q55 745 43 698" stroke="#f3e0a8" stroke-width="3.8" opacity="0.57"/><path d="M1342 917Q1329 852 1312 787" stroke="#a8823e" stroke-width="4.5" opacity="0.55"/><path d="M463 555Q460 533 454 511" stroke="#c09a52" stroke-width="2.5" opacity="0.56"/><path d="M125 831Q109 771 86 712" stroke="#f3e0a8" stroke-width="4.0" opacity="0.63"/><path d="M869 609Q876 584 891 558" stroke="#f6e6b8" stroke-width="2.8" opacity="0.75"/><path d="M1213 803Q1207 751 1197 699" stroke="#f0dba0" stroke-width="3.8" opacity="0.52"/><path d="M888 807Q899 762 916 717" stroke="#8a6a36" stroke-width="3.9" opacity="0.78"/><path d="M192 848Q192 788 193 729" stroke="#f3e0a8" stroke-width="4.1" opacity="0.82"/><path d="M1232 742Q1239 691 1250 640" stroke="#c09a52" stroke-width="3.5" opacity="0.49"/><path d="M879 489Q877 458 872 427" stroke="#f0dba0" stroke-width="2.1" opacity="0.70"/><path d="M864 762Q864 708 863 655" stroke="#f3e0a8" stroke-width="3.6" opacity="0.66"/><path d="M1287 503Q1279 473 1264 444" stroke="#efd592" stroke-width="2.2" opacity="0.79"/><path d="M1117 690Q1107 642 1093 594" stroke="#c09a52" stroke-width="3.2" opacity="0.55"/><path d="M635 772Q618 719 592 665" stroke="#a8823e" stroke-width="3.7" opacity="0.80"/><path d="M887 757Q877 716 860 676" stroke="#a8823e" stroke-width="3.6" opacity="0.74"/><path d="M857 792Q857 745 856 698" stroke="#f0dba0" stroke-width="3.8" opacity="0.57"/><path d="M955 782Q947 728 934 673" stroke="#a8823e" stroke-width="3.7" opacity="0.66"/><path d="M164 687Q153 639 137 591" stroke="#efd592" stroke-width="3.2" opacity="0.87"/><path d="M633 478Q640 453 656 428" stroke="#f0dba0" stroke-width="2.0" opacity="0.90"/><path d="M1265 650Q1251 606 1230 563" stroke="#efd592" stroke-width="3.0" opacity="0.51"/><path d="M1315 714Q1323 676 1337 639" stroke="#a8823e" stroke-width="3.4" opacity="0.85"/><path d="M319 797Q319 736 318 675" stroke="#f3e0a8" stroke-width="3.8" opacity="0.52"/><path d="M941 912Q951 849 966 787" stroke="#8a6a36" stroke-width="4.5" opacity="0.60"/><path d="M1160 617Q1163 590 1172 564" stroke="#8a6a36" stroke-width="2.8" opacity="0.50"/><path d="M984 901Q972 831 957 761" stroke="#e6c87e" stroke-width="4.4" opacity="0.48"/><path d="M1201 651Q1209 622 1224 592" stroke="#a8823e" stroke-width="3.0" opacity="0.83"/><path d="M71 600Q75 564 80 527" stroke="#f6e6b8" stroke-width="2.7" opacity="0.56"/><path d="M705 594Q703 566 699 538" stroke="#8a6a36" stroke-width="2.7" opacity="0.85"/><path d="M871 848Q892 786 922 725" stroke="#c09a52" stroke-width="4.1" opacity="0.77"/><path d="M1011 493Q1013 471 1021 449" stroke="#a8823e" stroke-width="2.1" opacity="0.67"/><path d="M759 894Q755 836 750 779" stroke="#a8823e" stroke-width="4.4" opacity="0.58"/><path d="M1347 814Q1353 763 1362 712" stroke="#a8823e" stroke-width="3.9" opacity="0.67"/><path d="M165 781Q149 730 124 679" stroke="#f0dba0" stroke-width="3.7" opacity="0.70"/><path d="M459 681Q457 634 453 587" stroke="#c09a52" stroke-width="3.2" opacity="0.56"/><path d="M767 551Q765 525 761 499" stroke="#c09a52" stroke-width="2.5" opacity="0.85"/><path d="M570 819Q571 764 572 709" stroke="#8a6a36" stroke-width="3.9" opacity="0.57"/><path d="M687 820Q681 763 673 706" stroke="#c09a52" stroke-width="3.9" opacity="0.49"/><path d="M531 887Q527 822 523 756" stroke="#a8823e" stroke-width="4.3" opacity="0.83"/><path d="M30 876Q38 823 50 770" stroke="#f0dba0" stroke-width="4.3" opacity="0.89"/><path d="M101 698Q116 650 140 602" stroke="#f0dba0" stroke-width="3.3" opacity="0.89"/><path d="M150 586Q151 559 152 532" stroke="#efd592" stroke-width="2.6" opacity="0.87"/><path d="M893 806Q891 746 889 687" stroke="#f3e0a8" stroke-width="3.9" opacity="0.45"/><path d="M786 528Q787 510 793 491" stroke="#f6e6b8" stroke-width="2.3" opacity="0.73"/><path d="M604 716Q589 668 568 621" stroke="#a8823e" stroke-width="3.4" opacity="0.69"/><path d="M536 741Q539 698 543 654" stroke="#f3e0a8" stroke-width="3.5" opacity="0.69"/><path d="M384 933Q401 872 423 811" stroke="#c09a52" stroke-width="4.6" opacity="0.66"/><path d="M341 579Q346 540 356 500" stroke="#a8823e" stroke-width="2.6" opacity="0.47"/><path d="M1221 560Q1213 530 1197 499" stroke="#c09a52" stroke-width="2.5" opacity="0.75"/><path d="M313 900Q306 845 297 789" stroke="#8a6a36" stroke-width="4.4" opacity="0.61"/><path d="M9 654Q17 620 31 586" stroke="#efd592" stroke-width="3.0" opacity="0.54"/><path d="M430 921Q415 851 396 781" stroke="#c09a52" stroke-width="4.5" opacity="0.57"/><path d="M150 884Q156 819 163 755" stroke="#c09a52" stroke-width="4.3" opacity="0.67"/><path d="M78 893Q98 833 126 772" stroke="#f3e0a8" stroke-width="4.4" opacity="0.55"/><path d="M196 923Q177 869 151 815" stroke="#8a6a36" stroke-width="4.5" opacity="0.65"/><path d="M434 801Q420 757 398 713" stroke="#f6e6b8" stroke-width="3.8" opacity="0.60"/><path d="M1292 556Q1282 525 1264 494" stroke="#8a6a36" stroke-width="2.5" opacity="0.83"/><path d="M611 928Q592 872 566 816" stroke="#efd592" stroke-width="4.5" opacity="0.61"/><path d="M171 914Q154 843 132 772" stroke="#e6c87e" stroke-width="4.5" opacity="0.80"/><path d="M1109 614Q1113 586 1120 558" stroke="#c09a52" stroke-width="2.8" opacity="0.62"/><path d="M266 898Q284 840 309 782" stroke="#f3e0a8" stroke-width="4.4" opacity="0.73"/><path d="M863 585Q861 554 856 523" stroke="#f0dba0" stroke-width="2.6" opacity="0.48"/><path d="M355 898Q375 834 403 770" stroke="#e6c87e" stroke-width="4.4" opacity="0.61"/><path d="M1316 626Q1320 598 1329 569" stroke="#e6c87e" stroke-width="2.9" opacity="0.87"/><path d="M996 608Q1003 573 1016 538" stroke="#efd592" stroke-width="2.8" opacity="0.46"/><path d="M656 579Q668 542 688 505" stroke="#8a6a36" stroke-width="2.6" opacity="0.81"/><path d="M1124 895Q1124 837 1124 780" stroke="#f3e0a8" stroke-width="4.4" opacity="0.81"/><path d="M1135 813Q1140 753 1147 693" stroke="#e6c87e" stroke-width="3.9" opacity="0.84"/><path d="M1082 684Q1082 640 1083 596" stroke="#8a6a36" stroke-width="3.2" opacity="0.79"/><path d="M89 585Q90 560 92 536" stroke="#e6c87e" stroke-width="2.6" opacity="0.52"/><path d="M145 668Q148 635 153 602" stroke="#c09a52" stroke-width="3.1" opacity="0.49"/><path d="M979 702Q972 660 959 617" stroke="#8a6a36" stroke-width="3.3" opacity="0.66"/><path d="M324 884Q337 823 355 762" stroke="#efd592" stroke-width="4.3" opacity="0.80"/><path d="M386 607Q381 577 372 546" stroke="#a8823e" stroke-width="2.8" opacity="0.54"/><path d="M339 585Q344 560 357 535" stroke="#c09a52" stroke-width="2.6" opacity="0.60"/><path d="M1370 654Q1362 616 1351 577" stroke="#efd592" stroke-width="3.0" opacity="0.74"/><path d="M141 931Q157 867 179 802" stroke="#f0dba0" stroke-width="4.6" opacity="0.86"/><path d="M405 489Q404 473 396 457" stroke="#c09a52" stroke-width="2.1" opacity="0.87"/><path d="M1195 643Q1189 606 1179 570" stroke="#f3e0a8" stroke-width="3.0" opacity="0.50"/><path d="M856 747Q852 703 845 660" stroke="#f6e6b8" stroke-width="3.5" opacity="0.47"/><path d="M53 935Q75 868 105 801" stroke="#f3e0a8" stroke-width="4.6" opacity="0.82"/><path d="M513 660Q501 621 482 581" stroke="#f3e0a8" stroke-width="3.1" opacity="0.81"/><path d="M87 725Q85 685 80 646" stroke="#f6e6b8" stroke-width="3.4" opacity="0.74"/><path d="M226 512Q224 484 221 455" stroke="#a8823e" stroke-width="2.2" opacity="0.75"/><path d="M71 664Q83 622 101 580" stroke="#8a6a36" stroke-width="3.1" opacity="0.64"/><path d="M1375 872Q1362 815 1344 758" stroke="#8a6a36" stroke-width="4.2" opacity="0.54"/><path d="M1244 473Q1247 453 1256 434" stroke="#8a6a36" stroke-width="2.0" opacity="0.71"/><path d="M1067 640Q1058 610 1042 581" stroke="#f6e6b8" stroke-width="2.9" opacity="0.74"/><path d="M123 893Q116 828 108 763" stroke="#f6e6b8" stroke-width="4.4" opacity="0.52"/><path d="M719 602Q708 562 690 523" stroke="#f0dba0" stroke-width="2.7" opacity="0.79"/><path d="M1110 838Q1124 786 1143 734" stroke="#f3e0a8" stroke-width="4.0" opacity="0.89"/><path d="M74 694Q70 644 63 593" stroke="#f6e6b8" stroke-width="3.2" opacity="0.74"/><path d="M857 868Q843 808 823 747" stroke="#f0dba0" stroke-width="4.2" opacity="0.53"/><path d="M552 571Q549 540 545 508" stroke="#efd592" stroke-width="2.6" opacity="0.52"/><path d="M1126 921Q1143 864 1167 807" stroke="#f3e0a8" stroke-width="4.5" opacity="0.75"/><path d="M538 621Q546 587 560 553" stroke="#a8823e" stroke-width="2.8" opacity="0.74"/><path d="M344 613Q341 580 336 547" stroke="#f0dba0" stroke-width="2.8" opacity="0.53"/><path d="M1361 472Q1360 451 1359 430" stroke="#f0dba0" stroke-width="2.0" opacity="0.83"/><path d="M552 847Q547 796 539 745" stroke="#e6c87e" stroke-width="4.1" opacity="0.49"/><path d="M704 676Q707 642 712 608" stroke="#efd592" stroke-width="3.1" opacity="0.86"/><path d="M994 616Q998 588 1007 560" stroke="#8a6a36" stroke-width="2.8" opacity="0.74"/><path d="M36 835Q40 785 46 735" stroke="#efd592" stroke-width="4.0" opacity="0.54"/><path d="M679 927Q702 857 734 787" stroke="#f6e6b8" stroke-width="4.5" opacity="0.76"/><path d="M305 805Q310 745 317 685" stroke="#a8823e" stroke-width="3.9" opacity="0.52"/><path d="M379 887Q361 822 336 757" stroke="#f0dba0" stroke-width="4.3" opacity="0.54"/><path d="M698 592Q690 565 674 537" stroke="#f6e6b8" stroke-width="2.7" opacity="0.63"/><path d="M384 766Q380 718 373 671" stroke="#a8823e" stroke-width="3.6" opacity="0.50"/><path d="M878 717Q889 676 907 635" stroke="#efd592" stroke-width="3.4" opacity="0.56"/><path d="M1182 719Q1177 669 1170 619" stroke="#8a6a36" stroke-width="3.4" opacity="0.90"/><path d="M497 738Q495 686 492 633" stroke="#f6e6b8" stroke-width="3.5" opacity="0.73"/><path d="M409 915Q399 850 387 785" stroke="#e6c87e" stroke-width="4.5" opacity="0.78"/><path d="M306 817Q311 765 318 713" stroke="#8a6a36" stroke-width="3.9" opacity="0.68"/><path d="M182 886Q189 829 198 771" stroke="#f3e0a8" stroke-width="4.3" opacity="0.47"/><path d="M419 734Q420 686 422 638" stroke="#8a6a36" stroke-width="3.5" opacity="0.71"/><path d="M282 744Q281 693 279 642" stroke="#f6e6b8" stroke-width="3.5" opacity="0.46"/><path d="M976 843Q958 789 932 736" stroke="#f6e6b8" stroke-width="4.1" opacity="0.84"/><path d="M555 834Q536 785 509 737" stroke="#e6c87e" stroke-width="4.0" opacity="0.72"/><path d="M831 739Q830 691 830 642" stroke="#f6e6b8" stroke-width="3.5" opacity="0.86"/><path d="M734 490Q731 469 723 448" stroke="#f3e0a8" stroke-width="2.1" opacity="0.86"/><path d="M845 519Q840 491 830 463" stroke="#8a6a36" stroke-width="2.3" opacity="0.54"/><path d="M700 753Q711 703 729 653" stroke="#f6e6b8" stroke-width="3.6" opacity="0.68"/><path d="M864 500Q868 467 877 435" stroke="#f0dba0" stroke-width="2.2" opacity="0.77"/><path d="M1165 473Q1165 447 1164 421" stroke="#f0dba0" stroke-width="2.0" opacity="0.53"/><path d="M361 933Q341 867 314 801" stroke="#a8823e" stroke-width="4.6" opacity="0.77"/><path d="M764 594Q770 562 781 531" stroke="#a8823e" stroke-width="2.7" opacity="0.58"/><path d="M1234 902Q1234 845 1235 787" stroke="#f6e6b8" stroke-width="4.4" opacity="0.57"/><path d="M1027 580Q1033 541 1044 502" stroke="#e6c87e" stroke-width="2.6" opacity="0.54"/><path d="M830 651Q838 615 853 580" stroke="#f0dba0" stroke-width="3.0" opacity="0.66"/><path d="M9 717Q20 682 39 648" stroke="#c09a52" stroke-width="3.4" opacity="0.71"/><path d="M293 613Q282 578 265 543" stroke="#f6e6b8" stroke-width="2.8" opacity="0.52"/><path d="M147 483Q144 453 139 423" stroke="#f6e6b8" stroke-width="2.1" opacity="0.77"/><path d="M191 484Q185 461 171 438" stroke="#efd592" stroke-width="2.1" opacity="0.78"/><path d="M815 501Q818 480 827 459" stroke="#efd592" stroke-width="2.2" opacity="0.85"/><path d="M982 821Q972 768 957 716" stroke="#c09a52" stroke-width="4.0" opacity="0.50"/><path d="M1170 486Q1172 458 1177 430" stroke="#a8823e" stroke-width="2.1" opacity="0.66"/><path d="M1093 532Q1089 502 1082 473" stroke="#e6c87e" stroke-width="2.3" opacity="0.64"/><path d="M354 480Q356 462 361 444" stroke="#e6c87e" stroke-width="2.1" opacity="0.86"/><path d="M831 828Q822 772 809 717" stroke="#f3e0a8" stroke-width="4.0" opacity="0.81"/><path d="M716 485Q716 469 715 453" stroke="#f3e0a8" stroke-width="2.1" opacity="0.69"/><path d="M1190 571Q1194 548 1204 524" stroke="#f6e6b8" stroke-width="2.6" opacity="0.65"/><path d="M398 713Q382 667 359 621" stroke="#e6c87e" stroke-width="3.4" opacity="0.67"/><path d="M1100 699Q1099 660 1099 621" stroke="#e6c87e" stroke-width="3.3" opacity="0.88"/><path d="M798 710Q806 672 820 634" stroke="#c09a52" stroke-width="3.3" opacity="0.67"/><path d="M878 521Q881 503 888 484" stroke="#efd592" stroke-width="2.3" opacity="0.73"/><path d="M554 635Q563 602 578 568" stroke="#efd592" stroke-width="2.9" opacity="0.64"/><path d="M513 770Q511 723 507 675" stroke="#f6e6b8" stroke-width="3.7" opacity="0.62"/><path d="M322 881Q324 819 326 758" stroke="#f3e0a8" stroke-width="4.3" opacity="0.61"/><path d="M214 622Q219 580 227 538" stroke="#e6c87e" stroke-width="2.8" opacity="0.53"/><path d="M1067 674Q1056 633 1039 593" stroke="#f0dba0" stroke-width="3.1" opacity="0.74"/><path d="M701 794Q710 746 723 697" stroke="#f6e6b8" stroke-width="3.8" opacity="0.78"/><path d="M998 923Q990 856 979 788" stroke="#c09a52" stroke-width="4.5" opacity="0.60"/><path d="M1346 558Q1337 526 1322 494" stroke="#efd592" stroke-width="2.5" opacity="0.54"/><path d="M205 540Q202 516 196 491" stroke="#a8823e" stroke-width="2.4" opacity="0.54"/><path d="M147 767Q144 721 138 676" stroke="#f3e0a8" stroke-width="3.6" opacity="0.46"/><path d="M602 867Q622 816 649 765" stroke="#a8823e" stroke-width="4.2" opacity="0.66"/><path d="M833 536Q837 510 844 485" stroke="#8a6a36" stroke-width="2.4" opacity="0.77"/><path d="M893 743Q900 689 910 635" stroke="#c09a52" stroke-width="3.5" opacity="0.76"/><path d="M626 768Q631 721 637 673" stroke="#efd592" stroke-width="3.7" opacity="0.85"/><path d="M552 583Q544 548 530 514" stroke="#8a6a36" stroke-width="2.6" opacity="0.67"/><path d="M1185 479Q1187 457 1191 435" stroke="#f6e6b8" stroke-width="2.1" opacity="0.85"/><path d="M15 623Q26 583 45 544" stroke="#efd592" stroke-width="2.8" opacity="0.47"/><path d="M222 723Q238 675 262 628" stroke="#e6c87e" stroke-width="3.4" opacity="0.50"/><path d="M747 737Q747 685 748 634" stroke="#e6c87e" stroke-width="3.5" opacity="0.68"/><path d="M1308 661Q1312 626 1320 591" stroke="#8a6a36" stroke-width="3.1" opacity="0.68"/><path d="M1006 904Q1013 838 1023 771" stroke="#a8823e" stroke-width="4.4" opacity="0.57"/><path d="M18 656Q16 618 13 579" stroke="#e6c87e" stroke-width="3.0" opacity="0.71"/><path d="M419 521Q425 498 438 476" stroke="#c09a52" stroke-width="2.3" opacity="0.90"/><path d="M638 917Q656 861 683 806" stroke="#efd592" stroke-width="4.5" opacity="0.81"/><path d="M647 765Q637 715 622 664" stroke="#f6e6b8" stroke-width="3.6" opacity="0.61"/><path d="M1130 767Q1129 711 1127 654" stroke="#a8823e" stroke-width="3.7" opacity="0.79"/><path d="M1076 772Q1086 723 1102 674" stroke="#c09a52" stroke-width="3.7" opacity="0.57"/><path d="M350 645Q342 609 329 573" stroke="#f3e0a8" stroke-width="3.0" opacity="0.81"/><path d="M494 841Q486 781 474 721" stroke="#f0dba0" stroke-width="4.1" opacity="0.64"/><path d="M910 766Q924 721 946 677" stroke="#8a6a36" stroke-width="3.6" opacity="0.48"/><path d="M1250 855Q1233 794 1209 732" stroke="#e6c87e" stroke-width="4.1" opacity="0.73"/><path d="M16 477Q19 447 24 418" stroke="#a8823e" stroke-width="2.0" opacity="0.72"/><path d="M1179 739Q1177 696 1175 654" stroke="#f6e6b8" stroke-width="3.5" opacity="0.54"/><path d="M738 657Q743 616 752 575" stroke="#efd592" stroke-width="3.0" opacity="0.75"/><path d="M1088 886Q1072 819 1051 753" stroke="#c09a52" stroke-width="4.3" opacity="0.69"/><path d="M605 815Q608 753 611 690" stroke="#a8823e" stroke-width="3.9" opacity="0.64"/><path d="M653 855Q652 794 651 733" stroke="#f6e6b8" stroke-width="4.1" opacity="0.77"/><path d="M227 585Q232 551 242 517" stroke="#f6e6b8" stroke-width="2.6" opacity="0.83"/><path d="M776 688Q787 644 804 600" stroke="#e6c87e" stroke-width="3.2" opacity="0.64"/><path d="M933 935Q926 873 917 812" stroke="#f3e0a8" stroke-width="4.6" opacity="0.46"/><path d="M1016 491Q1022 460 1034 430" stroke="#efd592" stroke-width="2.1" opacity="0.68"/><path d="M1239 695Q1244 660 1253 625" stroke="#f6e6b8" stroke-width="3.3" opacity="0.60"/><path d="M505 871Q506 810 508 749" stroke="#c09a52" stroke-width="4.2" opacity="0.58"/><path d="M347 629Q344 600 336 571" stroke="#e6c87e" stroke-width="2.9" opacity="0.82"/><path d="M695 658Q695 622 696 586" stroke="#c09a52" stroke-width="3.0" opacity="0.74"/><path d="M457 838Q449 784 437 730" stroke="#efd592" stroke-width="4.0" opacity="0.80"/><path d="M997 489Q998 459 1000 429" stroke="#f3e0a8" stroke-width="2.1" opacity="0.63"/><path d="M64 520Q64 489 63 457" stroke="#f3e0a8" stroke-width="2.3" opacity="0.81"/><path d="M844 893Q851 828 859 763" stroke="#efd592" stroke-width="4.4" opacity="0.55"/><path d="M632 780Q615 727 592 674" stroke="#f6e6b8" stroke-width="3.7" opacity="0.84"/><path d="M139 666Q123 622 98 578" stroke="#f6e6b8" stroke-width="3.1" opacity="0.80"/><path d="M356 731Q354 688 350 644" stroke="#e6c87e" stroke-width="3.5" opacity="0.46"/><path d="M798 733Q798 679 798 624" stroke="#f3e0a8" stroke-width="3.5" opacity="0.82"/><path d="M581 830Q577 769 571 709" stroke="#efd592" stroke-width="4.0" opacity="0.46"/><path d="M817 650Q832 607 856 565" stroke="#f0dba0" stroke-width="3.0" opacity="0.80"/><path d="M114 725Q127 682 147 638" stroke="#f3e0a8" stroke-width="3.4" opacity="0.64"/><path d="M924 474Q930 446 943 417" stroke="#c09a52" stroke-width="2.0" opacity="0.84"/><path d="M25 530Q20 500 10 469" stroke="#f6e6b8" stroke-width="2.3" opacity="0.87"/><path d="M1031 640Q1021 601 1005 561" stroke="#efd592" stroke-width="2.9" opacity="0.58"/><path d="M687 729Q701 682 722 635" stroke="#f3e0a8" stroke-width="3.4" opacity="0.77"/><path d="M20 475Q24 452 34 428" stroke="#efd592" stroke-width="2.0" opacity="0.63"/><path d="M828 615Q838 573 854 532" stroke="#f3e0a8" stroke-width="2.8" opacity="0.59"/><path d="M1004 911Q988 849 966 787" stroke="#efd592" stroke-width="4.5" opacity="0.61"/><path d="M869 770Q865 720 859 671" stroke="#f0dba0" stroke-width="3.7" opacity="0.88"/><path d="M782 835Q765 785 741 735" stroke="#e6c87e" stroke-width="4.0" opacity="0.84"/><path d="M21 807Q33 761 50 714" stroke="#8a6a36" stroke-width="3.9" opacity="0.89"/><path d="M535 584Q539 555 549 525" stroke="#c09a52" stroke-width="2.6" opacity="0.81"/><path d="M2 602Q1 572 -2 541" stroke="#f3e0a8" stroke-width="2.7" opacity="0.58"/><path d="M1229 535Q1221 501 1206 466" stroke="#f0dba0" stroke-width="2.4" opacity="0.61"/><path d="M764 510Q759 480 748 451" stroke="#c09a52" stroke-width="2.2" opacity="0.59"/><path d="M546 497Q552 471 566 446" stroke="#f3e0a8" stroke-width="2.1" opacity="0.81"/><path d="M121 684Q130 637 144 591" stroke="#c09a52" stroke-width="3.2" opacity="0.63"/><path d="M358 712Q352 662 342 611" stroke="#c09a52" stroke-width="3.3" opacity="0.54"/><path d="M249 559Q246 526 241 493" stroke="#e6c87e" stroke-width="2.5" opacity="0.63"/><path d="M206 711Q217 677 238 643" stroke="#e6c87e" stroke-width="3.3" opacity="0.84"/><path d="M640 643Q636 612 629 581" stroke="#f3e0a8" stroke-width="3.0" opacity="0.61"/><path d="M28 712Q40 678 60 644" stroke="#f0dba0" stroke-width="3.3" opacity="0.71"/><path d="M1277 569Q1271 544 1258 518" stroke="#f0dba0" stroke-width="2.6" opacity="0.80"/><path d="M1330 851Q1312 800 1285 750" stroke="#c09a52" stroke-width="4.1" opacity="0.90"/><path d="M38 646Q36 615 31 585" stroke="#f0dba0" stroke-width="3.0" opacity="0.67"/><path d="M1235 863Q1242 797 1252 730" stroke="#efd592" stroke-width="4.2" opacity="0.77"/><path d="M440 512Q436 492 425 473" stroke="#8a6a36" stroke-width="2.2" opacity="0.53"/><path d="M512 865Q521 810 534 755" stroke="#f6e6b8" stroke-width="4.2" opacity="0.47"/><path d="M486 589Q496 551 514 514" stroke="#f3e0a8" stroke-width="2.7" opacity="0.57"/><path d="M1021 709Q1020 659 1019 609" stroke="#efd592" stroke-width="3.3" opacity="0.52"/><path d="M1296 821Q1287 763 1275 704" stroke="#f0dba0" stroke-width="4.0" opacity="0.79"/><path d="M447 519Q443 498 432 478" stroke="#f0dba0" stroke-width="2.3" opacity="0.62"/><path d="M1114 675Q1128 629 1148 583" stroke="#f0dba0" stroke-width="3.1" opacity="0.77"/><path d="M50 561Q43 524 31 487" stroke="#e6c87e" stroke-width="2.5" opacity="0.85"/><path d="M617 535Q621 516 633 497" stroke="#f3e0a8" stroke-width="2.4" opacity="0.73"/><path d="M469 680Q468 632 467 584" stroke="#e6c87e" stroke-width="3.2" opacity="0.51"/><path d="M78 573Q79 538 82 503" stroke="#f6e6b8" stroke-width="2.6" opacity="0.65"/><path d="M577 539Q572 518 558 496" stroke="#a8823e" stroke-width="2.4" opacity="0.60"/><path d="M678 548Q683 524 696 500" stroke="#efd592" stroke-width="2.4" opacity="0.52"/><path d="M871 709Q886 662 908 616" stroke="#f0dba0" stroke-width="3.3" opacity="0.83"/><path d="M1042 525Q1040 490 1037 455" stroke="#a8823e" stroke-width="2.3" opacity="0.90"/><path d="M135 900Q152 843 177 787" stroke="#f3e0a8" stroke-width="4.4" opacity="0.82"/><path d="M199 925Q196 856 192 787" stroke="#e6c87e" stroke-width="4.5" opacity="0.68"/><path d="M1090 676Q1082 627 1071 579" stroke="#e6c87e" stroke-width="3.1" opacity="0.65"/><path d="M301 894Q284 833 260 771" stroke="#f6e6b8" stroke-width="4.4" opacity="0.68"/><path d="M242 577Q249 545 262 513" stroke="#f0dba0" stroke-width="2.6" opacity="0.79"/><path d="M189 552Q192 519 197 487" stroke="#c09a52" stroke-width="2.5" opacity="0.71"/><path d="M91 564Q89 529 85 495" stroke="#f3e0a8" stroke-width="2.5" opacity="0.68"/><path d="M389 632Q400 595 420 558" stroke="#efd592" stroke-width="2.9" opacity="0.46"/><path d="M658 893Q645 825 628 756" stroke="#f6e6b8" stroke-width="4.4" opacity="0.70"/><path d="M51 928Q55 858 60 787" stroke="#f3e0a8" stroke-width="4.5" opacity="0.61"/><path d="M1337 903Q1331 847 1322 790" stroke="#c09a52" stroke-width="4.4" opacity="0.82"/><path d="M443 872Q437 808 429 743" stroke="#f3e0a8" stroke-width="4.2" opacity="0.58"/><path d="M1009 520Q1002 497 988 474" stroke="#f6e6b8" stroke-width="2.3" opacity="0.46"/><path d="M309 920Q291 863 266 806" stroke="#a8823e" stroke-width="4.5" opacity="0.70"/><path d="M27 914Q40 843 58 771" stroke="#a8823e" stroke-width="4.5" opacity="0.46"/><path d="M796 749Q803 700 814 651" stroke="#efd592" stroke-width="3.5" opacity="0.61"/><path d="M247 514Q247 492 246 470" stroke="#a8823e" stroke-width="2.2" opacity="0.50"/><path d="M1221 527Q1216 500 1207 473" stroke="#c09a52" stroke-width="2.3" opacity="0.52"/><path d="M1030 736Q1039 696 1055 656" stroke="#8a6a36" stroke-width="3.5" opacity="0.76"/><path d="M832 748Q844 710 865 673" stroke="#f3e0a8" stroke-width="3.5" opacity="0.80"/><path d="M332 627Q330 593 328 559" stroke="#e6c87e" stroke-width="2.9" opacity="0.82"/><path d="M74 864Q94 808 123 752" stroke="#e6c87e" stroke-width="4.2" opacity="0.56"/><path d="M873 666Q874 628 875 589" stroke="#efd592" stroke-width="3.1" opacity="0.60"/><path d="M923 563Q922 538 920 512" stroke="#8a6a36" stroke-width="2.5" opacity="0.80"/><path d="M874 906Q894 840 921 774" stroke="#f3e0a8" stroke-width="4.4" opacity="0.47"/><path d="M367 768Q358 715 345 662" stroke="#f3e0a8" stroke-width="3.7" opacity="0.73"/><path d="M718 587Q726 557 743 528" stroke="#a8823e" stroke-width="2.6" opacity="0.50"/><path d="M230 632Q238 604 254 577" stroke="#a8823e" stroke-width="2.9" opacity="0.49"/><path d="M1286 744Q1286 697 1287 649" stroke="#a8823e" stroke-width="3.5" opacity="0.86"/><path d="M378 738Q387 687 401 636" stroke="#a8823e" stroke-width="3.5" opacity="0.83"/><path d="M787 754Q776 703 759 653" stroke="#e6c87e" stroke-width="3.6" opacity="0.66"/><path d="M846 725Q840 679 830 634" stroke="#c09a52" stroke-width="3.4" opacity="0.60"/><path d="M753 558Q751 520 746 482" stroke="#e6c87e" stroke-width="2.5" opacity="0.52"/><path d="M447 913Q436 852 421 790" stroke="#c09a52" stroke-width="4.5" opacity="0.58"/><path d="M219 829Q232 782 251 735" stroke="#f0dba0" stroke-width="4.0" opacity="0.75"/><path d="M1151 710Q1159 669 1171 627" stroke="#c09a52" stroke-width="3.3" opacity="0.90"/><path d="M1289 785Q1295 734 1304 684" stroke="#f6e6b8" stroke-width="3.8" opacity="0.75"/><path d="M1173 757Q1174 701 1175 646" stroke="#f0dba0" stroke-width="3.6" opacity="0.57"/><path d="M872 763Q869 709 864 655" stroke="#efd592" stroke-width="3.6" opacity="0.45"/><path d="M808 826Q827 774 854 722" stroke="#f6e6b8" stroke-width="4.0" opacity="0.64"/><path d="M1204 834Q1199 775 1192 716" stroke="#f0dba0" stroke-width="4.0" opacity="0.76"/><path d="M487 604Q487 572 488 540" stroke="#8a6a36" stroke-width="2.7" opacity="0.74"/><path d="M1029 473Q1027 443 1023 413" stroke="#a8823e" stroke-width="2.0" opacity="0.53"/><path d="M200 611Q202 575 205 538" stroke="#efd592" stroke-width="2.8" opacity="0.82"/><path d="M1337 623Q1331 586 1319 549" stroke="#e6c87e" stroke-width="2.9" opacity="0.54"/><path d="M1257 668Q1248 638 1231 609" stroke="#f0dba0" stroke-width="3.1" opacity="0.58"/><path d="M431 719Q429 671 426 623" stroke="#8a6a36" stroke-width="3.4" opacity="0.63"/><path d="M821 636Q831 604 848 571" stroke="#efd592" stroke-width="2.9" opacity="0.69"/><path d="M517 516Q517 492 519 468" stroke="#f6e6b8" stroke-width="2.3" opacity="0.85"/><path d="M672 918Q678 854 686 789" stroke="#e6c87e" stroke-width="4.5" opacity="0.76"/><path d="M127 817Q122 764 114 711" stroke="#efd592" stroke-width="3.9" opacity="0.82"/><path d="M153 708Q160 657 170 606" stroke="#8a6a36" stroke-width="3.3" opacity="0.73"/><path d="M1126 714Q1137 676 1154 638" stroke="#8a6a36" stroke-width="3.4" opacity="0.53"/><path d="M832 763Q848 720 874 676" stroke="#f3e0a8" stroke-width="3.6" opacity="0.76"/><path d="M4 475Q5 450 6 424" stroke="#a8823e" stroke-width="2.0" opacity="0.63"/><path d="M21 516Q19 499 11 482" stroke="#a8823e" stroke-width="2.3" opacity="0.84"/><path d="M710 886Q697 832 679 777" stroke="#efd592" stroke-width="4.3" opacity="0.52"/><path d="M703 711Q693 677 675 642" stroke="#f0dba0" stroke-width="3.3" opacity="0.82"/><path d="M1113 755Q1100 717 1077 679" stroke="#e6c87e" stroke-width="3.6" opacity="0.51"/><path d="M380 581Q382 557 386 533" stroke="#efd592" stroke-width="2.6" opacity="0.61"/><path d="M532 679Q541 647 556 615" stroke="#f3e0a8" stroke-width="3.2" opacity="0.65"/><path d="M344 758Q356 719 376 680" stroke="#f6e6b8" stroke-width="3.6" opacity="0.59"/><path d="M1126 888Q1131 829 1137 769" stroke="#f0dba0" stroke-width="4.3" opacity="0.89"/><path d="M935 501Q936 474 939 447" stroke="#8a6a36" stroke-width="2.2" opacity="0.59"/><path d="M668 877Q655 812 638 746" stroke="#f6e6b8" stroke-width="4.3" opacity="0.53"/><path d="M11 646Q7 601 2 556" stroke="#e6c87e" stroke-width="3.0" opacity="0.50"/><path d="M532 718Q519 677 498 636" stroke="#efd592" stroke-width="3.4" opacity="0.64"/><path d="M764 895Q763 833 761 771" stroke="#e6c87e" stroke-width="4.4" opacity="0.56"/><path d="M917 486Q914 467 904 448" stroke="#f6e6b8" stroke-width="2.1" opacity="0.49"/><path d="M1152 595Q1151 568 1150 541" stroke="#c09a52" stroke-width="2.7" opacity="0.52"/><path d="M997 634Q1007 602 1025 569" stroke="#c09a52" stroke-width="2.9" opacity="0.58"/><path d="M282 691Q288 642 298 593" stroke="#a8823e" stroke-width="3.2" opacity="0.72"/><path d="M1366 675Q1363 633 1359 590" stroke="#c09a52" stroke-width="3.1" opacity="0.51"/><path d="M935 819Q948 772 966 726" stroke="#8a6a36" stroke-width="3.9" opacity="0.46"/><path d="M200 804Q207 759 218 713" stroke="#f6e6b8" stroke-width="3.9" opacity="0.80"/><path d="M260 578Q249 542 230 506" stroke="#e6c87e" stroke-width="2.6" opacity="0.81"/><path d="M266 823Q248 766 222 710" stroke="#a8823e" stroke-width="4.0" opacity="0.51"/><path d="M390 803Q405 754 428 705" stroke="#f6e6b8" stroke-width="3.9" opacity="0.87"/><path d="M506 552Q510 518 518 484" stroke="#8a6a36" stroke-width="2.5" opacity="0.46"/><path d="M638 797Q634 735 627 672" stroke="#efd592" stroke-width="3.8" opacity="0.53"/><path d="M1260 524Q1263 493 1271 463" stroke="#f3e0a8" stroke-width="2.3" opacity="0.63"/><path d="M594 753Q581 701 561 650" stroke="#f3e0a8" stroke-width="3.6" opacity="0.70"/><path d="M1299 763Q1289 713 1274 662" stroke="#f0dba0" stroke-width="3.6" opacity="0.77"/><path d="M600 588Q597 552 590 516" stroke="#f3e0a8" stroke-width="2.7" opacity="0.50"/><path d="M904 825Q922 765 947 705" stroke="#f3e0a8" stroke-width="4.0" opacity="0.89"/><path d="M51 787Q61 738 76 690" stroke="#e6c87e" stroke-width="3.8" opacity="0.79"/><path d="M959 510Q962 487 969 464" stroke="#c09a52" stroke-width="2.2" opacity="0.58"/><path d="M1306 512Q1311 490 1324 467" stroke="#f0dba0" stroke-width="2.2" opacity="0.68"/><path d="M284 785Q298 732 318 679" stroke="#f6e6b8" stroke-width="3.7" opacity="0.67"/><path d="M1314 558Q1316 522 1318 487" stroke="#f6e6b8" stroke-width="2.5" opacity="0.70"/><path d="M880 921Q867 855 850 790" stroke="#f3e0a8" stroke-width="4.5" opacity="0.53"/><path d="M128 631Q118 594 102 556" stroke="#f0dba0" stroke-width="2.9" opacity="0.75"/><path d="M334 581Q332 548 330 516" stroke="#e6c87e" stroke-width="2.6" opacity="0.76"/><path d="M977 532Q972 504 963 476" stroke="#efd592" stroke-width="2.3" opacity="0.70"/><path d="M234 824Q238 764 244 705" stroke="#f0dba0" stroke-width="4.0" opacity="0.83"/><path d="M285 659Q271 619 248 580" stroke="#f0dba0" stroke-width="3.0" opacity="0.54"/><path d="M388 498Q389 480 394 461" stroke="#f0dba0" stroke-width="2.2" opacity="0.88"/><path d="M614 545Q610 516 603 486" stroke="#efd592" stroke-width="2.4" opacity="0.47"/><path d="M1352 688Q1359 646 1371 604" stroke="#e6c87e" stroke-width="3.2" opacity="0.89"/><path d="M150 732Q148 685 145 638" stroke="#c09a52" stroke-width="3.5" opacity="0.80"/><path d="M496 620Q492 591 485 563" stroke="#a8823e" stroke-width="2.8" opacity="0.74"/><path d="M1031 506Q1031 490 1028 473" stroke="#f6e6b8" stroke-width="2.2" opacity="0.58"/><path d="M881 556Q890 523 908 490" stroke="#f6e6b8" stroke-width="2.5" opacity="0.50"/><path d="M428 804Q423 748 416 691" stroke="#e6c87e" stroke-width="3.9" opacity="0.59"/><path d="M761 641Q768 607 782 572" stroke="#c09a52" stroke-width="3.0" opacity="0.48"/><path d="M1108 520Q1118 490 1137 459" stroke="#8a6a36" stroke-width="2.3" opacity="0.86"/><path d="M682 909Q666 847 643 785" stroke="#a8823e" stroke-width="4.4" opacity="0.72"/><path d="M196 761Q184 718 167 675" stroke="#8a6a36" stroke-width="3.6" opacity="0.49"/><path d="M607 489Q608 471 614 454" stroke="#f3e0a8" stroke-width="2.1" opacity="0.46"/><path d="M1150 754Q1138 707 1119 659" stroke="#efd592" stroke-width="3.6" opacity="0.75"/><path d="M581 709Q579 667 577 625" stroke="#f6e6b8" stroke-width="3.3" opacity="0.86"/><path d="M408 546Q409 519 411 491" stroke="#e6c87e" stroke-width="2.4" opacity="0.71"/></g><g filter="url(#p3f)"><path d="M712 160C660 160 640 215 638 260C636 300 628 330 622 360C616 380 614 395 620 400L690 402L760 396C790 412 822 422 848 418C852 390 838 350 832 320C826 280 830 230 800 195C780 170 745 160 712 160Z" fill="#4b3026"/><path d="M800 230C812 280 810 340 830 400M640 300C636 340 630 370 632 395" stroke="#6e4a38" stroke-width="7" fill="none" opacity=".8"/><path d="M672 350L778 340L786 432L668 432Z" fill="#cf9572"/><path d="M672 360Q720 395 778 350L778 372Q725 415 672 385Z" fill="#b98060" opacity=".6"/><path d="M655 235C665 195 700 185 730 188C765 195 782 230 782 270C782 310 765 345 735 358C715 366 690 362 675 345C660 325 650 290 650 262Z" fill="#dca482"/><ellipse cx="782" cy="300" rx="9" ry="15" fill="#d09876"/><path d="M706 168C672 178 652 212 650 250C649 280 644 305 640 335C632 300 634 255 644 222C654 192 676 170 706 168Z" fill="#4b3026"/><path d="M700 168C745 172 778 212 782 258C786 300 792 330 806 355C816 320 818 262 803 217C787 185 750 162 700 168Z" fill="#4b3026"/><ellipse cx="670" cy="252" rx="9" ry="6" fill="#3a241c"/><ellipse cx="722" cy="259" rx="10" ry="6.5" fill="#3a241c"/><path d="M655 238Q670 230 684 238M706 242Q725 236 742 248" stroke="#4a3026" stroke-width="5" fill="none"/><path d="M690 262Q680 282 686 290" stroke="#c08a6a" stroke-width="5" fill="none"/><path d="M664 304Q688 312 716 300Q700 330 676 322Q668 316 664 304Z" fill="#b8625a"/><path d="M668 306Q690 312 712 303Q700 318 680 316Z" fill="#fff"/><path d="M520 585L588 605L560 705L515 690Z" fill="#dca482"/><path d="M560 708L508 704L380 600L325 572L250 522L236 500L300 508L335 486L352 516L392 540L560 632Z" fill="#dca482"/><path d="M840 600L900 590L905 660L1010 600L1060 585L1115 535L1100 575L1040 605L890 722L848 700Z" fill="#dca482"/><path d="M602 695L835 695L860 790L872 920H572L585 790Z" fill="#c9ac86"/><path d="M600 700H838V728H596Z" fill="#bb9c74"/><path d="M715 735V920M640 760V920M800 760V920" stroke="#b3946c" stroke-width="5"/><path d="M575 420C610 405 640 405 672 395Q725 435 780 398C815 408 850 418 872 432L908 580L838 615L835 700L600 700L598 625L585 608L493 572L548 450Z" fill="#f6f6f8"/><path d="M838 615L835 700L790 700C800 650 800 600 790 560Z" fill="#dcdce2" opacity=".7"/><path d="M598 625L600 700L640 700C625 660 620 620 622 590Z" fill="#e0e0e6" opacity=".6"/><path d="M915 530L1045 433L1135 468L1000 585Z" fill="#e9e3d3"/><path d="M915 530L1000 585L1135 468L1215 440L1212 458L1000 602L912 572Z" fill="#b6544a"/><path d="M1000 582L1133 470L1205 445L1003 590Z" fill="#f0eadc"/><path d="M945 525L1050 450M960 540L1070 460M978 553L1088 470M995 565L1105 478" stroke="#a9a294" stroke-width="5" opacity=".7"/><path d="M1005 600L1080 560L1112 538L1100 578L1040 608Z" fill="#dca482"/></g></svg></div><span class="t cap" style="left:50%;top:439.30000000000007px;transform:translate(-50%,-50%)">1248 × 832</span></div></div><div class="node" style="left:1091px;top:65.6px;width:192.79999999999995px;height:77.5px;background:#1b1b1d"><div class="abs" style="left:-1px;top:-1px;width:192.79999999999995px;height:77.5px"><div class="bd" style="top:28px;height:48.5px;background:#27282b"></div><svg width="9" height="5.4" viewBox="0 0 10 6" style="left:11.7px;top:11.600000000000001px"><path d="M1 1l4 4 4-4" fill="none" stroke="#85868f" stroke-width="1.2" stroke-linecap="round" stroke-linejoin="round"/></svg><span class="t ttl" style="left:33px;top:14.5px;color:#a3a4ab">Flux KV Cache</span><div class="dot" style="left:0;top:40.60000000000001px;background:#a78fc9"></div><span class="t lbl" style="left:10px;top:40.60000000000001px;">model</span><div class="dot" style="left:192.79999999999995px;top:40.60000000000001px;background:#a78fc9"></div><span class="t slo" style="right:10px;top:40.60000000000001px;">MODEL</span><div class="abs" style="left:7.5px;top:54.400000000000006px;width:33.5px;height:15px;border-radius:8px;background:#333438"></div><span class="t abs" style="left:13.5px;top:62.10000000000001px;font-size:8.2px;color:#a9abb3">BETA</span></div></div><div class="node" style="left:1087.6px;top:168px;width:208.80000000000018px;height:121.39999999999998px;background:#1b1b1d"><div class="abs" style="left:-1px;top:-1px;width:208.80000000000018px;height:121.39999999999998px"><div class="bd" style="top:28px;height:92.39999999999998px;background:#27282b"></div><svg width="9" height="5.4" viewBox="0 0 10 6" style="left:11.7px;top:11.600000000000001px"><path d="M1 1l4 4 4-4" fill="none" stroke="#85868f" stroke-width="1.2" stroke-linecap="round" stroke-linejoin="round"/></svg><span class="t ttl" style="left:33px;top:14.5px;color:#a3a4ab">CFGGuider</span><div class="dot" style="left:0;top:41.19999999999999px;background:#a78fc9"></div><span class="t lbl" style="left:10px;top:41.19999999999999px;">model</span><div class="dot" style="left:0;top:59.19999999999999px;background:#e59a7a"></div><span class="t lbl" style="left:10px;top:59.19999999999999px;">positive</span><div class="dot" style="left:0;top:78.19999999999999px;background:#e59a7a"></div><span class="t lbl" style="left:10px;top:78.19999999999999px;">negative</span><div class="dot" style="left:208.80000000000018px;top:41.19999999999999px;background:#66e8f2"></div><span class="t slo" style="right:10px;top:41.19999999999999px;">GUIDER</span><span class="t lbl" style="left:10px;top:101.30000000000001px;">cfg</span><div class="w" style="left:73.40000000000009px;top:90.80000000000001px;width:125.79999999999995px;height:21.0px;"></div><svg width="125.79999999999995" height="21.0" style="left:73.40000000000009px;top:90.80000000000001px"><path d="M6 10.5h12.5" stroke="#9fa1a7" stroke-width="1.2"/><path d="M107.79999999999995 10.5h11M113.29999999999995 5.0v11" stroke="#b4b6bb" stroke-width="1.2"/></svg><span class="t valb" style="left:102.40000000000009px;top:101.30000000000001px;font-size:10.6px;margin-top:0">1.0</span></div></div><div class="node" style="left:1087.5px;top:318.9px;width:208.79999999999995px;height:90.30000000000001px;background:#1b1b1d"><div class="abs" style="left:-1px;top:-1px;width:208.79999999999995px;height:90.30000000000001px"><div class="bd" style="top:28px;height:61.30000000000001px;background:#27282b"></div><svg width="9" height="5.4" viewBox="0 0 10 6" style="left:11.7px;top:11.600000000000001px"><path d="M1 1l4 4 4-4" fill="none" stroke="#85868f" stroke-width="1.2" stroke-linecap="round" stroke-linejoin="round"/></svg><span class="t ttl" style="left:33px;top:14.5px;color:#a3a4ab">KSamplerSelect</span><div class="dot" style="left:208.79999999999995px;top:40.10000000000002px;background:#b4b4b4"></div><span class="t slo" style="right:10px;top:40.10000000000002px;">SAMPLER</span><span class="t lbl" style="left:10px;top:64.60000000000002px;">sampler_name</span><div class="w" style="left:88.20000000000005px;top:52.5px;width:111.0px;height:24.100000000000023px;"></div><span class="t valb" style="left:96.20000000000005px;top:64.55000000000001px;font-size:10.6px">euler</span><svg width="9" height="5.4" viewBox="0 0 10 6" style="left:182.70000000000005px;top:62.35000000000001px"><path d="M1 1l4 4 4-4" fill="none" stroke="#5b5d63" stroke-width="1.2" stroke-linecap="round" stroke-linejoin="round"/></svg></div></div><div class="node" style="left:1106.4px;top:446px;width:208.39999999999986px;height:132.89999999999998px;background:#1b1b1d"><div class="abs" style="left:-1px;top:-1px;width:208.39999999999986px;height:132.89999999999998px"><div class="bd" style="top:28px;height:103.89999999999998px;background:#27282b"></div><svg width="9" height="5.4" viewBox="0 0 10 6" style="left:11.7px;top:11.600000000000001px"><path d="M1 1l4 4 4-4" fill="none" stroke="#85868f" stroke-width="1.2" stroke-linecap="round" stroke-linejoin="round"/></svg><span class="t ttl" style="left:33px;top:14.5px;color:#a3a4ab">Empty Flux 2 Latent</span><div class="dot" style="left:208.39999999999986px;top:40.10000000000002px;background:#d4a0c4"></div><span class="t slo" style="right:10px;top:40.10000000000002px;">LATENT</span><div class="dot" style="left:0;top:63.5px;background:#b4b4b4"></div><span class="t lbl" style="left:10px;top:63.5px;">width</span><div class="w" style="left:73.79999999999995px;top:53.30000000000001px;width:124.70000000000005px;height:20.400000000000034px;"></div><svg width="124.70000000000005" height="20.400000000000034" style="left:73.79999999999995px;top:53.30000000000001px"><path d="M6 10.200000000000017h12.5" stroke="#5d5f65" stroke-width="1.2"/><path d="M106.70000000000005 10.200000000000017h11M112.20000000000005 4.700000000000017v11" stroke="#5d5f65" stroke-width="1.2"/></svg><span class="t val dim" style="left:101.79999999999995px;top:63.5px;font-size:10.6px;margin-top:0">1024</span><div class="dot" style="left:0;top:88.60000000000002px;background:#b4b4b4"></div><span class="t lbl" style="left:10px;top:88.60000000000002px;">height</span><div class="w" style="left:73.79999999999995px;top:78.29999999999995px;width:124.70000000000005px;height:20.40000000000009px;"></div><svg width="124.70000000000005" height="20.40000000000009" style="left:73.79999999999995px;top:78.29999999999995px"><path d="M6 10.200000000000045h12.5" stroke="#5d5f65" stroke-width="1.2"/><path d="M106.70000000000005 10.200000000000045h11M112.20000000000005 4.7000000000000455v11" stroke="#5d5f65" stroke-width="1.2"/></svg><span class="t val dim" style="left:101.79999999999995px;top:88.5px;font-size:10.6px;margin-top:0">1024</span><span class="t lbl" style="left:10px;top:113.29999999999995px;">batch_size</span><div class="w" style="left:73.79999999999995px;top:103.20000000000005px;width:124.70000000000005px;height:20.399999999999977px;"></div><svg width="124.70000000000005" height="20.399999999999977" style="left:73.79999999999995px;top:103.20000000000005px"><path d="M6 10.199999999999989h12.5" stroke="#5d5f65" stroke-width="1.2"/><path d="M106.70000000000005 10.199999999999989h11M112.20000000000005 4.699999999999989v11" stroke="#b4b6bb" stroke-width="1.2"/></svg><span class="t valb" style="left:101.79999999999995px;top:113.40000000000009px;font-size:10.6px;margin-top:0">1</span></div></div><div class="node" style="left:1114.4px;top:607.8px;width:173.0999999999999px;height:141.60000000000002px;background:#1b1b1d"><div class="abs" style="left:-1px;top:-1px;width:173.0999999999999px;height:141.60000000000002px"><div class="bd" style="top:28px;height:112.60000000000002px;background:#27282b"></div><svg width="9" height="5.4" viewBox="0 0 10 6" style="left:11.7px;top:11.600000000000001px"><path d="M1 1l4 4 4-4" fill="none" stroke="#85868f" stroke-width="1.2" stroke-linecap="round" stroke-linejoin="round"/></svg><span class="t ttl" style="left:33px;top:14.5px;color:#a3a4ab">Get Image Size</span><div class="dot" style="left:0;top:41.0px;background:#8aaad0"></div><span class="t lbl" style="left:10px;top:41.0px;">image</span><div class="dot" style="left:173.0999999999999px;top:41.0px;background:#b4b4b4"></div><span class="t slo" style="right:10px;top:41.0px;font-size:11.3px;margin-top:.6px">width</span><div class="dot" style="left:173.0999999999999px;top:59.700000000000045px;background:#b4b4b4"></div><span class="t slo" style="right:10px;top:59.700000000000045px;font-size:11.3px;margin-top:.6px">height</span><div class="dot" style="left:173.0999999999999px;top:78.40000000000009px;background:#b4b4b4"></div><span class="t slo" style="right:10px;top:78.40000000000009px;font-size:11.3px;margin-top:.6px">batch_size</span></div></div><div class="node" style="left:1346.9px;top:65.6px;width:213.0999999999999px;height:89.4px;background:#1b1b1d"><div class="abs" style="left:-1px;top:-1px;width:213.0999999999999px;height:89.4px"><div class="bd" style="top:28px;height:60.400000000000006px;background:#27282b"></div><svg width="9" height="5.4" viewBox="0 0 10 6" style="left:11.7px;top:11.600000000000001px"><path d="M1 1l4 4 4-4" fill="none" stroke="#85868f" stroke-width="1.2" stroke-linecap="round" stroke-linejoin="round"/></svg><span class="t ttl" style="left:33px;top:14.5px;color:#a3a4ab">RandomNoise</span><span class="t lbl" style="left:10px;top:64.6px;">noise_seed</span><div class="w" style="left:73.59999999999991px;top:53.400000000000006px;width:139.5px;height:22.5px;"></div><svg width="139.5" height="22.5" style="left:73.59999999999991px;top:53.400000000000006px"><path d="M6 11.25h12.5" stroke="#9fa1a7" stroke-width="1.2"/><path d="M121.5 11.25h11M127.0 5.75v11" stroke="#b4b6bb" stroke-width="1.2"/></svg><span class="t valb" style="left:101.59999999999991px;top:64.65px;font-size:10.6px;margin-top:0">50744</span></div></div><div class="node" style="left:1354.4px;top:189px;width:205.5999999999999px;height:134.39999999999998px;background:#1b1b1d"><div class="abs" style="left:-1px;top:-1px;width:205.5999999999999px;height:134.39999999999998px"><div class="bd" style="top:28px;height:105.39999999999998px;background:#27282b"></div><svg width="9" height="5.4" viewBox="0 0 10 6" style="left:11.7px;top:11.600000000000001px"><path d="M1 1l4 4 4-4" fill="none" stroke="#85868f" stroke-width="1.2" stroke-linecap="round" stroke-linejoin="round"/></svg><span class="t ttl" style="left:33px;top:14.5px;color:#a3a4ab">SamplerCustomAdvanced</span><div class="dot" style="left:0;top:41.19999999999999px;background:#b4b4b4"></div><span class="t lbl" style="left:10px;top:41.19999999999999px;">noise</span><div class="dot" style="left:0;top:59.900000000000006px;background:#66e8f2"></div><span class="t lbl" style="left:10px;top:59.900000000000006px;">guider</span><div class="dot" style="left:0;top:78.19999999999999px;background:#b4b4b4"></div><span class="t lbl" style="left:10px;top:78.19999999999999px;">sampler</span><div class="dot" style="left:0;top:97.39999999999998px;background:#b4b4b4"></div><span class="t lbl" style="left:10px;top:97.39999999999998px;">sigmas</span><div class="dot" style="left:0;top:115.69999999999999px;background:#d4a0c4"></div><span class="t lbl" style="left:10px;top:115.69999999999999px;">latent_ima...</span><span class="t lbl" style="left:109.09999999999991px;top:59.900000000000006px;">denoised_output</span></div></div><div class="node" style="left:1362.9px;top:430.5px;width:197.0999999999999px;height:133.29999999999995px;background:#1b1b1d"><div class="abs" style="left:-1px;top:-1px;width:197.0999999999999px;height:133.29999999999995px"><div class="bd" style="top:28px;height:104.29999999999995px;background:#27282b"></div><svg width="9" height="5.4" viewBox="0 0 10 6" style="left:11.7px;top:11.600000000000001px"><path d="M1 1l4 4 4-4" fill="none" stroke="#85868f" stroke-width="1.2" stroke-linecap="round" stroke-linejoin="round"/></svg><span class="t ttl" style="left:33px;top:14.5px;color:#a3a4ab">Flux2Scheduler</span><span class="t lbl" style="left:10px;top:63.5px;">steps</span><div class="w" style="left:73.09999999999991px;top:53.0px;width:124px;height:21.0px;"></div><svg width="124" height="21.0" style="left:73.09999999999991px;top:53.0px"><path d="M6 10.5h12.5" stroke="#9fa1a7" stroke-width="1.2"/><path d="M106 10.5h11M111.5 5.0v11" stroke="#b4b6bb" stroke-width="1.2"/></svg><span class="t valb" style="left:103.09999999999991px;top:63.5px;font-size:10.6px;margin-top:0">4</span><div class="dot" style="left:0;top:88.29999999999995px;background:#b4b4b4"></div><span class="t lbl" style="left:10px;top:88.29999999999995px;">width</span><div class="w" style="left:73.09999999999991px;top:78.0px;width:124px;height:20.5px;"></div><svg width="124" height="20.5" style="left:73.09999999999991px;top:78.0px"><path d="M6 10.25h12.5" stroke="#5d5f65" stroke-width="1.2"/><path d="M106 10.25h11M111.5 4.75v11" stroke="#5d5f65" stroke-width="1.2"/></svg><span class="t val dim" style="left:101.09999999999991px;top:88.25px;font-size:10.6px;margin-top:0">1024</span><div class="dot" style="left:0;top:113.29999999999995px;background:#b4b4b4"></div><span class="t lbl" style="left:10px;top:113.29999999999995px;">height</span><div class="w" style="left:73.09999999999991px;top:103.0px;width:124px;height:20.5px;"></div><svg width="124" height="20.5" style="left:73.09999999999991px;top:103.0px"><path d="M6 10.25h12.5" stroke="#5d5f65" stroke-width="1.2"/><path d="M106 10.25h11M111.5 4.75v11" stroke="#5d5f65" stroke-width="1.2"/></svg><span class="t val dim" style="left:101.09999999999991px;top:113.25px;font-size:10.6px;margin-top:0">1024</span></div></div><div class="abs" style="left:393px;top:925px;width:278.5px;height:20px;background:#232326;border-radius:9px 9px 0 0;box-shadow:0 0 0 1px #323337"></div><div class="abs" style="left:0;top:0;width:110.5px;height:36.5px;background:#28292b;border-radius:0 0 9px 0;box-shadow:0 1px 4px rgba(0,0,0,.5)"></div>
<div class="abs" style="left:-8px;top:0;width:35.5px;height:32px;background:#1a1b1c;border-radius:0 0 8px 8px"></div>
<svg width="16" height="16" viewBox="0 0 24 24" style="left:4.3px;top:8.6px"><g fill="none" stroke="#fff" stroke-width="2.1" stroke-linecap="round" stroke-linejoin="round"><rect x="2.5" y="2.5" width="6.5" height="6.5" rx="2.6"/><rect x="14.5" y="2.5" width="6.5" height="6.5" rx="2.6"/><rect x="14.5" y="15" width="6.5" height="6.5" rx="2.6"/><path d="M5.8 9v2.5a6.8 6.8 0 0 0 6.8 6.8h2M9 5.8h5.5"/></g></svg>
<span class="t" style="position:absolute;left:42.2px;top:17.3px;font-size:13.7px;font-weight:700;color:#fff">Graph</span>
<svg width="12" height="8" viewBox="0 0 12 8" style="left:89.5px;top:13.5px"><path d="M1.5 1.5l4.5 4.5 4.5-4.5" fill="none" stroke="#b9babd" stroke-width="1.4" stroke-linecap="round" stroke-linejoin="round"/></svg>

<div class="abs" style="left:603.5px;top:-10px;width:900px;height:49.5px;background:#17181b;border-radius:0 0 0 10px;box-shadow:0 1px 5px rgba(0,0,0,.6)"></div>
<!-- logo button -->
<div class="abs" style="left:620px;top:-6px;width:51.5px;height:40px;border-radius:0 0 0 7px;background:linear-gradient(#70b0ff,#5a9cf2);box-shadow:0 1px 0 #0a2450,1px 0 0 #0a2450"></div>
<svg width="27" height="27" viewBox="0 0 27 27" style="left:632.5px;top:3px"><g fill="none" stroke="#0b1a33" stroke-width="1.3" stroke-linejoin="round" stroke-linecap="round"><path d="M2.3 20.2L13.9 1.6l2.3 4.400"/><path d="M13.9 1.6L9.600 16.600l6 2 3.800-7.400 5.400 9"/><path d="M12.8 4.500L7.300 18M11.700 7.500L9 15.500" stroke-width="1"/><path d="M1.500 20.700h24M1.500 23h24M1.500 25.200h24" stroke-width="1.200"/><path d="M6.500 23v2.200M13 23v2.200M19.500 23v2.200" stroke-width="1.400"/></g></svg>
<div class="abs" style="left:671.5px;top:-6px;width:39px;height:40px;border-radius:0 0 6px 0;background:#2c2d2f"></div>
<svg width="10" height="12" viewBox="0 0 10 12" style="left:687.4px;top:11px"><path d="M1 0h8a1 1 0 0 1 1 1v11L5 9.3 0 12V1a1 1 0 0 1 1-1z" fill="#c4c4c6"/></svg>
<!-- manager group -->
<div class="abs" style="left:720px;top:-6px;width:93px;height:40px;border-radius:0 0 0 6px;background:#26699b"></div>
<svg width="12.800" height="12.800" viewBox="0 0 512 512" style="left:731.2px;top:10.800px"><path fill="#fff" d="M192 104.8c0-9.200-5.800-17.300-13.200-22.800C167.200 73.300 160 61.300 160 48c0-26.500 28.700-48 64-48s64 21.500 64 48c0 13.300-7.200 25.300-18.800 34c-7.400 5.500-13.200 13.600-13.200 22.800c0 12.800 10.400 23.200 23.200 23.200H336c26.500 0 48 21.500 48 48v56.800c0 12.800 10.400 23.200 23.200 23.200c9.200 0 17.300-5.800 22.800-13.200c8.700-11.600 20.700-18.800 34-18.800c26.500 0 48 28.700 48 64s-21.500 64-48 64c-13.300 0-25.300-7.200-34-18.800c-5.500-7.400-13.600-13.200-22.800-13.200c-12.800 0-23.200 10.400-23.200 23.200V464c0 26.500-21.500 48-48 48H279.200c-12.800 0-23.200-10.400-23.200-23.200c0-9.200 5.800-17.300 13.200-22.800c11.600-8.700 18.800-20.700 18.800-34c0-26.500-28.700-48-64-48s-64 21.500-64 48c0 13.300 7.200 25.300 18.800 34c7.400 5.500 13.200 13.600 13.200 22.800c0 12.800-10.400 23.200-23.200 23.200H48c-26.500 0-48-21.500-48-48V343.200C0 330.400 10.400 320 23.200 320c9.200 0 17.300 5.800 22.800 13.200C54.700 344.800 66.700 352 80 352c26.500 0 48-28.700 48-64s-21.500-64-48-64c-13.300 0-25.300 7.200-34 18.800C40.500 250.200 32.400 256 23.200 256C10.400 256 0 245.600 0 232.800V176c0-26.500 21.500-48 48-48H168.800c12.800 0 23.200-10.400 23.200-23.200z"/></svg>
<span class="t" style="position:absolute;left:750.6px;top:17.5px;font-size:12.7px;font-weight:700;color:#fff">Manager</span>
<div class="abs" style="left:813px;top:-6px;width:132.5px;height:40px;border-radius:0 0 6px 0;background:#707070"></div>
<svg width="12" height="12" viewBox="0 0 24 24" style="left:823.4px;top:11px"><path fill="#fff" d="M12 .8l3.4 7.4 8 .9-6 5.500 1.700 7.900L12 18.500 4.900 22.500l1.700-7.900-6-5.500 8-.9z"/></svg>

<svg width="13" height="13" viewBox="0 0 13 13" style="left:856.3px;top:10.800px"><path d="M3.200 5.200V3.500a2.500 2.500 0 0 1 4.900-.8l3.100 9" fill="none" stroke="#fff" stroke-width="1.500" stroke-linecap="round"/><rect x=".3" y="5" width="5.700" height="7.300" rx="1.600" fill="#fff"/><circle cx="2" cy="10.200" r=".9" fill="#707070"/><path d="M8 12.500l.9-1.900h3.100l.9 1.900z" fill="#fff"/></svg>
<svg width="13" height="13" viewBox="0 0 13 13" style="left:889.7px;top:10.800px"><path d="M3.200 5.200V3.500a2.500 2.500 0 0 1 4.900-.8l3.100 9" fill="none" stroke="#fff" stroke-width="1.500" stroke-linecap="round"/><rect x=".3" y="5" width="5.700" height="7.300" rx="1.600" fill="#fff"/><circle cx="2" cy="10.200" r=".9" fill="#707070"/><path d="M8 12.500l.9-1.900h3.100l.9 1.900z" fill="#fff"/></svg>
<svg width="13" height="11" viewBox="0 0 13 11" style="left:923.3px;top:11.7px"><path fill="#fff" d="M7.600 0L13 4.600 7.600 9.200V6.400C4.200 6.300 1.900 7.500.2 10.500.400 6.300 2.700 3.100 7.600 2.800z"/></svg>
<!-- show image feed -->
<div class="abs" style="left:954px;top:-6px;width:171px;height:40.700px;border-radius:6px;background:#707070"></div>
<svg width="13" height="12" viewBox="0 0 13 12" style="left:964.2px;top:11.800px"><path fill="#fff" d="M3.500 0h8.300A1.200 1.200 0 0 1 13 1.200v6.600A1.200 1.200 0 0 1 11.800 9H3.500a1.200 1.200 0 0 1-1.200-1.200V1.200A1.200 1.200 0 0 1 3.500 0zM4.200 7.300h7l-2.300-3-1.600 2-1.100-1.300z"/><path fill="none" stroke="#fff" stroke-width="1.300" d="M.65 2.500v7.300a1.300 1.300 0 0 0 1.300 1.300h8.500"/></svg>
<span class="t" style="position:absolute;left:984.8px;top:18.400px;font-size:13.200px;color:#fff;-webkit-text-stroke:.3px #fff;margin-top:.5px">Show Image Feed</span>
<svg width="15" height="14" viewBox="0 0 15 14" style="left:1098.400px;top:11.500px"><g fill="none" stroke="#3fcfa2" stroke-width="2.300" stroke-linecap="round" stroke-linejoin="round"><path d="M9.600 1.300h3.200v8.500a2.400 2.400 0 0 1-2.400 2.400H6.200"/><path d="M9.300 8.600H4.900a3.100 3.100 0 1 1 3.100-3.100v2"/></g></svg>
<!-- drag handle -->
<svg width="8" height="12" viewBox="0 0 8 12" style="left:1142.800px;top:12.300px"><g fill="#d5d5d8"><circle cx="1.300" cy="1.300" r="1.100"/><circle cx="6.700" cy="1.300" r="1.100"/><circle cx="1.300" cy="6" r="1.100"/><circle cx="6.700" cy="6" r="1.100"/><circle cx="1.300" cy="10.700" r="1.100"/><circle cx="6.700" cy="10.700" r="1.100"/></g></svg>
<!-- batch count -->
<div class="abs" style="left:1158.600px;top:1px;width:64px;height:32px;border-radius:8px;background:#27282a"></div>
<span class="t" style="position:absolute;left:1172.400px;top:17.500px;font-size:14.500px;color:#fff">1</span>
<svg width="10" height="22" viewBox="0 0 10 22" style="left:1197px;top:6px"><g fill="none" stroke-width="1.200" stroke-linecap="round" stroke-linejoin="round"><path d="M1.500 5.500L5 2l3.500 3.500" stroke="#aeb0b4"/><path d="M1.500 16.500L5 20l3.500-3.500" stroke="#55575b"/></g></svg>
<!-- run -->
<div class="abs" style="left:1288px;top:1px;width:30px;height:32px;border-radius:0 8px 8px 0;background:#27282a"></div>
<div class="abs" style="left:1214px;top:1px;width:80px;height:32px;border-radius:8px;background:#188cec"></div>
<svg width="14" height="16" viewBox="0 0 14 16" style="left:1231.300px;top:9px"><path d="M1.800 2.300v11.400a.7.7 0 0 0 1.100.6l8.800-5.700a.7.7 0 0 0 0-1.200L2.900 1.700a.7.7 0 0 0-1.100.6z" fill="none" stroke="#fff" stroke-width="1.500" stroke-linejoin="round"/></svg>
<span class="t" style="position:absolute;left:1253.200px;top:17.200px;font-size:14.400px;color:#fff;letter-spacing:-.4px;-webkit-text-stroke:.25px #fff">Run</span>
<svg width="10" height="6" viewBox="0 0 10 6" style="left:1300.600px;top:14.500px"><path d="M1.200 1l3.800 3.800L8.800 1" fill="none" stroke="#b5b7bb" stroke-width="1.200" stroke-linecap="round" stroke-linejoin="round"/></svg>
<!-- cancel -->
<div class="abs" style="left:1326px;top:1px;width:32px;height:32px;border-radius:8px;background:#792d33"></div>
<svg width="10" height="10" viewBox="0 0 10 10" style="left:1336.900px;top:12.600px"><path d="M1 1l8 8M9 1L1 9" stroke="#c99297" stroke-width="1.200" stroke-linecap="round"/></svg>
<!-- queue -->
<div class="abs" style="left:1366px;top:1px;width:76px;height:32px;border-radius:8px;background:#27282a"></div>
<span class="t" style="position:absolute;left:1377.700px;top:17.200px;font-size:14.600px;color:#fff;-webkit-text-stroke:.25px #fff">0 active</span>
<div class="abs" style="left:1450px;top:1px;width:40px;height:32px;border-radius:8px;background:#27282a"></div>
<svg width="15" height="14" viewBox="0 0 15 14" style="left:1458.800px;top:10px"><g fill="none" stroke="#fff" stroke-width="1.500" stroke-linejoin="round"><rect x=".9" y=".9" width="13.200" height="12.200" rx="2.200"/><path d="M9.300 1v12"/></g></svg>
</body></html>
